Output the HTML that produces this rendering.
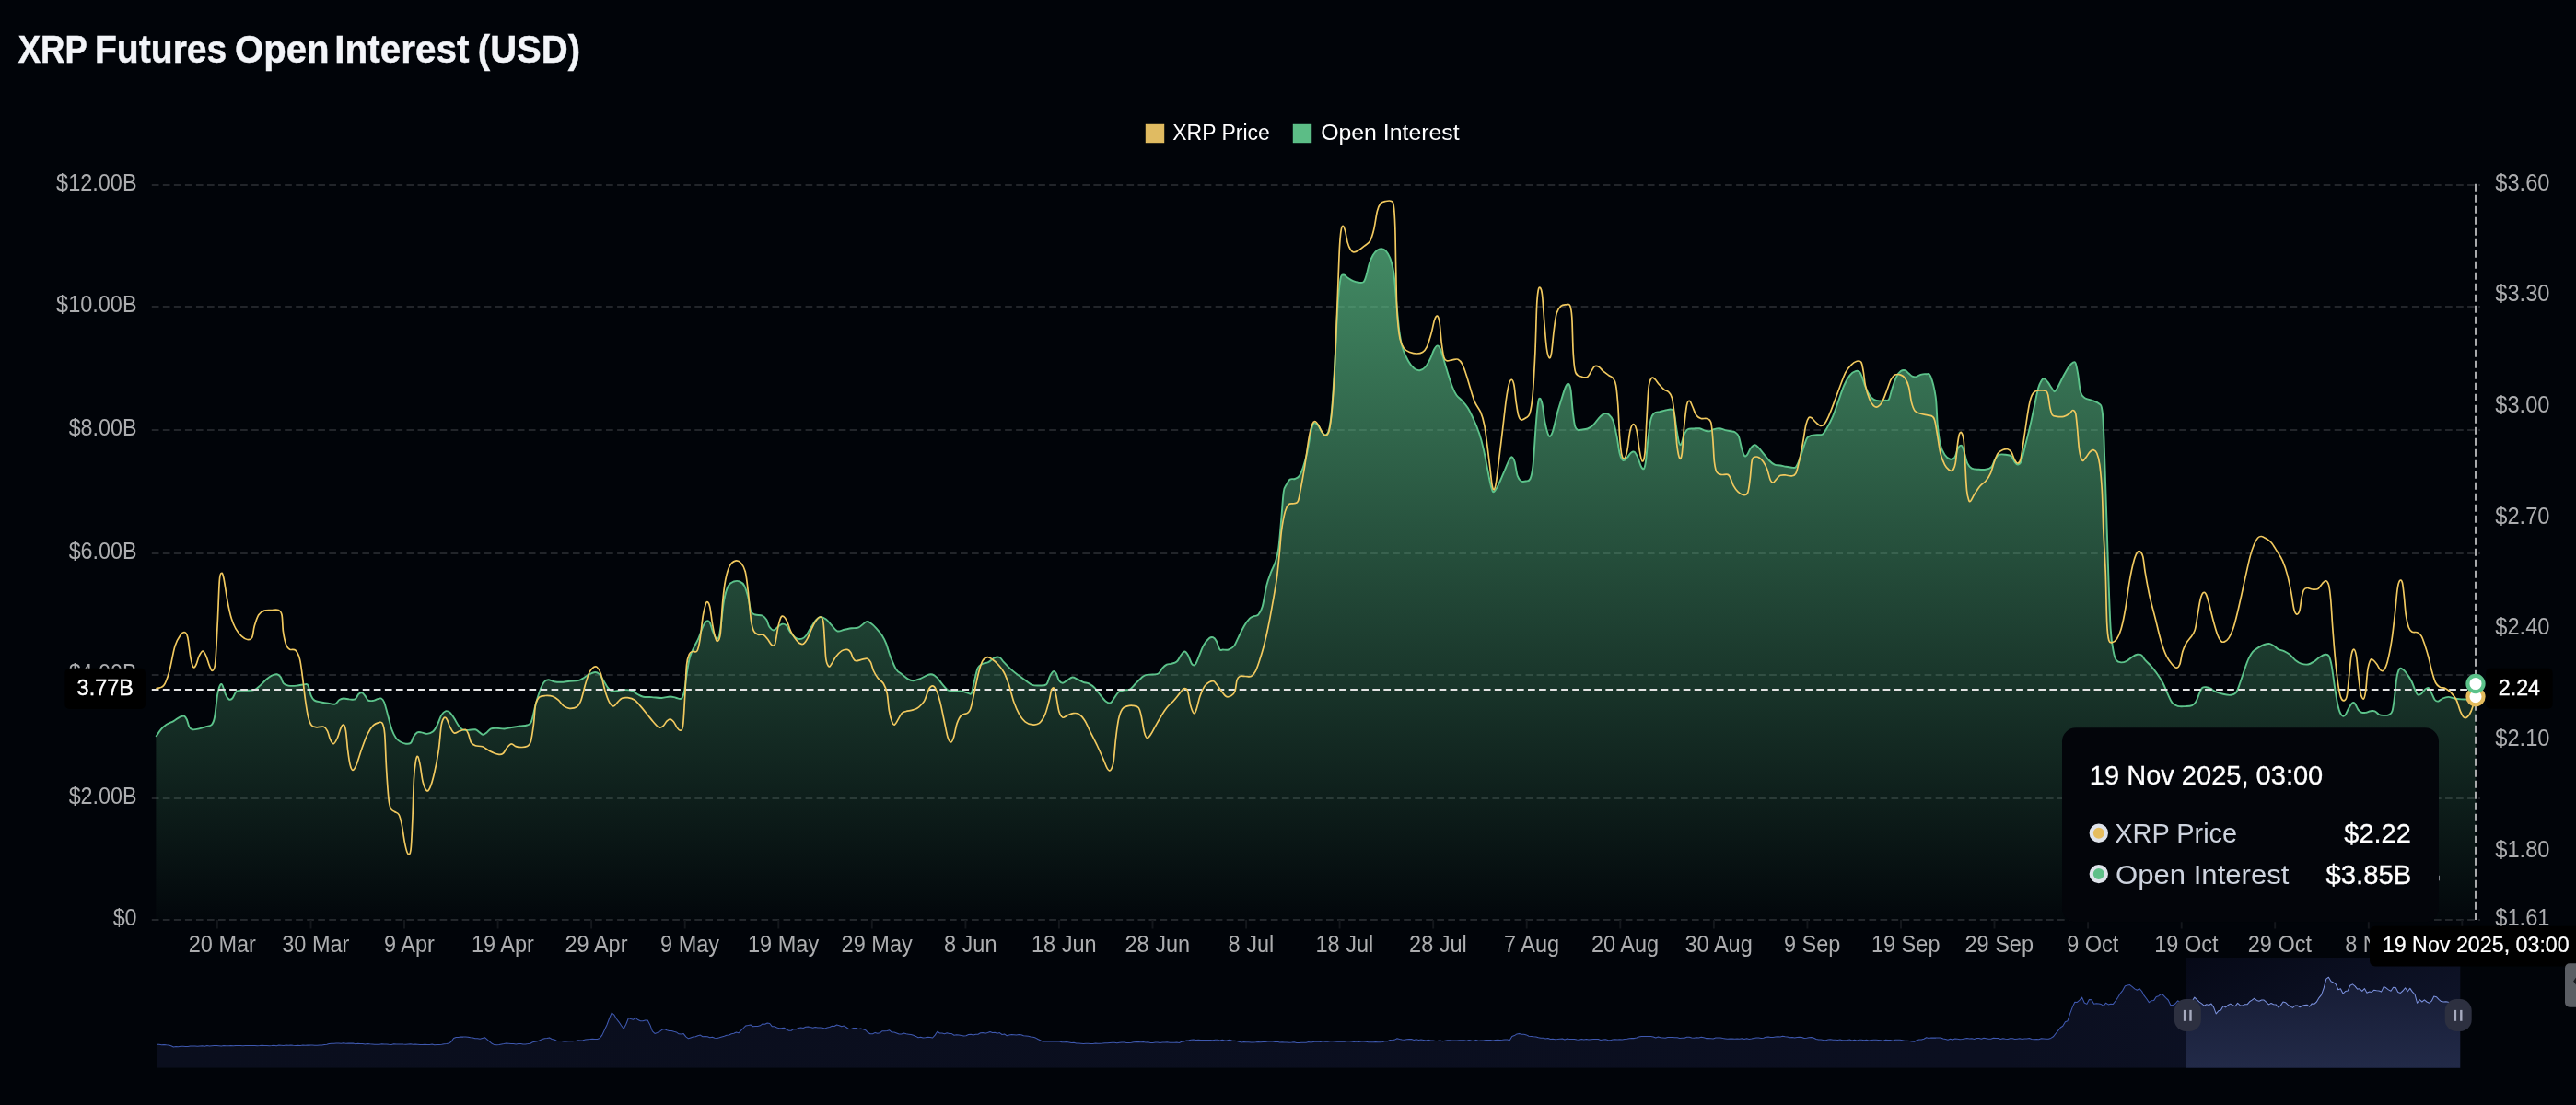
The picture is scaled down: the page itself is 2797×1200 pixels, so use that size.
<!DOCTYPE html>
<html><head><meta charset="utf-8"><title>XRP Futures Open Interest (USD)</title>
<style>html,body{margin:0;padding:0;background:#010409;}svg{will-change:transform}body{width:2797px;height:1200px;overflow:hidden;font-family:"Liberation Sans",sans-serif;}</style>
</head><body>
<svg width="2797" height="1200" viewBox="0 0 2797 1200" style="display:block">
<defs>
<linearGradient id="ga" x1="0" y1="270" x2="0" y2="999" gradientUnits="userSpaceOnUse">
<stop offset="0" stop-color="#5ec38a" stop-opacity="0.70"/>
<stop offset="1" stop-color="#5ec38a" stop-opacity="0.015"/>
</linearGradient>
<linearGradient id="gm" x1="0" y1="0" x2="1" y2="0">
<stop offset="0" stop-color="#0a0e1d"/><stop offset="0.8" stop-color="#0b0f20"/><stop offset="1" stop-color="#0d1226"/>
</linearGradient>
<linearGradient id="gs" x1="0" y1="0" x2="1" y2="1">
<stop offset="0" stop-color="#060917"/><stop offset="1" stop-color="#12182f"/>
</linearGradient>
<linearGradient id="gw" x1="0" y1="1070" x2="0" y2="1160" gradientUnits="userSpaceOnUse">
<stop offset="0" stop-color="#171d36"/><stop offset="1" stop-color="#222a48"/>
</linearGradient>
</defs>
<rect width="2797" height="1200" fill="#010409"/>
<text transform="translate(19.70 68.00) scale(0.8505 1)" font-family="Liberation Sans, sans-serif" font-size="43" font-weight="bold" fill="#f2f4f8" text-anchor="start" stroke="#f2f4f8" stroke-width="0.45">XRP</text>
<text transform="translate(103.00 68.00) scale(0.9094 1)" font-family="Liberation Sans, sans-serif" font-size="43" font-weight="bold" fill="#f2f4f8" text-anchor="start" stroke="#f2f4f8" stroke-width="0.45">Futures</text>
<text transform="translate(254.90 68.00) scale(0.9346 1)" font-family="Liberation Sans, sans-serif" font-size="43" font-weight="bold" fill="#f2f4f8" text-anchor="start" stroke="#f2f4f8" stroke-width="0.45">Open</text>
<text transform="translate(363.30 68.00) scale(0.9419 1)" font-family="Liberation Sans, sans-serif" font-size="43" font-weight="bold" fill="#f2f4f8" text-anchor="start" stroke="#f2f4f8" stroke-width="0.45">Interest</text>
<text transform="translate(518.80 68.00) scale(0.9311 1)" font-family="Liberation Sans, sans-serif" font-size="43" font-weight="bold" fill="#f2f4f8" text-anchor="start" stroke="#f2f4f8" stroke-width="0.45">(USD)</text>
<rect x="1244.3" y="135.3" width="19.4" height="19.4" fill="#e0bb62" stroke="#f0c864" stroke-width="1"/>
<text transform="translate(1273.30 151.80) scale(0.9984 1)" font-family="Liberation Sans, sans-serif" font-size="23" fill="#ffffff" text-anchor="start">XRP Price</text>
<rect x="1404.3" y="135.3" width="19.4" height="19.4" fill="#5cbd86" stroke="#62cd92" stroke-width="1"/>
<text transform="translate(1434.20 151.80) scale(1.0799 1)" font-family="Liberation Sans, sans-serif" font-size="23" fill="#ffffff" text-anchor="start">Open Interest</text>
<line x1="164.8" x2="2693" y1="201" y2="201" stroke="#22252a" stroke-width="2" stroke-dasharray="7.7 4.33"/>
<line x1="164.8" x2="2693" y1="333" y2="333" stroke="#22252a" stroke-width="2" stroke-dasharray="7.7 4.33"/>
<line x1="164.8" x2="2693" y1="467" y2="467" stroke="#22252a" stroke-width="2" stroke-dasharray="7.7 4.33"/>
<line x1="164.8" x2="2693" y1="601" y2="601" stroke="#22252a" stroke-width="2" stroke-dasharray="7.7 4.33"/>
<line x1="164.8" x2="2693" y1="733" y2="733" stroke="#22252a" stroke-width="2" stroke-dasharray="7.7 4.33"/>
<line x1="164.8" x2="2693" y1="867" y2="867" stroke="#22252a" stroke-width="2" stroke-dasharray="7.7 4.33"/>
<line x1="164.8" x2="2693" y1="999" y2="999" stroke="#22252a" stroke-width="2" stroke-dasharray="7.7 4.33"/>
<line x1="235.9" x2="235.9" y1="999" y2="1008.5" stroke="#14171c" stroke-width="2"/>
<line x1="337.5" x2="337.5" y1="999" y2="1008.5" stroke="#14171c" stroke-width="2"/>
<line x1="439.0" x2="439.0" y1="999" y2="1008.5" stroke="#14171c" stroke-width="2"/>
<line x1="540.6" x2="540.6" y1="999" y2="1008.5" stroke="#14171c" stroke-width="2"/>
<line x1="642.1" x2="642.1" y1="999" y2="1008.5" stroke="#14171c" stroke-width="2"/>
<line x1="743.7" x2="743.7" y1="999" y2="1008.5" stroke="#14171c" stroke-width="2"/>
<line x1="845.3" x2="845.3" y1="999" y2="1008.5" stroke="#14171c" stroke-width="2"/>
<line x1="946.8" x2="946.8" y1="999" y2="1008.5" stroke="#14171c" stroke-width="2"/>
<line x1="1048.4" x2="1048.4" y1="999" y2="1008.5" stroke="#14171c" stroke-width="2"/>
<line x1="1149.9" x2="1149.9" y1="999" y2="1008.5" stroke="#14171c" stroke-width="2"/>
<line x1="1251.5" x2="1251.5" y1="999" y2="1008.5" stroke="#14171c" stroke-width="2"/>
<line x1="1353.1" x2="1353.1" y1="999" y2="1008.5" stroke="#14171c" stroke-width="2"/>
<line x1="1454.6" x2="1454.6" y1="999" y2="1008.5" stroke="#14171c" stroke-width="2"/>
<line x1="1556.2" x2="1556.2" y1="999" y2="1008.5" stroke="#14171c" stroke-width="2"/>
<line x1="1657.7" x2="1657.7" y1="999" y2="1008.5" stroke="#14171c" stroke-width="2"/>
<line x1="1759.3" x2="1759.3" y1="999" y2="1008.5" stroke="#14171c" stroke-width="2"/>
<line x1="1860.9" x2="1860.9" y1="999" y2="1008.5" stroke="#14171c" stroke-width="2"/>
<line x1="1962.4" x2="1962.4" y1="999" y2="1008.5" stroke="#14171c" stroke-width="2"/>
<line x1="2064.0" x2="2064.0" y1="999" y2="1008.5" stroke="#14171c" stroke-width="2"/>
<line x1="2165.5" x2="2165.5" y1="999" y2="1008.5" stroke="#14171c" stroke-width="2"/>
<line x1="2267.1" x2="2267.1" y1="999" y2="1008.5" stroke="#14171c" stroke-width="2"/>
<line x1="2368.7" x2="2368.7" y1="999" y2="1008.5" stroke="#14171c" stroke-width="2"/>
<line x1="2470.2" x2="2470.2" y1="999" y2="1008.5" stroke="#14171c" stroke-width="2"/>
<line x1="2571.8" x2="2571.8" y1="999" y2="1008.5" stroke="#14171c" stroke-width="2"/>
<line x1="2673.3" x2="2673.3" y1="999" y2="1008.5" stroke="#14171c" stroke-width="2"/>
<text transform="translate(148.60 207.20) scale(0.9393 1)" font-family="Liberation Sans, sans-serif" font-size="25" fill="#acadaf" text-anchor="end">$12.00B</text>
<text transform="translate(148.60 339.20) scale(0.9393 1)" font-family="Liberation Sans, sans-serif" font-size="25" fill="#acadaf" text-anchor="end">$10.00B</text>
<text transform="translate(148.60 473.20) scale(0.9339 1)" font-family="Liberation Sans, sans-serif" font-size="25" fill="#acadaf" text-anchor="end">$8.00B</text>
<text transform="translate(148.60 607.20) scale(0.9339 1)" font-family="Liberation Sans, sans-serif" font-size="25" fill="#acadaf" text-anchor="end">$6.00B</text>
<text transform="translate(148.60 739.20) scale(0.9339 1)" font-family="Liberation Sans, sans-serif" font-size="25" fill="#acadaf" text-anchor="end">$4.00B</text>
<text transform="translate(148.60 873.20) scale(0.9339 1)" font-family="Liberation Sans, sans-serif" font-size="25" fill="#acadaf" text-anchor="end">$2.00B</text>
<text transform="translate(148.60 1005.20) scale(0.9336 1)" font-family="Liberation Sans, sans-serif" font-size="25" fill="#acadaf" text-anchor="end">$0</text>
<text transform="translate(2709.30 207.10) scale(0.9463 1)" font-family="Liberation Sans, sans-serif" font-size="25" fill="#acadaf" text-anchor="start">$3.60</text>
<text transform="translate(2709.30 327.20) scale(0.9463 1)" font-family="Liberation Sans, sans-serif" font-size="25" fill="#acadaf" text-anchor="start">$3.30</text>
<text transform="translate(2709.30 448.00) scale(0.9463 1)" font-family="Liberation Sans, sans-serif" font-size="25" fill="#acadaf" text-anchor="start">$3.00</text>
<text transform="translate(2709.30 568.60) scale(0.9463 1)" font-family="Liberation Sans, sans-serif" font-size="25" fill="#acadaf" text-anchor="start">$2.70</text>
<text transform="translate(2709.30 689.00) scale(0.9463 1)" font-family="Liberation Sans, sans-serif" font-size="25" fill="#acadaf" text-anchor="start">$2.40</text>
<text transform="translate(2709.30 810.20) scale(0.9463 1)" font-family="Liberation Sans, sans-serif" font-size="25" fill="#acadaf" text-anchor="start">$2.10</text>
<text transform="translate(2709.30 931.40) scale(0.9463 1)" font-family="Liberation Sans, sans-serif" font-size="25" fill="#acadaf" text-anchor="start">$1.80</text>
<text transform="translate(2709.30 1005.40) scale(0.9463 1)" font-family="Liberation Sans, sans-serif" font-size="25" fill="#acadaf" text-anchor="start">$1.61</text>
<text transform="translate(241.30 1034.00) scale(0.9410 1)" font-family="Liberation Sans, sans-serif" font-size="25" fill="#acadaf" text-anchor="middle">20 Mar</text>
<text transform="translate(342.85 1034.00) scale(0.9410 1)" font-family="Liberation Sans, sans-serif" font-size="25" fill="#acadaf" text-anchor="middle">30 Mar</text>
<text transform="translate(444.40 1034.00) scale(0.9410 1)" font-family="Liberation Sans, sans-serif" font-size="25" fill="#acadaf" text-anchor="middle">9 Apr</text>
<text transform="translate(545.95 1034.00) scale(0.9410 1)" font-family="Liberation Sans, sans-serif" font-size="25" fill="#acadaf" text-anchor="middle">19 Apr</text>
<text transform="translate(647.50 1034.00) scale(0.9410 1)" font-family="Liberation Sans, sans-serif" font-size="25" fill="#acadaf" text-anchor="middle">29 Apr</text>
<text transform="translate(749.05 1034.00) scale(0.9410 1)" font-family="Liberation Sans, sans-serif" font-size="25" fill="#acadaf" text-anchor="middle">9 May</text>
<text transform="translate(850.60 1034.00) scale(0.9410 1)" font-family="Liberation Sans, sans-serif" font-size="25" fill="#acadaf" text-anchor="middle">19 May</text>
<text transform="translate(952.15 1034.00) scale(0.9410 1)" font-family="Liberation Sans, sans-serif" font-size="25" fill="#acadaf" text-anchor="middle">29 May</text>
<text transform="translate(1053.70 1034.00) scale(0.9410 1)" font-family="Liberation Sans, sans-serif" font-size="25" fill="#acadaf" text-anchor="middle">8 Jun</text>
<text transform="translate(1155.25 1034.00) scale(0.9410 1)" font-family="Liberation Sans, sans-serif" font-size="25" fill="#acadaf" text-anchor="middle">18 Jun</text>
<text transform="translate(1256.80 1034.00) scale(0.9410 1)" font-family="Liberation Sans, sans-serif" font-size="25" fill="#acadaf" text-anchor="middle">28 Jun</text>
<text transform="translate(1358.35 1034.00) scale(0.9410 1)" font-family="Liberation Sans, sans-serif" font-size="25" fill="#acadaf" text-anchor="middle">8 Jul</text>
<text transform="translate(1459.90 1034.00) scale(0.9410 1)" font-family="Liberation Sans, sans-serif" font-size="25" fill="#acadaf" text-anchor="middle">18 Jul</text>
<text transform="translate(1561.45 1034.00) scale(0.9410 1)" font-family="Liberation Sans, sans-serif" font-size="25" fill="#acadaf" text-anchor="middle">28 Jul</text>
<text transform="translate(1663.00 1034.00) scale(0.9410 1)" font-family="Liberation Sans, sans-serif" font-size="25" fill="#acadaf" text-anchor="middle">7 Aug</text>
<text transform="translate(1764.55 1034.00) scale(0.9410 1)" font-family="Liberation Sans, sans-serif" font-size="25" fill="#acadaf" text-anchor="middle">20 Aug</text>
<text transform="translate(1866.10 1034.00) scale(0.9410 1)" font-family="Liberation Sans, sans-serif" font-size="25" fill="#acadaf" text-anchor="middle">30 Aug</text>
<text transform="translate(1967.65 1034.00) scale(0.9410 1)" font-family="Liberation Sans, sans-serif" font-size="25" fill="#acadaf" text-anchor="middle">9 Sep</text>
<text transform="translate(2069.20 1034.00) scale(0.9410 1)" font-family="Liberation Sans, sans-serif" font-size="25" fill="#acadaf" text-anchor="middle">19 Sep</text>
<text transform="translate(2170.75 1034.00) scale(0.9410 1)" font-family="Liberation Sans, sans-serif" font-size="25" fill="#acadaf" text-anchor="middle">29 Sep</text>
<text transform="translate(2272.30 1034.00) scale(0.9410 1)" font-family="Liberation Sans, sans-serif" font-size="25" fill="#acadaf" text-anchor="middle">9 Oct</text>
<text transform="translate(2373.85 1034.00) scale(0.9410 1)" font-family="Liberation Sans, sans-serif" font-size="25" fill="#acadaf" text-anchor="middle">19 Oct</text>
<text transform="translate(2475.40 1034.00) scale(0.9410 1)" font-family="Liberation Sans, sans-serif" font-size="25" fill="#acadaf" text-anchor="middle">29 Oct</text>
<text transform="translate(2576.95 1034.00) scale(0.9410 1)" font-family="Liberation Sans, sans-serif" font-size="25" fill="#acadaf" text-anchor="middle">8 Nov</text>
<path d="M169.4,800.0C170.3,798.7 172.7,794.5 174.6,792.3C176.5,790.1 178.5,788.3 180.8,786.8C183.1,785.3 186.2,784.4 188.5,783.1C190.8,781.8 192.7,780.0 194.6,779.1C196.5,778.2 198.4,777.1 199.8,777.5C201.2,777.9 202.0,779.5 202.9,781.5C203.8,783.5 204.4,787.4 205.4,789.2C206.4,791.0 207.3,791.9 209.1,792.3C210.9,792.7 213.8,791.9 216.2,791.4C218.6,790.9 221.5,790.0 223.8,789.2C226.1,788.4 228.4,788.6 230.0,786.8C231.6,785.0 232.1,784.0 233.1,778.5C234.1,773.0 235.2,759.6 236.2,753.8C237.2,748.0 238.3,745.2 239.2,743.7C240.1,742.2 240.8,742.9 241.7,744.6C242.6,746.3 243.7,751.3 244.8,753.8C245.9,756.3 247.3,758.6 248.5,759.4C249.7,760.2 250.9,759.8 252.2,758.5C253.5,757.2 254.8,752.9 256.2,751.4C257.6,749.9 259.0,750.1 260.8,749.8C262.6,749.5 264.3,749.9 266.9,749.8C269.5,749.7 273.6,750.1 276.2,749.2C278.8,748.3 280.2,746.4 282.3,744.6C284.4,742.8 286.4,740.3 288.5,738.5C290.6,736.7 292.6,734.8 294.6,733.8C296.7,732.8 299.1,732.0 300.8,732.3C302.5,732.6 303.6,733.8 304.8,735.4C306.0,737.0 306.4,740.7 307.8,742.2C309.2,743.7 310.7,744.2 313.1,744.6C315.5,745.0 319.2,744.9 322.3,744.6C325.4,744.4 329.4,743.1 331.5,743.1C333.6,743.1 333.6,742.6 334.6,744.6C335.6,746.6 336.6,752.7 337.7,755.4C338.8,758.1 339.6,759.4 341.4,760.6C343.2,761.8 346.0,762.0 348.5,762.5C351.0,763.0 353.6,763.4 356.2,763.7C358.8,764.1 361.8,765.2 363.8,764.6C365.9,764.0 366.9,761.0 368.5,760.0C370.1,759.0 371.3,758.6 373.1,758.5C374.9,758.4 377.1,759.2 379.2,759.4C381.2,759.5 383.7,760.3 385.4,759.4C387.1,758.5 388.1,755.0 389.4,753.8C390.7,752.6 392.0,752.0 393.1,752.3C394.2,752.6 395.1,754.0 396.2,755.4C397.3,756.8 398.3,759.7 399.8,760.6C401.3,761.5 403.7,761.1 405.4,760.9C407.1,760.6 408.6,759.5 410.0,759.1C411.4,758.7 412.8,757.9 414.0,758.5C415.2,759.1 416.0,759.7 417.1,762.5C418.2,765.3 419.4,770.4 420.8,775.4C422.2,780.4 423.9,787.9 425.4,792.3C426.9,796.6 428.5,799.3 430.0,801.5C431.5,803.7 432.8,804.5 434.6,805.5C436.4,806.5 438.9,807.5 440.8,807.7C442.7,807.9 444.6,808.1 446.0,806.8C447.4,805.5 447.9,801.9 449.1,800.0C450.3,798.1 451.7,796.2 453.1,795.4C454.5,794.6 455.9,795.1 457.7,795.4C459.5,795.6 461.8,797.0 463.8,796.9C465.9,796.8 468.2,796.0 470.0,794.5C471.8,793.0 473.1,790.6 474.6,787.7C476.1,784.8 477.7,779.5 479.2,776.9C480.7,774.3 482.2,772.8 483.8,772.3C485.4,771.8 486.9,772.5 488.5,773.8C490.1,775.1 491.6,777.7 493.1,780.0C494.6,782.3 496.2,785.7 497.7,787.7C499.2,789.8 500.5,791.4 502.3,792.3C504.1,793.2 506.2,792.9 508.5,792.9C510.8,792.9 514.2,791.9 516.2,792.3C518.2,792.7 519.4,794.5 520.8,795.4C522.2,796.3 523.2,797.8 524.5,797.8C525.8,797.8 527.1,796.5 528.5,795.4C529.9,794.3 531.3,792.2 533.1,791.4C534.9,790.6 536.8,790.8 539.2,790.8C541.6,790.8 545.0,791.6 547.7,791.5C550.4,791.4 552.6,790.5 555.4,790.0C558.2,789.5 561.8,788.9 564.6,788.5C567.4,788.1 570.2,788.3 572.3,787.5C574.3,786.7 575.4,787.5 576.9,783.8C578.4,780.1 580.0,771.0 581.5,765.4C583.0,759.8 584.7,754.1 586.2,750.0C587.8,745.9 589.3,742.8 590.8,740.8C592.3,738.8 593.6,738.4 595.4,738.3C597.2,738.2 599.2,739.8 601.5,740.2C603.8,740.6 606.4,740.9 609.2,740.8C612.0,740.7 615.4,740.1 618.5,739.8C621.6,739.5 625.2,739.8 627.7,739.2C630.2,738.6 631.8,737.4 633.8,736.2C635.8,735.0 637.9,733.2 640.0,732.2C642.1,731.2 644.4,730.0 646.2,730.0C648.0,730.0 649.3,730.7 650.8,732.2C652.3,733.7 653.9,736.8 655.4,739.2C656.9,741.7 658.5,745.0 660.0,746.9C661.5,748.8 662.8,750.1 664.6,750.6C666.4,751.1 668.5,750.2 670.8,750.0C673.1,749.8 675.9,749.1 678.5,749.1C681.1,749.1 683.9,749.2 686.2,750.0C688.5,750.8 690.2,752.9 692.3,754.0C694.3,755.1 695.9,756.3 698.5,756.8C701.1,757.3 704.4,756.9 707.7,757.1C711.0,757.3 715.2,758.1 718.5,758.0C721.8,757.9 725.2,756.5 727.7,756.5C730.2,756.5 731.8,757.4 733.8,757.7C735.8,758.1 738.5,759.9 740.0,758.6C741.5,757.3 742.1,755.0 743.1,750.0C744.1,745.0 745.2,734.6 746.2,728.5C747.2,722.4 747.9,717.5 749.2,713.1C750.5,708.7 752.2,705.6 753.8,702.3C755.3,699.0 757.0,696.7 758.5,693.1C760.0,689.5 761.7,683.9 763.1,680.8C764.5,677.7 765.8,675.4 767.1,674.6C768.4,673.8 769.7,674.4 770.8,676.2C771.9,678.0 772.7,682.6 773.8,685.4C774.9,688.2 776.4,692.1 777.5,693.1C778.6,694.1 779.7,694.3 780.6,691.5C781.5,688.7 782.2,682.9 783.1,676.2C784.0,669.5 784.9,658.2 786.2,651.5C787.5,644.8 789.0,639.5 790.8,636.2C792.6,632.9 794.8,632.3 796.9,631.5C799.0,630.7 801.2,630.7 803.1,631.5C805.0,632.3 806.8,633.4 808.3,636.2C809.8,639.0 811.1,643.9 812.3,648.5C813.5,653.1 814.1,660.6 815.4,663.8C816.7,667.0 818.0,666.7 820.0,667.5C822.0,668.3 825.7,667.6 827.7,668.5C829.8,669.4 831.0,671.1 832.3,673.1C833.6,675.1 834.1,678.9 835.4,680.8C836.7,682.7 838.5,684.5 840.0,684.5C841.5,684.5 843.1,681.9 844.6,680.8C846.1,679.7 847.7,678.0 849.2,677.7C850.7,677.4 852.2,677.7 853.8,679.2C855.3,680.7 856.7,684.6 858.5,686.9C860.3,689.2 862.6,692.0 864.6,693.1C866.6,694.2 869.0,694.2 870.8,693.7C872.6,693.2 873.9,691.9 875.4,690.0C876.9,688.1 878.2,685.1 880.0,682.3C881.8,679.5 884.4,675.1 886.2,673.1C888.0,671.1 889.0,670.1 890.8,670.0C892.6,669.9 894.8,671.0 896.9,672.5C899.0,674.0 901.0,677.1 903.1,679.2C905.2,681.4 906.9,684.6 909.2,685.4C911.5,686.2 914.3,684.3 916.9,683.8C919.5,683.3 922.0,682.7 924.6,682.3C927.2,681.9 929.6,682.6 932.3,681.4C935.0,680.2 938.6,676.0 940.8,675.2C943.0,674.4 943.6,675.6 945.4,676.8C947.2,678.0 949.5,680.1 951.5,682.3C953.5,684.5 955.9,687.2 957.7,690.0C959.5,692.8 960.8,695.4 962.3,699.2C963.8,703.1 965.1,708.5 966.9,713.1C968.7,717.7 971.0,723.7 973.1,726.9C975.2,730.1 977.2,730.5 979.2,732.2C981.2,733.9 983.4,735.9 985.4,737.1C987.4,738.3 989.2,739.2 991.5,739.2C993.8,739.2 996.6,738.1 999.2,737.1C1001.8,736.1 1004.7,733.9 1006.9,733.1C1009.1,732.3 1010.7,732.0 1012.5,732.5C1014.3,733.0 1015.8,734.3 1017.7,736.2C1019.6,738.1 1021.9,741.6 1023.8,743.8C1025.7,746.0 1027.0,748.3 1029.1,749.4C1031.2,750.5 1033.8,750.4 1036.2,750.6C1038.7,750.8 1041.5,750.3 1043.8,750.6C1046.1,750.9 1048.2,751.8 1050.0,752.2C1051.8,752.6 1053.3,755.0 1054.6,753.1C1055.9,751.2 1056.5,745.4 1057.7,740.8C1058.9,736.2 1060.2,728.7 1061.7,725.4C1063.2,722.1 1065.0,721.8 1066.9,720.8C1068.8,719.8 1071.0,720.2 1073.1,719.2C1075.1,718.2 1077.2,715.5 1079.2,714.6C1081.2,713.7 1083.6,713.2 1085.4,714.0C1087.2,714.8 1088.0,717.1 1090.0,719.2C1092.0,721.4 1095.1,724.6 1097.7,726.9C1100.3,729.2 1102.8,731.1 1105.4,733.1C1108.0,735.1 1110.5,736.8 1113.1,738.6C1115.7,740.4 1118.2,742.8 1120.8,743.8C1123.4,744.8 1125.9,744.6 1128.5,744.5C1131.1,744.4 1134.3,744.9 1136.2,743.2C1138.1,741.6 1138.5,737.0 1139.8,734.6C1141.1,732.2 1142.6,729.6 1143.8,729.1C1145.0,728.6 1145.9,729.8 1146.9,731.5C1147.9,733.2 1148.8,737.5 1150.0,739.2C1151.2,740.9 1152.5,741.8 1154.0,741.7C1155.5,741.6 1157.5,739.6 1159.2,738.6C1161.0,737.6 1162.7,735.6 1164.5,735.5C1166.3,735.4 1168.0,736.8 1170.0,737.7C1172.0,738.6 1174.2,740.0 1176.2,740.8C1178.2,741.6 1180.2,741.3 1182.3,742.3C1184.3,743.3 1186.5,744.8 1188.5,746.9C1190.5,749.0 1192.5,752.1 1194.6,754.6C1196.6,757.1 1198.9,760.3 1200.8,761.7C1202.7,763.1 1204.5,763.9 1206.0,763.2C1207.5,762.5 1208.6,759.7 1210.0,757.7C1211.4,755.8 1212.8,752.9 1214.6,751.5C1216.4,750.1 1218.8,749.9 1220.8,749.4C1222.8,748.9 1224.9,749.7 1226.9,748.5C1229.0,747.3 1231.0,744.3 1233.1,742.3C1235.1,740.2 1237.4,737.7 1239.2,736.2C1241.0,734.7 1241.8,733.7 1243.8,733.1C1245.8,732.5 1249.2,732.8 1251.5,732.5C1253.8,732.2 1255.9,732.7 1257.7,731.5C1259.5,730.3 1260.8,727.0 1262.3,725.4C1263.8,723.8 1265.4,722.5 1266.9,721.7C1268.4,720.9 1269.7,721.3 1271.5,720.8C1273.3,720.3 1275.9,720.1 1277.7,718.6C1279.5,717.1 1280.9,713.4 1282.3,711.5C1283.7,709.6 1285.0,707.5 1286.3,707.5C1287.6,707.5 1288.7,709.3 1290.0,711.5C1291.3,713.7 1292.7,719.1 1294.0,720.8C1295.3,722.5 1296.4,723.0 1297.7,721.7C1299.0,720.4 1300.2,716.6 1301.7,713.1C1303.2,709.6 1305.0,704.1 1306.9,700.8C1308.8,697.5 1311.4,694.5 1313.1,693.1C1314.8,691.7 1315.8,691.7 1317.1,692.2C1318.4,692.7 1319.6,694.0 1320.8,696.2C1322.0,698.4 1323.3,703.9 1324.5,705.4C1325.7,706.9 1326.2,705.5 1327.7,705.5C1329.2,705.5 1331.8,706.2 1333.8,705.5C1335.8,704.8 1338.2,703.7 1340.0,701.5C1341.8,699.3 1342.8,695.9 1344.6,692.3C1346.4,688.7 1348.8,683.4 1350.8,680.0C1352.8,676.6 1355.1,673.5 1356.9,671.7C1358.7,669.9 1360.0,669.9 1361.5,669.2C1363.0,668.5 1364.7,669.5 1366.2,667.7C1367.8,665.9 1369.3,663.9 1370.8,658.5C1372.3,653.1 1373.9,641.6 1375.4,635.4C1376.9,629.2 1378.5,625.6 1380.0,621.5C1381.5,617.4 1383.2,615.1 1384.6,610.8C1386.0,606.4 1387.2,603.6 1388.3,595.4C1389.4,587.2 1390.5,571.8 1391.4,561.5C1392.3,551.2 1392.9,539.7 1393.8,533.8C1394.7,527.9 1395.8,528.4 1396.9,526.2C1398.0,524.0 1399.0,521.6 1400.6,520.6C1402.1,519.6 1404.5,520.6 1406.2,520.0C1407.9,519.4 1409.4,518.9 1410.8,516.9C1412.2,514.9 1413.4,511.8 1414.8,507.7C1416.2,503.6 1417.7,498.4 1419.1,492.3C1420.5,486.2 1421.9,476.2 1423.1,470.8C1424.3,465.4 1424.9,461.6 1426.2,460.0C1427.5,458.4 1429.3,460.0 1430.8,461.5C1432.3,463.0 1434.0,467.4 1435.4,469.2C1436.8,471.0 1438.1,472.8 1439.4,472.3C1440.7,471.8 1442.0,471.1 1443.1,466.2C1444.2,461.3 1445.2,454.7 1446.2,443.1C1447.2,431.6 1448.2,414.8 1449.2,396.9C1450.2,378.9 1451.3,351.0 1452.3,335.4C1453.3,319.8 1454.3,309.2 1455.4,303.1C1456.5,297.0 1457.8,298.8 1459.1,298.5C1460.4,298.2 1461.4,300.4 1463.1,301.5C1464.8,302.6 1467.2,304.3 1469.2,305.2C1471.2,306.1 1473.5,306.6 1475.4,306.8C1477.3,307.0 1479.2,307.6 1480.6,306.2C1482.0,304.8 1482.7,301.8 1483.7,298.5C1484.7,295.2 1485.6,289.8 1486.8,286.2C1488.0,282.6 1489.4,279.3 1490.8,276.9C1492.2,274.5 1493.9,272.8 1495.4,271.7C1496.9,270.6 1498.5,270.1 1500.0,270.2C1501.5,270.3 1503.1,270.7 1504.6,272.3C1506.1,273.9 1507.8,276.1 1509.2,280.0C1510.6,283.9 1512.0,287.2 1513.2,295.4C1514.4,303.6 1515.3,318.4 1516.3,329.2C1517.3,340.0 1518.3,351.8 1519.4,360.0C1520.5,368.2 1521.5,373.1 1523.1,378.5C1524.7,383.9 1527.2,388.7 1529.2,392.3C1531.2,395.9 1533.4,398.4 1535.4,400.0C1537.5,401.6 1539.5,402.4 1541.5,402.2C1543.5,401.9 1545.8,400.7 1547.7,398.5C1549.7,396.3 1551.7,392.3 1553.2,389.2C1554.7,386.1 1555.7,382.3 1556.9,380.0C1558.1,377.7 1559.5,375.6 1560.6,375.4C1561.7,375.1 1562.5,375.9 1563.7,378.5C1564.9,381.1 1566.3,386.2 1567.7,390.8C1569.1,395.4 1570.8,401.3 1572.3,406.2C1573.8,411.1 1575.4,416.2 1576.9,420.0C1578.4,423.8 1579.7,426.6 1581.5,429.2C1583.3,431.8 1585.7,433.1 1587.7,435.4C1589.8,437.7 1591.8,439.8 1593.8,443.1C1595.8,446.4 1597.9,450.8 1600.0,455.4C1602.1,460.0 1604.4,465.4 1606.2,470.8C1608.0,476.2 1609.4,481.6 1610.8,487.7C1612.2,493.8 1613.6,501.8 1614.8,507.7C1616.0,513.6 1616.8,518.8 1617.8,523.1C1618.8,527.5 1619.8,532.5 1620.9,533.8C1622.0,535.1 1623.2,532.8 1624.6,530.8C1626.0,528.8 1627.7,524.8 1629.2,521.5C1630.7,518.2 1632.2,514.4 1633.8,510.8C1635.3,507.2 1637.2,502.4 1638.5,500.0C1639.8,497.6 1640.5,496.1 1641.5,496.3C1642.5,496.6 1643.6,498.1 1644.6,501.5C1645.6,504.9 1646.5,513.4 1647.7,516.9C1648.9,520.4 1650.2,521.6 1651.7,522.5C1653.2,523.4 1655.3,522.9 1656.9,522.5C1658.5,522.1 1660.2,523.0 1661.5,520.0C1662.8,517.0 1663.6,514.4 1664.6,504.6C1665.6,494.9 1666.8,472.8 1667.7,461.5C1668.6,450.2 1669.4,441.7 1670.2,436.9C1671.0,432.1 1671.5,432.4 1672.3,432.9C1673.1,433.4 1673.9,435.7 1674.8,440.0C1675.7,444.3 1676.5,453.4 1677.5,458.5C1678.5,463.6 1679.7,468.2 1680.6,470.8C1681.5,473.4 1682.2,474.3 1683.1,473.8C1684.0,473.3 1684.9,471.8 1686.2,467.7C1687.5,463.6 1689.3,454.8 1690.8,449.2C1692.3,443.6 1693.9,438.7 1695.4,433.8C1696.9,428.9 1698.7,422.8 1700.0,420.0C1701.3,417.2 1702.2,416.4 1703.1,416.9C1704.0,417.4 1704.7,418.2 1705.5,423.1C1706.3,428.0 1706.9,439.5 1707.7,446.2C1708.5,452.9 1709.2,459.6 1710.2,463.1C1711.2,466.6 1712.8,466.5 1713.8,467.1C1714.8,467.7 1714.5,467.1 1716.2,466.8C1717.9,466.5 1721.5,466.4 1723.8,465.5C1726.1,464.6 1727.9,463.4 1730.0,461.5C1732.1,459.6 1734.2,455.9 1736.2,453.8C1738.2,451.8 1740.5,449.8 1742.3,449.2C1744.1,448.6 1745.4,448.9 1746.9,450.2C1748.4,451.5 1750.1,453.0 1751.5,456.9C1752.9,460.8 1754.3,467.9 1755.5,473.8C1756.7,479.7 1757.5,487.9 1758.6,492.3C1759.7,496.7 1760.9,499.2 1762.3,500.0C1763.7,500.8 1765.5,498.3 1766.9,496.9C1768.3,495.5 1769.6,492.7 1770.9,491.7C1772.2,490.7 1773.4,489.9 1774.6,490.8C1775.8,491.7 1777.1,494.3 1778.3,496.9C1779.5,499.5 1780.6,504.1 1781.7,506.2C1782.8,508.2 1783.9,510.0 1784.8,509.2C1785.7,508.4 1786.1,506.9 1786.9,501.5C1787.7,496.1 1788.5,484.6 1789.4,476.9C1790.3,469.2 1791.4,460.1 1792.5,455.4C1793.6,450.7 1794.6,450.0 1796.2,448.6C1797.8,447.2 1800.2,447.6 1802.3,447.1C1804.3,446.6 1806.5,445.9 1808.5,445.5C1810.5,445.1 1813.1,444.2 1814.6,444.6C1816.1,445.0 1816.8,444.4 1817.7,447.7C1818.6,451.0 1819.3,459.2 1820.2,464.6C1821.1,470.0 1822.0,477.0 1822.9,480.0C1823.8,483.0 1824.5,483.8 1825.4,482.5C1826.3,481.2 1827.3,475.0 1828.5,472.3C1829.7,469.6 1830.7,467.3 1832.5,466.2C1834.3,465.1 1837.0,465.7 1839.2,465.5C1841.4,465.3 1843.4,464.8 1845.4,465.2C1847.5,465.6 1849.7,467.2 1851.5,467.7C1853.3,468.2 1854.7,468.6 1856.2,468.3C1857.8,468.1 1859.0,466.7 1860.8,466.2C1862.6,465.7 1864.9,465.0 1866.9,465.2C1869.0,465.4 1871.0,466.6 1873.1,467.1C1875.1,467.6 1877.4,468.0 1879.2,468.3C1881.0,468.6 1882.4,468.3 1883.8,469.2C1885.2,470.1 1886.6,471.0 1887.8,473.8C1889.0,476.6 1889.9,482.7 1890.9,486.2C1891.9,489.7 1893.0,493.5 1894.0,494.8C1895.0,496.1 1896.0,495.1 1897.1,493.8C1898.2,492.5 1899.4,488.6 1900.8,486.8C1902.2,485.0 1904.0,483.2 1905.4,483.1C1906.8,483.0 1907.9,484.7 1909.4,486.2C1910.9,487.7 1912.7,490.0 1914.6,492.3C1916.5,494.6 1918.8,497.9 1920.8,500.0C1922.8,502.1 1924.9,503.7 1926.9,504.6C1929.0,505.5 1931.0,505.1 1933.1,505.5C1935.1,505.9 1937.2,506.4 1939.2,506.8C1941.2,507.2 1943.6,507.6 1945.4,507.7C1947.2,507.8 1948.5,508.9 1950.0,507.1C1951.5,505.3 1953.1,500.9 1954.6,496.9C1956.1,492.9 1957.9,486.7 1959.2,483.1C1960.5,479.5 1961.0,477.1 1962.3,475.4C1963.6,473.7 1965.1,473.4 1966.9,472.9C1968.7,472.4 1971.0,472.6 1973.1,472.3C1975.1,472.1 1977.4,472.7 1979.2,471.4C1981.0,470.1 1982.0,467.8 1983.8,464.6C1985.6,461.4 1987.9,457.2 1990.0,452.3C1992.1,447.4 1994.2,441.0 1996.2,435.4C1998.2,429.8 2000.2,423.1 2002.3,418.5C2004.3,413.9 2006.5,410.3 2008.5,407.7C2010.5,405.1 2012.8,403.7 2014.6,403.1C2016.4,402.5 2017.9,402.7 2019.2,404.0C2020.5,405.3 2021.3,408.1 2022.3,410.8C2023.3,413.5 2024.1,416.9 2025.4,420.0C2026.7,423.1 2028.5,426.9 2030.0,429.2C2031.5,431.5 2032.8,432.8 2034.6,433.8C2036.4,434.8 2038.8,435.2 2040.8,435.4C2042.8,435.6 2045.2,435.1 2046.9,434.8C2048.6,434.5 2049.6,436.0 2050.9,433.8C2052.2,431.6 2053.2,425.6 2054.6,421.5C2056.0,417.4 2057.7,412.3 2059.2,409.2C2060.7,406.1 2062.2,404.3 2063.8,403.1C2065.4,401.9 2067.1,401.8 2068.5,402.2C2069.9,402.6 2071.2,404.4 2072.5,405.5C2073.8,406.6 2074.8,408.0 2076.2,408.6C2077.6,409.2 2079.3,409.5 2080.8,409.2C2082.3,408.9 2083.6,407.3 2085.4,406.8C2087.2,406.3 2089.7,405.9 2091.5,406.2C2093.3,406.5 2094.5,404.5 2096.2,408.6C2097.9,412.7 2100.4,422.0 2101.7,430.8C2103.0,439.6 2102.9,452.8 2103.8,461.5C2104.7,470.2 2105.6,477.7 2106.9,483.1C2108.2,488.5 2109.8,491.2 2111.5,493.8C2113.2,496.4 2115.3,498.0 2117.1,498.5C2118.9,499.0 2120.8,498.9 2122.3,496.9C2123.8,494.8 2125.0,488.3 2126.3,486.2C2127.6,484.1 2128.9,483.0 2130.0,484.0C2131.1,485.0 2132.1,489.1 2133.1,492.3C2134.1,495.5 2134.9,500.4 2136.2,503.1C2137.5,505.8 2138.8,507.5 2140.8,508.6C2142.9,509.7 2145.9,509.6 2148.5,509.8C2151.1,510.0 2153.9,510.2 2156.2,509.8C2158.5,509.4 2160.6,509.0 2162.3,507.1C2164.0,505.2 2164.9,500.7 2166.3,498.5C2167.7,496.3 2168.7,494.6 2170.6,493.8C2172.5,493.0 2175.5,493.5 2177.7,493.8C2179.9,494.1 2182.1,494.0 2183.8,495.4C2185.5,496.8 2186.6,500.7 2187.8,502.2C2189.0,503.7 2189.8,504.8 2190.9,504.6C2192.0,504.4 2193.2,504.5 2194.6,500.9C2196.0,497.3 2197.7,489.2 2199.2,483.1C2200.7,477.1 2202.2,471.3 2203.8,464.6C2205.4,457.9 2206.9,450.3 2208.5,443.1C2210.1,435.9 2211.7,426.5 2213.1,421.5C2214.5,416.5 2215.7,414.6 2216.8,412.9C2217.9,411.2 2218.6,411.0 2219.8,411.4C2221.0,411.8 2222.5,413.7 2223.8,415.4C2225.1,417.1 2226.6,419.9 2227.8,421.5C2229.0,423.1 2229.8,425.4 2230.9,425.2C2232.0,424.9 2232.9,422.9 2234.6,420.0C2236.2,417.1 2238.8,411.4 2240.8,407.7C2242.9,403.9 2245.3,399.8 2246.9,397.5C2248.5,395.2 2249.5,394.3 2250.6,393.8C2251.7,393.3 2252.8,392.4 2253.7,394.5C2254.6,396.6 2255.3,400.9 2256.2,406.2C2257.1,411.5 2257.9,421.8 2259.2,426.2C2260.5,430.6 2261.8,430.9 2263.8,432.3C2265.9,433.7 2268.9,433.8 2271.5,434.8C2274.1,435.8 2277.4,436.9 2279.2,438.5C2281.0,440.1 2281.4,438.2 2282.3,444.6C2283.2,451.0 2283.3,447.4 2284.5,476.9C2285.7,506.4 2288.0,587.1 2289.2,621.5C2290.4,655.9 2290.8,668.7 2291.7,683.1C2292.6,697.5 2293.8,702.1 2294.8,707.7C2295.8,713.3 2296.4,715.0 2297.8,716.9C2299.2,718.8 2301.2,719.2 2303.1,719.4C2305.0,719.5 2307.1,718.8 2309.2,717.8C2311.2,716.8 2313.5,714.4 2315.4,713.2C2317.3,712.0 2319.0,711.1 2320.6,710.8C2322.2,710.5 2323.8,710.4 2325.2,711.4C2326.6,712.4 2327.5,714.9 2329.2,716.9C2330.9,718.9 2333.3,720.8 2335.4,723.1C2337.5,725.4 2339.3,727.7 2341.5,730.8C2343.7,733.9 2346.2,737.7 2348.3,741.5C2350.4,745.3 2352.1,750.2 2353.8,753.8C2355.5,757.4 2356.7,760.9 2358.5,763.1C2360.3,765.3 2362.3,766.1 2364.6,766.8C2366.9,767.5 2369.7,767.2 2372.3,767.1C2374.9,767.0 2377.9,767.1 2380.0,766.2C2382.1,765.3 2383.2,763.8 2384.6,761.5C2386.0,759.2 2387.2,754.8 2388.3,752.3C2389.4,749.8 2390.2,747.8 2391.4,746.8C2392.6,745.8 2394.0,746.1 2395.4,746.2C2396.8,746.4 2398.2,746.8 2400.0,747.7C2401.8,748.6 2403.9,750.4 2406.2,751.4C2408.5,752.4 2411.2,753.2 2413.8,753.8C2416.4,754.4 2419.2,755.0 2421.5,754.8C2423.8,754.5 2425.9,754.5 2427.7,752.3C2429.5,750.1 2430.8,745.6 2432.3,741.5C2433.8,737.4 2435.4,732.1 2436.9,727.7C2438.4,723.4 2439.9,718.7 2441.5,715.4C2443.1,712.1 2444.4,709.8 2446.2,707.7C2448.0,705.7 2450.2,704.4 2452.3,703.1C2454.4,701.8 2456.4,700.7 2458.5,700.0C2460.6,699.3 2462.8,698.9 2464.6,699.1C2466.4,699.4 2467.7,700.5 2469.2,701.5C2470.7,702.5 2472.0,704.3 2473.8,705.2C2475.6,706.1 2477.9,706.2 2480.0,707.1C2482.1,708.0 2484.1,709.2 2486.2,710.8C2488.2,712.4 2490.2,715.3 2492.3,716.9C2494.4,718.5 2496.2,719.8 2498.5,720.6C2500.8,721.4 2503.9,721.9 2506.2,721.5C2508.5,721.1 2510.2,719.8 2512.3,718.5C2514.4,717.2 2516.4,715.1 2518.5,713.8C2520.6,712.5 2522.9,711.0 2524.6,710.8C2526.3,710.5 2527.4,710.2 2528.6,712.3C2529.8,714.3 2530.7,717.7 2531.7,723.1C2532.7,728.5 2533.7,737.4 2534.8,744.6C2535.9,751.8 2537.3,760.9 2538.5,766.2C2539.7,771.5 2540.9,774.5 2542.2,776.3C2543.5,778.1 2544.9,778.1 2546.2,776.9C2547.5,775.7 2548.9,771.4 2550.2,769.2C2551.5,767.0 2552.7,764.6 2553.8,763.7C2554.9,762.8 2555.8,762.8 2556.9,764.0C2558.0,765.2 2559.3,769.2 2560.6,770.8C2561.9,772.4 2563.2,773.3 2564.6,773.8C2566.0,774.3 2567.7,774.0 2569.2,773.8C2570.7,773.5 2572.2,772.5 2573.8,772.3C2575.4,772.0 2576.9,771.7 2578.5,772.3C2580.1,772.9 2581.6,775.2 2583.1,776.0C2584.6,776.8 2585.9,776.9 2587.7,776.9C2589.5,776.9 2592.2,777.1 2593.8,776.3C2595.4,775.5 2596.5,775.5 2597.5,772.3C2598.5,769.1 2599.2,763.0 2600.0,756.9C2600.8,750.8 2601.6,740.5 2602.5,735.4C2603.4,730.3 2604.4,727.6 2605.5,726.2C2606.6,724.8 2607.8,726.1 2609.2,727.1C2610.6,728.1 2612.2,730.1 2613.8,732.3C2615.4,734.4 2617.1,737.2 2618.5,740.0C2619.9,742.8 2621.1,746.8 2622.2,749.2C2623.3,751.6 2624.0,753.8 2625.2,754.5C2626.4,755.2 2627.9,754.2 2629.2,753.2C2630.5,752.2 2631.9,749.6 2633.2,748.6C2634.5,747.6 2635.8,746.5 2636.9,747.1C2638.0,747.7 2638.9,750.1 2640.0,752.3C2641.1,754.4 2642.4,758.5 2643.7,760.0C2645.0,761.5 2646.3,761.8 2647.7,761.5C2649.1,761.2 2650.5,759.3 2652.3,758.5C2654.1,757.7 2656.4,756.9 2658.5,756.9C2660.6,756.9 2662.3,758.1 2664.6,758.5C2666.9,758.9 2669.7,759.2 2672.3,759.4C2674.9,759.5 2677.8,759.5 2680.0,759.4C2682.2,759.3 2684.4,761.4 2685.8,758.8C2687.2,756.2 2687.9,746.5 2688.3,744.0L2688.3,999L169.4,999Z" fill="url(#ga)"/>
<path d="M169.4,800.0C170.3,798.7 172.7,794.5 174.6,792.3C176.5,790.1 178.5,788.3 180.8,786.8C183.1,785.3 186.2,784.4 188.5,783.1C190.8,781.8 192.7,780.0 194.6,779.1C196.5,778.2 198.4,777.1 199.8,777.5C201.2,777.9 202.0,779.5 202.9,781.5C203.8,783.5 204.4,787.4 205.4,789.2C206.4,791.0 207.3,791.9 209.1,792.3C210.9,792.7 213.8,791.9 216.2,791.4C218.6,790.9 221.5,790.0 223.8,789.2C226.1,788.4 228.4,788.6 230.0,786.8C231.6,785.0 232.1,784.0 233.1,778.5C234.1,773.0 235.2,759.6 236.2,753.8C237.2,748.0 238.3,745.2 239.2,743.7C240.1,742.2 240.8,742.9 241.7,744.6C242.6,746.3 243.7,751.3 244.8,753.8C245.9,756.3 247.3,758.6 248.5,759.4C249.7,760.2 250.9,759.8 252.2,758.5C253.5,757.2 254.8,752.9 256.2,751.4C257.6,749.9 259.0,750.1 260.8,749.8C262.6,749.5 264.3,749.9 266.9,749.8C269.5,749.7 273.6,750.1 276.2,749.2C278.8,748.3 280.2,746.4 282.3,744.6C284.4,742.8 286.4,740.3 288.5,738.5C290.6,736.7 292.6,734.8 294.6,733.8C296.7,732.8 299.1,732.0 300.8,732.3C302.5,732.6 303.6,733.8 304.8,735.4C306.0,737.0 306.4,740.7 307.8,742.2C309.2,743.7 310.7,744.2 313.1,744.6C315.5,745.0 319.2,744.9 322.3,744.6C325.4,744.4 329.4,743.1 331.5,743.1C333.6,743.1 333.6,742.6 334.6,744.6C335.6,746.6 336.6,752.7 337.7,755.4C338.8,758.1 339.6,759.4 341.4,760.6C343.2,761.8 346.0,762.0 348.5,762.5C351.0,763.0 353.6,763.4 356.2,763.7C358.8,764.1 361.8,765.2 363.8,764.6C365.9,764.0 366.9,761.0 368.5,760.0C370.1,759.0 371.3,758.6 373.1,758.5C374.9,758.4 377.1,759.2 379.2,759.4C381.2,759.5 383.7,760.3 385.4,759.4C387.1,758.5 388.1,755.0 389.4,753.8C390.7,752.6 392.0,752.0 393.1,752.3C394.2,752.6 395.1,754.0 396.2,755.4C397.3,756.8 398.3,759.7 399.8,760.6C401.3,761.5 403.7,761.1 405.4,760.9C407.1,760.6 408.6,759.5 410.0,759.1C411.4,758.7 412.8,757.9 414.0,758.5C415.2,759.1 416.0,759.7 417.1,762.5C418.2,765.3 419.4,770.4 420.8,775.4C422.2,780.4 423.9,787.9 425.4,792.3C426.9,796.6 428.5,799.3 430.0,801.5C431.5,803.7 432.8,804.5 434.6,805.5C436.4,806.5 438.9,807.5 440.8,807.7C442.7,807.9 444.6,808.1 446.0,806.8C447.4,805.5 447.9,801.9 449.1,800.0C450.3,798.1 451.7,796.2 453.1,795.4C454.5,794.6 455.9,795.1 457.7,795.4C459.5,795.6 461.8,797.0 463.8,796.9C465.9,796.8 468.2,796.0 470.0,794.5C471.8,793.0 473.1,790.6 474.6,787.7C476.1,784.8 477.7,779.5 479.2,776.9C480.7,774.3 482.2,772.8 483.8,772.3C485.4,771.8 486.9,772.5 488.5,773.8C490.1,775.1 491.6,777.7 493.1,780.0C494.6,782.3 496.2,785.7 497.7,787.7C499.2,789.8 500.5,791.4 502.3,792.3C504.1,793.2 506.2,792.9 508.5,792.9C510.8,792.9 514.2,791.9 516.2,792.3C518.2,792.7 519.4,794.5 520.8,795.4C522.2,796.3 523.2,797.8 524.5,797.8C525.8,797.8 527.1,796.5 528.5,795.4C529.9,794.3 531.3,792.2 533.1,791.4C534.9,790.6 536.8,790.8 539.2,790.8C541.6,790.8 545.0,791.6 547.7,791.5C550.4,791.4 552.6,790.5 555.4,790.0C558.2,789.5 561.8,788.9 564.6,788.5C567.4,788.1 570.2,788.3 572.3,787.5C574.3,786.7 575.4,787.5 576.9,783.8C578.4,780.1 580.0,771.0 581.5,765.4C583.0,759.8 584.7,754.1 586.2,750.0C587.8,745.9 589.3,742.8 590.8,740.8C592.3,738.8 593.6,738.4 595.4,738.3C597.2,738.2 599.2,739.8 601.5,740.2C603.8,740.6 606.4,740.9 609.2,740.8C612.0,740.7 615.4,740.1 618.5,739.8C621.6,739.5 625.2,739.8 627.7,739.2C630.2,738.6 631.8,737.4 633.8,736.2C635.8,735.0 637.9,733.2 640.0,732.2C642.1,731.2 644.4,730.0 646.2,730.0C648.0,730.0 649.3,730.7 650.8,732.2C652.3,733.7 653.9,736.8 655.4,739.2C656.9,741.7 658.5,745.0 660.0,746.9C661.5,748.8 662.8,750.1 664.6,750.6C666.4,751.1 668.5,750.2 670.8,750.0C673.1,749.8 675.9,749.1 678.5,749.1C681.1,749.1 683.9,749.2 686.2,750.0C688.5,750.8 690.2,752.9 692.3,754.0C694.3,755.1 695.9,756.3 698.5,756.8C701.1,757.3 704.4,756.9 707.7,757.1C711.0,757.3 715.2,758.1 718.5,758.0C721.8,757.9 725.2,756.5 727.7,756.5C730.2,756.5 731.8,757.4 733.8,757.7C735.8,758.1 738.5,759.9 740.0,758.6C741.5,757.3 742.1,755.0 743.1,750.0C744.1,745.0 745.2,734.6 746.2,728.5C747.2,722.4 747.9,717.5 749.2,713.1C750.5,708.7 752.2,705.6 753.8,702.3C755.3,699.0 757.0,696.7 758.5,693.1C760.0,689.5 761.7,683.9 763.1,680.8C764.5,677.7 765.8,675.4 767.1,674.6C768.4,673.8 769.7,674.4 770.8,676.2C771.9,678.0 772.7,682.6 773.8,685.4C774.9,688.2 776.4,692.1 777.5,693.1C778.6,694.1 779.7,694.3 780.6,691.5C781.5,688.7 782.2,682.9 783.1,676.2C784.0,669.5 784.9,658.2 786.2,651.5C787.5,644.8 789.0,639.5 790.8,636.2C792.6,632.9 794.8,632.3 796.9,631.5C799.0,630.7 801.2,630.7 803.1,631.5C805.0,632.3 806.8,633.4 808.3,636.2C809.8,639.0 811.1,643.9 812.3,648.5C813.5,653.1 814.1,660.6 815.4,663.8C816.7,667.0 818.0,666.7 820.0,667.5C822.0,668.3 825.7,667.6 827.7,668.5C829.8,669.4 831.0,671.1 832.3,673.1C833.6,675.1 834.1,678.9 835.4,680.8C836.7,682.7 838.5,684.5 840.0,684.5C841.5,684.5 843.1,681.9 844.6,680.8C846.1,679.7 847.7,678.0 849.2,677.7C850.7,677.4 852.2,677.7 853.8,679.2C855.3,680.7 856.7,684.6 858.5,686.9C860.3,689.2 862.6,692.0 864.6,693.1C866.6,694.2 869.0,694.2 870.8,693.7C872.6,693.2 873.9,691.9 875.4,690.0C876.9,688.1 878.2,685.1 880.0,682.3C881.8,679.5 884.4,675.1 886.2,673.1C888.0,671.1 889.0,670.1 890.8,670.0C892.6,669.9 894.8,671.0 896.9,672.5C899.0,674.0 901.0,677.1 903.1,679.2C905.2,681.4 906.9,684.6 909.2,685.4C911.5,686.2 914.3,684.3 916.9,683.8C919.5,683.3 922.0,682.7 924.6,682.3C927.2,681.9 929.6,682.6 932.3,681.4C935.0,680.2 938.6,676.0 940.8,675.2C943.0,674.4 943.6,675.6 945.4,676.8C947.2,678.0 949.5,680.1 951.5,682.3C953.5,684.5 955.9,687.2 957.7,690.0C959.5,692.8 960.8,695.4 962.3,699.2C963.8,703.1 965.1,708.5 966.9,713.1C968.7,717.7 971.0,723.7 973.1,726.9C975.2,730.1 977.2,730.5 979.2,732.2C981.2,733.9 983.4,735.9 985.4,737.1C987.4,738.3 989.2,739.2 991.5,739.2C993.8,739.2 996.6,738.1 999.2,737.1C1001.8,736.1 1004.7,733.9 1006.9,733.1C1009.1,732.3 1010.7,732.0 1012.5,732.5C1014.3,733.0 1015.8,734.3 1017.7,736.2C1019.6,738.1 1021.9,741.6 1023.8,743.8C1025.7,746.0 1027.0,748.3 1029.1,749.4C1031.2,750.5 1033.8,750.4 1036.2,750.6C1038.7,750.8 1041.5,750.3 1043.8,750.6C1046.1,750.9 1048.2,751.8 1050.0,752.2C1051.8,752.6 1053.3,755.0 1054.6,753.1C1055.9,751.2 1056.5,745.4 1057.7,740.8C1058.9,736.2 1060.2,728.7 1061.7,725.4C1063.2,722.1 1065.0,721.8 1066.9,720.8C1068.8,719.8 1071.0,720.2 1073.1,719.2C1075.1,718.2 1077.2,715.5 1079.2,714.6C1081.2,713.7 1083.6,713.2 1085.4,714.0C1087.2,714.8 1088.0,717.1 1090.0,719.2C1092.0,721.4 1095.1,724.6 1097.7,726.9C1100.3,729.2 1102.8,731.1 1105.4,733.1C1108.0,735.1 1110.5,736.8 1113.1,738.6C1115.7,740.4 1118.2,742.8 1120.8,743.8C1123.4,744.8 1125.9,744.6 1128.5,744.5C1131.1,744.4 1134.3,744.9 1136.2,743.2C1138.1,741.6 1138.5,737.0 1139.8,734.6C1141.1,732.2 1142.6,729.6 1143.8,729.1C1145.0,728.6 1145.9,729.8 1146.9,731.5C1147.9,733.2 1148.8,737.5 1150.0,739.2C1151.2,740.9 1152.5,741.8 1154.0,741.7C1155.5,741.6 1157.5,739.6 1159.2,738.6C1161.0,737.6 1162.7,735.6 1164.5,735.5C1166.3,735.4 1168.0,736.8 1170.0,737.7C1172.0,738.6 1174.2,740.0 1176.2,740.8C1178.2,741.6 1180.2,741.3 1182.3,742.3C1184.3,743.3 1186.5,744.8 1188.5,746.9C1190.5,749.0 1192.5,752.1 1194.6,754.6C1196.6,757.1 1198.9,760.3 1200.8,761.7C1202.7,763.1 1204.5,763.9 1206.0,763.2C1207.5,762.5 1208.6,759.7 1210.0,757.7C1211.4,755.8 1212.8,752.9 1214.6,751.5C1216.4,750.1 1218.8,749.9 1220.8,749.4C1222.8,748.9 1224.9,749.7 1226.9,748.5C1229.0,747.3 1231.0,744.3 1233.1,742.3C1235.1,740.2 1237.4,737.7 1239.2,736.2C1241.0,734.7 1241.8,733.7 1243.8,733.1C1245.8,732.5 1249.2,732.8 1251.5,732.5C1253.8,732.2 1255.9,732.7 1257.7,731.5C1259.5,730.3 1260.8,727.0 1262.3,725.4C1263.8,723.8 1265.4,722.5 1266.9,721.7C1268.4,720.9 1269.7,721.3 1271.5,720.8C1273.3,720.3 1275.9,720.1 1277.7,718.6C1279.5,717.1 1280.9,713.4 1282.3,711.5C1283.7,709.6 1285.0,707.5 1286.3,707.5C1287.6,707.5 1288.7,709.3 1290.0,711.5C1291.3,713.7 1292.7,719.1 1294.0,720.8C1295.3,722.5 1296.4,723.0 1297.7,721.7C1299.0,720.4 1300.2,716.6 1301.7,713.1C1303.2,709.6 1305.0,704.1 1306.9,700.8C1308.8,697.5 1311.4,694.5 1313.1,693.1C1314.8,691.7 1315.8,691.7 1317.1,692.2C1318.4,692.7 1319.6,694.0 1320.8,696.2C1322.0,698.4 1323.3,703.9 1324.5,705.4C1325.7,706.9 1326.2,705.5 1327.7,705.5C1329.2,705.5 1331.8,706.2 1333.8,705.5C1335.8,704.8 1338.2,703.7 1340.0,701.5C1341.8,699.3 1342.8,695.9 1344.6,692.3C1346.4,688.7 1348.8,683.4 1350.8,680.0C1352.8,676.6 1355.1,673.5 1356.9,671.7C1358.7,669.9 1360.0,669.9 1361.5,669.2C1363.0,668.5 1364.7,669.5 1366.2,667.7C1367.8,665.9 1369.3,663.9 1370.8,658.5C1372.3,653.1 1373.9,641.6 1375.4,635.4C1376.9,629.2 1378.5,625.6 1380.0,621.5C1381.5,617.4 1383.2,615.1 1384.6,610.8C1386.0,606.4 1387.2,603.6 1388.3,595.4C1389.4,587.2 1390.5,571.8 1391.4,561.5C1392.3,551.2 1392.9,539.7 1393.8,533.8C1394.7,527.9 1395.8,528.4 1396.9,526.2C1398.0,524.0 1399.0,521.6 1400.6,520.6C1402.1,519.6 1404.5,520.6 1406.2,520.0C1407.9,519.4 1409.4,518.9 1410.8,516.9C1412.2,514.9 1413.4,511.8 1414.8,507.7C1416.2,503.6 1417.7,498.4 1419.1,492.3C1420.5,486.2 1421.9,476.2 1423.1,470.8C1424.3,465.4 1424.9,461.6 1426.2,460.0C1427.5,458.4 1429.3,460.0 1430.8,461.5C1432.3,463.0 1434.0,467.4 1435.4,469.2C1436.8,471.0 1438.1,472.8 1439.4,472.3C1440.7,471.8 1442.0,471.1 1443.1,466.2C1444.2,461.3 1445.2,454.7 1446.2,443.1C1447.2,431.6 1448.2,414.8 1449.2,396.9C1450.2,378.9 1451.3,351.0 1452.3,335.4C1453.3,319.8 1454.3,309.2 1455.4,303.1C1456.5,297.0 1457.8,298.8 1459.1,298.5C1460.4,298.2 1461.4,300.4 1463.1,301.5C1464.8,302.6 1467.2,304.3 1469.2,305.2C1471.2,306.1 1473.5,306.6 1475.4,306.8C1477.3,307.0 1479.2,307.6 1480.6,306.2C1482.0,304.8 1482.7,301.8 1483.7,298.5C1484.7,295.2 1485.6,289.8 1486.8,286.2C1488.0,282.6 1489.4,279.3 1490.8,276.9C1492.2,274.5 1493.9,272.8 1495.4,271.7C1496.9,270.6 1498.5,270.1 1500.0,270.2C1501.5,270.3 1503.1,270.7 1504.6,272.3C1506.1,273.9 1507.8,276.1 1509.2,280.0C1510.6,283.9 1512.0,287.2 1513.2,295.4C1514.4,303.6 1515.3,318.4 1516.3,329.2C1517.3,340.0 1518.3,351.8 1519.4,360.0C1520.5,368.2 1521.5,373.1 1523.1,378.5C1524.7,383.9 1527.2,388.7 1529.2,392.3C1531.2,395.9 1533.4,398.4 1535.4,400.0C1537.5,401.6 1539.5,402.4 1541.5,402.2C1543.5,401.9 1545.8,400.7 1547.7,398.5C1549.7,396.3 1551.7,392.3 1553.2,389.2C1554.7,386.1 1555.7,382.3 1556.9,380.0C1558.1,377.7 1559.5,375.6 1560.6,375.4C1561.7,375.1 1562.5,375.9 1563.7,378.5C1564.9,381.1 1566.3,386.2 1567.7,390.8C1569.1,395.4 1570.8,401.3 1572.3,406.2C1573.8,411.1 1575.4,416.2 1576.9,420.0C1578.4,423.8 1579.7,426.6 1581.5,429.2C1583.3,431.8 1585.7,433.1 1587.7,435.4C1589.8,437.7 1591.8,439.8 1593.8,443.1C1595.8,446.4 1597.9,450.8 1600.0,455.4C1602.1,460.0 1604.4,465.4 1606.2,470.8C1608.0,476.2 1609.4,481.6 1610.8,487.7C1612.2,493.8 1613.6,501.8 1614.8,507.7C1616.0,513.6 1616.8,518.8 1617.8,523.1C1618.8,527.5 1619.8,532.5 1620.9,533.8C1622.0,535.1 1623.2,532.8 1624.6,530.8C1626.0,528.8 1627.7,524.8 1629.2,521.5C1630.7,518.2 1632.2,514.4 1633.8,510.8C1635.3,507.2 1637.2,502.4 1638.5,500.0C1639.8,497.6 1640.5,496.1 1641.5,496.3C1642.5,496.6 1643.6,498.1 1644.6,501.5C1645.6,504.9 1646.5,513.4 1647.7,516.9C1648.9,520.4 1650.2,521.6 1651.7,522.5C1653.2,523.4 1655.3,522.9 1656.9,522.5C1658.5,522.1 1660.2,523.0 1661.5,520.0C1662.8,517.0 1663.6,514.4 1664.6,504.6C1665.6,494.9 1666.8,472.8 1667.7,461.5C1668.6,450.2 1669.4,441.7 1670.2,436.9C1671.0,432.1 1671.5,432.4 1672.3,432.9C1673.1,433.4 1673.9,435.7 1674.8,440.0C1675.7,444.3 1676.5,453.4 1677.5,458.5C1678.5,463.6 1679.7,468.2 1680.6,470.8C1681.5,473.4 1682.2,474.3 1683.1,473.8C1684.0,473.3 1684.9,471.8 1686.2,467.7C1687.5,463.6 1689.3,454.8 1690.8,449.2C1692.3,443.6 1693.9,438.7 1695.4,433.8C1696.9,428.9 1698.7,422.8 1700.0,420.0C1701.3,417.2 1702.2,416.4 1703.1,416.9C1704.0,417.4 1704.7,418.2 1705.5,423.1C1706.3,428.0 1706.9,439.5 1707.7,446.2C1708.5,452.9 1709.2,459.6 1710.2,463.1C1711.2,466.6 1712.8,466.5 1713.8,467.1C1714.8,467.7 1714.5,467.1 1716.2,466.8C1717.9,466.5 1721.5,466.4 1723.8,465.5C1726.1,464.6 1727.9,463.4 1730.0,461.5C1732.1,459.6 1734.2,455.9 1736.2,453.8C1738.2,451.8 1740.5,449.8 1742.3,449.2C1744.1,448.6 1745.4,448.9 1746.9,450.2C1748.4,451.5 1750.1,453.0 1751.5,456.9C1752.9,460.8 1754.3,467.9 1755.5,473.8C1756.7,479.7 1757.5,487.9 1758.6,492.3C1759.7,496.7 1760.9,499.2 1762.3,500.0C1763.7,500.8 1765.5,498.3 1766.9,496.9C1768.3,495.5 1769.6,492.7 1770.9,491.7C1772.2,490.7 1773.4,489.9 1774.6,490.8C1775.8,491.7 1777.1,494.3 1778.3,496.9C1779.5,499.5 1780.6,504.1 1781.7,506.2C1782.8,508.2 1783.9,510.0 1784.8,509.2C1785.7,508.4 1786.1,506.9 1786.9,501.5C1787.7,496.1 1788.5,484.6 1789.4,476.9C1790.3,469.2 1791.4,460.1 1792.5,455.4C1793.6,450.7 1794.6,450.0 1796.2,448.6C1797.8,447.2 1800.2,447.6 1802.3,447.1C1804.3,446.6 1806.5,445.9 1808.5,445.5C1810.5,445.1 1813.1,444.2 1814.6,444.6C1816.1,445.0 1816.8,444.4 1817.7,447.7C1818.6,451.0 1819.3,459.2 1820.2,464.6C1821.1,470.0 1822.0,477.0 1822.9,480.0C1823.8,483.0 1824.5,483.8 1825.4,482.5C1826.3,481.2 1827.3,475.0 1828.5,472.3C1829.7,469.6 1830.7,467.3 1832.5,466.2C1834.3,465.1 1837.0,465.7 1839.2,465.5C1841.4,465.3 1843.4,464.8 1845.4,465.2C1847.5,465.6 1849.7,467.2 1851.5,467.7C1853.3,468.2 1854.7,468.6 1856.2,468.3C1857.8,468.1 1859.0,466.7 1860.8,466.2C1862.6,465.7 1864.9,465.0 1866.9,465.2C1869.0,465.4 1871.0,466.6 1873.1,467.1C1875.1,467.6 1877.4,468.0 1879.2,468.3C1881.0,468.6 1882.4,468.3 1883.8,469.2C1885.2,470.1 1886.6,471.0 1887.8,473.8C1889.0,476.6 1889.9,482.7 1890.9,486.2C1891.9,489.7 1893.0,493.5 1894.0,494.8C1895.0,496.1 1896.0,495.1 1897.1,493.8C1898.2,492.5 1899.4,488.6 1900.8,486.8C1902.2,485.0 1904.0,483.2 1905.4,483.1C1906.8,483.0 1907.9,484.7 1909.4,486.2C1910.9,487.7 1912.7,490.0 1914.6,492.3C1916.5,494.6 1918.8,497.9 1920.8,500.0C1922.8,502.1 1924.9,503.7 1926.9,504.6C1929.0,505.5 1931.0,505.1 1933.1,505.5C1935.1,505.9 1937.2,506.4 1939.2,506.8C1941.2,507.2 1943.6,507.6 1945.4,507.7C1947.2,507.8 1948.5,508.9 1950.0,507.1C1951.5,505.3 1953.1,500.9 1954.6,496.9C1956.1,492.9 1957.9,486.7 1959.2,483.1C1960.5,479.5 1961.0,477.1 1962.3,475.4C1963.6,473.7 1965.1,473.4 1966.9,472.9C1968.7,472.4 1971.0,472.6 1973.1,472.3C1975.1,472.1 1977.4,472.7 1979.2,471.4C1981.0,470.1 1982.0,467.8 1983.8,464.6C1985.6,461.4 1987.9,457.2 1990.0,452.3C1992.1,447.4 1994.2,441.0 1996.2,435.4C1998.2,429.8 2000.2,423.1 2002.3,418.5C2004.3,413.9 2006.5,410.3 2008.5,407.7C2010.5,405.1 2012.8,403.7 2014.6,403.1C2016.4,402.5 2017.9,402.7 2019.2,404.0C2020.5,405.3 2021.3,408.1 2022.3,410.8C2023.3,413.5 2024.1,416.9 2025.4,420.0C2026.7,423.1 2028.5,426.9 2030.0,429.2C2031.5,431.5 2032.8,432.8 2034.6,433.8C2036.4,434.8 2038.8,435.2 2040.8,435.4C2042.8,435.6 2045.2,435.1 2046.9,434.8C2048.6,434.5 2049.6,436.0 2050.9,433.8C2052.2,431.6 2053.2,425.6 2054.6,421.5C2056.0,417.4 2057.7,412.3 2059.2,409.2C2060.7,406.1 2062.2,404.3 2063.8,403.1C2065.4,401.9 2067.1,401.8 2068.5,402.2C2069.9,402.6 2071.2,404.4 2072.5,405.5C2073.8,406.6 2074.8,408.0 2076.2,408.6C2077.6,409.2 2079.3,409.5 2080.8,409.2C2082.3,408.9 2083.6,407.3 2085.4,406.8C2087.2,406.3 2089.7,405.9 2091.5,406.2C2093.3,406.5 2094.5,404.5 2096.2,408.6C2097.9,412.7 2100.4,422.0 2101.7,430.8C2103.0,439.6 2102.9,452.8 2103.8,461.5C2104.7,470.2 2105.6,477.7 2106.9,483.1C2108.2,488.5 2109.8,491.2 2111.5,493.8C2113.2,496.4 2115.3,498.0 2117.1,498.5C2118.9,499.0 2120.8,498.9 2122.3,496.9C2123.8,494.8 2125.0,488.3 2126.3,486.2C2127.6,484.1 2128.9,483.0 2130.0,484.0C2131.1,485.0 2132.1,489.1 2133.1,492.3C2134.1,495.5 2134.9,500.4 2136.2,503.1C2137.5,505.8 2138.8,507.5 2140.8,508.6C2142.9,509.7 2145.9,509.6 2148.5,509.8C2151.1,510.0 2153.9,510.2 2156.2,509.8C2158.5,509.4 2160.6,509.0 2162.3,507.1C2164.0,505.2 2164.9,500.7 2166.3,498.5C2167.7,496.3 2168.7,494.6 2170.6,493.8C2172.5,493.0 2175.5,493.5 2177.7,493.8C2179.9,494.1 2182.1,494.0 2183.8,495.4C2185.5,496.8 2186.6,500.7 2187.8,502.2C2189.0,503.7 2189.8,504.8 2190.9,504.6C2192.0,504.4 2193.2,504.5 2194.6,500.9C2196.0,497.3 2197.7,489.2 2199.2,483.1C2200.7,477.1 2202.2,471.3 2203.8,464.6C2205.4,457.9 2206.9,450.3 2208.5,443.1C2210.1,435.9 2211.7,426.5 2213.1,421.5C2214.5,416.5 2215.7,414.6 2216.8,412.9C2217.9,411.2 2218.6,411.0 2219.8,411.4C2221.0,411.8 2222.5,413.7 2223.8,415.4C2225.1,417.1 2226.6,419.9 2227.8,421.5C2229.0,423.1 2229.8,425.4 2230.9,425.2C2232.0,424.9 2232.9,422.9 2234.6,420.0C2236.2,417.1 2238.8,411.4 2240.8,407.7C2242.9,403.9 2245.3,399.8 2246.9,397.5C2248.5,395.2 2249.5,394.3 2250.6,393.8C2251.7,393.3 2252.8,392.4 2253.7,394.5C2254.6,396.6 2255.3,400.9 2256.2,406.2C2257.1,411.5 2257.9,421.8 2259.2,426.2C2260.5,430.6 2261.8,430.9 2263.8,432.3C2265.9,433.7 2268.9,433.8 2271.5,434.8C2274.1,435.8 2277.4,436.9 2279.2,438.5C2281.0,440.1 2281.4,438.2 2282.3,444.6C2283.2,451.0 2283.3,447.4 2284.5,476.9C2285.7,506.4 2288.0,587.1 2289.2,621.5C2290.4,655.9 2290.8,668.7 2291.7,683.1C2292.6,697.5 2293.8,702.1 2294.8,707.7C2295.8,713.3 2296.4,715.0 2297.8,716.9C2299.2,718.8 2301.2,719.2 2303.1,719.4C2305.0,719.5 2307.1,718.8 2309.2,717.8C2311.2,716.8 2313.5,714.4 2315.4,713.2C2317.3,712.0 2319.0,711.1 2320.6,710.8C2322.2,710.5 2323.8,710.4 2325.2,711.4C2326.6,712.4 2327.5,714.9 2329.2,716.9C2330.9,718.9 2333.3,720.8 2335.4,723.1C2337.5,725.4 2339.3,727.7 2341.5,730.8C2343.7,733.9 2346.2,737.7 2348.3,741.5C2350.4,745.3 2352.1,750.2 2353.8,753.8C2355.5,757.4 2356.7,760.9 2358.5,763.1C2360.3,765.3 2362.3,766.1 2364.6,766.8C2366.9,767.5 2369.7,767.2 2372.3,767.1C2374.9,767.0 2377.9,767.1 2380.0,766.2C2382.1,765.3 2383.2,763.8 2384.6,761.5C2386.0,759.2 2387.2,754.8 2388.3,752.3C2389.4,749.8 2390.2,747.8 2391.4,746.8C2392.6,745.8 2394.0,746.1 2395.4,746.2C2396.8,746.4 2398.2,746.8 2400.0,747.7C2401.8,748.6 2403.9,750.4 2406.2,751.4C2408.5,752.4 2411.2,753.2 2413.8,753.8C2416.4,754.4 2419.2,755.0 2421.5,754.8C2423.8,754.5 2425.9,754.5 2427.7,752.3C2429.5,750.1 2430.8,745.6 2432.3,741.5C2433.8,737.4 2435.4,732.1 2436.9,727.7C2438.4,723.4 2439.9,718.7 2441.5,715.4C2443.1,712.1 2444.4,709.8 2446.2,707.7C2448.0,705.7 2450.2,704.4 2452.3,703.1C2454.4,701.8 2456.4,700.7 2458.5,700.0C2460.6,699.3 2462.8,698.9 2464.6,699.1C2466.4,699.4 2467.7,700.5 2469.2,701.5C2470.7,702.5 2472.0,704.3 2473.8,705.2C2475.6,706.1 2477.9,706.2 2480.0,707.1C2482.1,708.0 2484.1,709.2 2486.2,710.8C2488.2,712.4 2490.2,715.3 2492.3,716.9C2494.4,718.5 2496.2,719.8 2498.5,720.6C2500.8,721.4 2503.9,721.9 2506.2,721.5C2508.5,721.1 2510.2,719.8 2512.3,718.5C2514.4,717.2 2516.4,715.1 2518.5,713.8C2520.6,712.5 2522.9,711.0 2524.6,710.8C2526.3,710.5 2527.4,710.2 2528.6,712.3C2529.8,714.3 2530.7,717.7 2531.7,723.1C2532.7,728.5 2533.7,737.4 2534.8,744.6C2535.9,751.8 2537.3,760.9 2538.5,766.2C2539.7,771.5 2540.9,774.5 2542.2,776.3C2543.5,778.1 2544.9,778.1 2546.2,776.9C2547.5,775.7 2548.9,771.4 2550.2,769.2C2551.5,767.0 2552.7,764.6 2553.8,763.7C2554.9,762.8 2555.8,762.8 2556.9,764.0C2558.0,765.2 2559.3,769.2 2560.6,770.8C2561.9,772.4 2563.2,773.3 2564.6,773.8C2566.0,774.3 2567.7,774.0 2569.2,773.8C2570.7,773.5 2572.2,772.5 2573.8,772.3C2575.4,772.0 2576.9,771.7 2578.5,772.3C2580.1,772.9 2581.6,775.2 2583.1,776.0C2584.6,776.8 2585.9,776.9 2587.7,776.9C2589.5,776.9 2592.2,777.1 2593.8,776.3C2595.4,775.5 2596.5,775.5 2597.5,772.3C2598.5,769.1 2599.2,763.0 2600.0,756.9C2600.8,750.8 2601.6,740.5 2602.5,735.4C2603.4,730.3 2604.4,727.6 2605.5,726.2C2606.6,724.8 2607.8,726.1 2609.2,727.1C2610.6,728.1 2612.2,730.1 2613.8,732.3C2615.4,734.4 2617.1,737.2 2618.5,740.0C2619.9,742.8 2621.1,746.8 2622.2,749.2C2623.3,751.6 2624.0,753.8 2625.2,754.5C2626.4,755.2 2627.9,754.2 2629.2,753.2C2630.5,752.2 2631.9,749.6 2633.2,748.6C2634.5,747.6 2635.8,746.5 2636.9,747.1C2638.0,747.7 2638.9,750.1 2640.0,752.3C2641.1,754.4 2642.4,758.5 2643.7,760.0C2645.0,761.5 2646.3,761.8 2647.7,761.5C2649.1,761.2 2650.5,759.3 2652.3,758.5C2654.1,757.7 2656.4,756.9 2658.5,756.9C2660.6,756.9 2662.3,758.1 2664.6,758.5C2666.9,758.9 2669.7,759.2 2672.3,759.4C2674.9,759.5 2677.8,759.5 2680.0,759.4C2682.2,759.3 2684.4,761.4 2685.8,758.8C2687.2,756.2 2687.9,746.5 2688.3,744.0" fill="none" stroke="#5cc28a" stroke-width="1.9" stroke-linejoin="round"/>
<line x1="164.8" x2="2681" y1="749" y2="749" stroke="#e4e4e4" stroke-width="2" stroke-dasharray="7.7 4.35"/>
<path d="M169.4,747.7C170.8,747.2 175.3,747.7 177.7,744.6C180.1,741.5 181.8,736.4 183.8,729.2C185.9,722.0 187.9,708.2 190.0,701.5C192.1,694.8 194.4,691.7 196.2,689.2C198.0,686.8 199.5,686.3 200.8,686.8C202.1,687.3 202.8,687.8 203.8,692.3C204.8,696.8 205.9,708.4 206.9,713.8C207.9,719.2 209.0,723.3 210.0,724.6C211.0,725.9 212.1,723.5 213.1,721.5C214.1,719.5 215.0,714.7 216.2,712.3C217.4,709.9 218.9,707.1 220.2,707.1C221.5,707.1 222.6,709.6 223.8,712.3C225.0,715.0 226.4,720.4 227.5,723.1C228.6,725.8 229.6,728.8 230.6,728.3C231.6,727.8 232.8,728.6 233.7,720.0C234.6,711.4 235.4,691.8 236.2,676.9C237.0,662.0 237.6,639.9 238.3,630.8C239.0,621.7 239.7,623.0 240.5,622.5C241.3,622.0 241.8,622.7 242.9,627.7C244.0,632.7 245.5,644.9 246.9,652.3C248.3,659.7 249.9,667.2 251.5,672.3C253.1,677.4 254.4,680.0 256.2,683.1C258.0,686.2 260.2,688.9 262.3,690.8C264.4,692.7 266.6,694.2 268.5,694.5C270.4,694.8 272.4,694.7 273.7,692.3C275.0,689.9 275.0,684.1 276.2,680.0C277.4,675.9 279.0,670.5 280.8,667.7C282.6,664.9 284.6,664.0 286.9,663.1C289.2,662.2 292.0,662.6 294.6,662.5C297.2,662.4 300.4,661.6 302.3,662.5C304.2,663.4 305.1,663.8 306.0,667.7C306.9,671.7 306.7,680.8 307.5,686.2C308.3,691.6 309.4,696.8 310.6,700.0C311.8,703.2 312.9,704.2 314.6,705.2C316.3,706.2 319.0,704.5 320.8,706.2C322.6,707.9 324.1,710.5 325.4,715.4C326.7,720.3 327.5,728.0 328.5,735.4C329.5,742.8 330.5,752.8 331.5,760.0C332.5,767.2 333.5,773.9 334.6,778.5C335.7,783.1 336.8,785.8 338.3,787.7C339.8,789.6 341.6,789.5 343.8,789.8C346.0,790.0 349.6,788.5 351.5,789.2C353.4,789.9 354.3,791.5 355.5,793.8C356.7,796.1 357.5,800.8 358.6,803.1C359.7,805.4 361.0,808.0 362.3,807.7C363.6,807.4 365.0,804.3 366.3,801.5C367.6,798.7 368.9,793.2 370.0,790.8C371.1,788.4 372.2,786.6 373.1,787.1C374.0,787.6 374.7,789.1 375.5,793.8C376.3,798.5 376.9,809.2 377.7,815.4C378.5,821.6 379.3,827.3 380.2,830.8C381.1,834.3 381.8,836.3 382.9,836.3C384.0,836.3 385.2,834.8 386.9,830.8C388.6,826.8 391.1,817.9 393.1,812.3C395.2,806.6 397.1,801.0 399.2,796.9C401.2,792.8 403.3,789.8 405.4,787.7C407.4,785.7 409.9,785.0 411.5,784.6C413.1,784.2 414.2,783.5 415.2,785.5C416.2,787.5 417.0,788.9 417.7,796.9C418.4,804.9 418.8,822.0 419.5,833.8C420.2,845.6 421.2,860.2 422.0,867.7C422.8,875.2 423.4,876.2 424.5,878.5C425.6,880.8 427.1,880.5 428.5,881.5C429.9,882.5 431.8,882.3 433.1,884.6C434.4,886.9 435.1,890.0 436.2,895.4C437.3,900.8 438.7,911.6 439.8,916.9C440.9,922.2 441.9,926.1 442.9,927.1C443.9,928.1 445.2,928.9 446.0,923.1C446.8,917.3 447.2,905.1 447.8,892.3C448.4,879.5 448.8,857.2 449.4,846.2C450.0,835.2 450.8,830.3 451.5,826.2C452.2,822.1 452.9,820.7 453.7,821.5C454.5,822.3 455.3,826.2 456.2,830.8C457.1,835.4 458.0,844.6 459.2,849.2C460.4,853.8 461.9,857.5 463.2,858.5C464.5,859.5 465.5,858.5 466.9,855.4C468.3,852.3 469.9,846.7 471.5,840.0C473.1,833.3 474.9,824.1 476.2,815.4C477.5,806.7 478.2,793.7 479.2,787.7C480.2,781.7 481.3,780.4 482.3,779.4C483.3,778.4 484.4,779.9 485.4,781.5C486.4,783.1 487.2,786.8 488.5,789.2C489.8,791.6 491.3,795.2 493.1,796.0C494.9,796.8 497.1,794.4 499.2,793.8C501.2,793.2 503.8,791.8 505.4,792.3C506.9,792.8 507.5,794.6 508.5,796.9C509.5,799.2 510.2,804.1 511.5,806.2C512.8,808.4 514.2,809.0 516.2,809.8C518.2,810.6 521.2,809.9 523.8,810.8C526.3,811.7 528.7,814.0 531.5,815.4C534.3,816.8 538.3,818.6 540.8,819.1C543.2,819.6 544.5,819.6 546.2,818.3C547.9,817.0 549.3,813.2 550.8,811.5C552.3,809.8 553.9,807.9 555.4,807.8C556.9,807.6 558.2,810.0 560.0,810.6C561.8,811.2 564.2,811.5 566.2,811.5C568.2,811.5 570.6,811.6 572.3,810.6C574.0,809.6 575.1,809.4 576.3,805.4C577.5,801.4 578.5,793.6 579.4,786.9C580.3,780.2 580.5,770.4 581.5,765.4C582.5,760.4 583.7,758.8 585.5,757.1C587.3,755.5 589.9,755.6 592.3,755.5C594.7,755.4 597.7,755.4 600.0,756.2C602.3,757.0 604.2,758.4 606.2,760.2C608.2,762.0 610.2,765.4 612.3,766.9C614.3,768.4 616.2,769.2 618.5,769.4C620.8,769.5 624.2,769.2 626.2,767.8C628.2,766.4 629.3,764.8 630.8,760.8C632.3,756.8 633.9,748.9 635.4,743.8C636.9,738.7 638.5,733.2 640.0,730.0C641.5,726.8 643.2,725.4 644.6,724.5C646.0,723.6 647.0,723.3 648.3,724.5C649.6,725.7 650.9,727.2 652.3,731.5C653.7,735.8 655.4,744.9 656.9,750.0C658.4,755.1 660.0,759.5 661.5,762.3C663.0,765.1 664.7,766.9 666.2,766.9C667.8,766.9 669.3,763.7 670.8,762.3C672.3,760.9 673.6,759.1 675.4,758.3C677.2,757.5 679.2,757.4 681.5,757.7C683.8,758.0 686.9,758.7 689.2,760.2C691.5,761.7 693.1,764.2 695.4,766.9C697.7,769.6 700.8,773.4 703.1,776.2C705.4,779.0 707.2,781.5 709.2,783.8C711.2,786.1 713.6,789.2 715.4,790.0C717.2,790.8 718.6,789.6 720.0,788.5C721.4,787.4 722.7,784.5 724.0,783.2C725.3,781.9 726.5,780.7 727.7,780.8C728.9,780.9 730.1,782.2 731.4,783.8C732.7,785.4 734.2,789.0 735.4,790.6C736.6,792.2 737.5,793.5 738.5,793.1C739.5,792.8 740.6,794.6 741.5,788.5C742.4,782.4 743.0,767.2 743.7,756.2C744.4,745.2 744.7,730.0 745.5,722.3C746.3,714.6 747.5,712.5 748.6,710.0C749.7,707.5 750.9,708.0 752.3,707.5C753.7,707.0 755.6,709.0 756.9,706.9C758.2,704.8 759.0,700.8 760.0,694.6C761.0,688.5 762.1,676.4 763.1,670.0C764.1,663.6 765.3,658.9 766.2,656.2C767.1,653.5 767.5,653.2 768.3,653.7C769.1,654.2 769.9,655.0 770.8,659.2C771.7,663.5 772.8,673.6 773.8,679.2C774.8,684.9 776.0,690.3 776.9,693.1C777.8,695.9 778.5,697.0 779.4,696.2C780.3,695.4 781.3,695.4 782.2,688.5C783.1,681.6 783.7,664.4 784.6,654.6C785.5,644.9 786.4,636.7 787.7,630.0C789.0,623.3 790.5,618.1 792.3,614.6C794.1,611.1 796.5,609.6 798.5,609.1C800.5,608.6 802.8,609.5 804.6,611.5C806.4,613.5 807.9,615.7 809.2,620.8C810.5,625.9 811.3,633.6 812.3,642.3C813.3,651.0 814.4,665.9 815.4,673.1C816.4,680.3 817.2,682.7 818.5,685.4C819.8,688.1 821.3,688.4 823.1,689.1C824.9,689.8 827.4,688.5 829.2,689.4C831.0,690.3 832.4,692.8 833.8,694.6C835.2,696.4 836.5,699.4 837.8,700.2C839.1,701.0 840.4,702.2 841.5,699.2C842.6,696.2 843.6,687.0 844.6,682.3C845.6,677.6 846.7,673.0 847.7,670.9C848.7,668.8 849.7,668.8 850.8,669.4C851.9,670.0 853.2,671.9 854.5,674.6C855.8,677.3 857.1,682.3 858.5,685.4C859.9,688.5 861.6,691.0 863.1,693.1C864.6,695.2 866.2,697.3 867.7,698.3C869.2,699.3 870.8,700.1 872.3,699.2C873.8,698.3 875.4,695.9 876.9,693.1C878.4,690.3 880.0,685.5 881.5,682.3C883.0,679.1 884.7,675.8 886.2,673.7C887.8,671.7 889.5,669.9 890.8,670.0C892.1,670.1 893.0,670.5 893.8,674.6C894.6,678.7 894.9,687.7 895.4,694.6C895.9,701.5 896.1,711.3 896.9,716.2C897.7,721.1 899.0,723.0 900.0,723.8C901.0,724.6 901.8,722.6 903.1,720.8C904.4,719.0 905.9,715.4 907.7,713.1C909.5,710.8 911.8,708.2 913.8,706.9C915.8,705.6 918.4,705.1 920.0,705.4C921.6,705.7 922.7,707.0 923.7,708.5C924.7,710.0 925.3,713.1 926.2,714.6C927.1,716.1 927.5,717.4 929.2,717.7C930.9,718.0 934.1,716.6 936.2,716.2C938.3,715.8 940.2,714.7 941.7,715.2C943.2,715.7 944.3,717.0 945.4,719.2C946.5,721.4 947.2,725.7 948.5,728.5C949.8,731.3 951.3,733.9 953.1,736.2C954.9,738.5 957.5,739.5 959.2,742.3C960.9,745.1 962.2,748.2 963.2,753.1C964.2,758.0 964.5,766.4 965.4,771.5C966.3,776.6 967.5,781.2 968.5,783.8C969.5,786.4 970.3,787.4 971.5,786.9C972.7,786.4 974.2,782.8 975.5,780.8C976.8,778.8 977.8,776.0 979.2,774.6C980.6,773.2 981.8,773.1 983.8,772.5C985.8,771.9 989.2,771.7 991.5,770.9C993.8,770.1 995.7,769.5 997.7,767.8C999.8,766.1 1002.0,764.0 1003.8,760.8C1005.6,757.6 1007.0,751.2 1008.5,748.5C1010.0,745.8 1011.2,744.8 1012.5,744.8C1013.8,744.8 1014.8,745.6 1016.2,748.5C1017.6,751.4 1019.3,756.4 1020.8,762.3C1022.3,768.2 1024.0,777.4 1025.4,783.8C1026.8,790.2 1027.9,797.1 1029.1,800.8C1030.3,804.5 1031.4,806.0 1032.5,806.0C1033.6,806.0 1034.4,804.2 1035.5,800.8C1036.6,797.4 1037.8,789.4 1039.2,785.4C1040.6,781.4 1042.0,778.6 1043.8,776.8C1045.6,775.0 1048.3,775.7 1050.0,774.6C1051.7,773.5 1052.4,773.6 1053.7,770.0C1055.0,766.4 1056.3,759.5 1057.7,753.1C1059.1,746.7 1060.8,737.4 1062.3,731.5C1063.8,725.6 1065.2,720.7 1066.9,717.7C1068.6,714.7 1070.4,714.0 1072.2,713.7C1074.0,713.5 1075.8,714.9 1077.7,716.2C1079.6,717.5 1081.8,719.4 1083.8,721.7C1085.8,724.0 1088.0,726.3 1090.0,730.0C1092.0,733.7 1093.7,738.4 1095.5,743.8C1097.3,749.2 1098.9,756.9 1100.8,762.3C1102.7,767.7 1104.9,772.6 1106.9,776.2C1109.0,779.8 1110.8,782.0 1113.1,783.8C1115.4,785.6 1118.2,786.6 1120.8,786.9C1123.4,787.2 1126.2,787.2 1128.5,785.4C1130.8,783.6 1132.8,780.3 1134.6,776.2C1136.4,772.1 1138.0,765.3 1139.2,760.8C1140.4,756.3 1140.8,751.6 1141.7,749.4C1142.6,747.2 1143.6,746.4 1144.5,747.5C1145.4,748.6 1146.0,751.9 1146.9,756.2C1147.8,760.5 1148.8,769.3 1150.0,773.1C1151.2,776.9 1152.5,778.6 1154.0,779.2C1155.5,779.8 1157.3,777.6 1159.2,776.8C1161.1,776.0 1163.4,774.8 1165.4,774.6C1167.5,774.4 1169.5,774.2 1171.5,775.5C1173.5,776.8 1175.7,779.1 1177.7,782.3C1179.8,785.5 1181.5,790.0 1183.8,794.6C1186.1,799.2 1189.2,805.1 1191.5,810.0C1193.8,814.9 1195.9,819.7 1197.7,823.8C1199.5,827.9 1200.9,832.5 1202.3,834.6C1203.7,836.7 1204.9,837.5 1206.0,836.2C1207.1,834.9 1208.2,832.5 1209.1,826.9C1210.0,821.2 1210.6,810.0 1211.5,802.3C1212.4,794.6 1213.4,786.2 1214.6,780.8C1215.8,775.4 1217.1,772.3 1218.6,770.0C1220.1,767.7 1221.9,767.5 1223.8,766.9C1225.7,766.3 1227.9,766.0 1230.0,766.3C1232.1,766.6 1234.7,766.6 1236.2,768.5C1237.7,770.4 1238.2,773.4 1239.2,777.7C1240.2,782.1 1241.3,790.7 1242.3,794.6C1243.3,798.5 1244.2,800.9 1245.4,801.4C1246.6,801.9 1247.9,799.9 1249.4,797.7C1250.9,795.6 1252.7,791.8 1254.6,788.5C1256.5,785.2 1258.8,781.0 1260.8,777.7C1262.8,774.4 1264.6,771.3 1266.9,768.5C1269.2,765.7 1272.3,763.4 1274.6,760.8C1276.9,758.2 1279.0,755.3 1280.8,753.1C1282.6,750.9 1284.0,748.3 1285.4,747.8C1286.8,747.3 1288.2,747.1 1289.4,750.0C1290.6,752.9 1291.4,761.3 1292.5,765.4C1293.6,769.5 1295.1,773.8 1296.2,774.6C1297.3,775.4 1298.1,773.1 1299.2,770.0C1300.3,766.9 1301.5,760.3 1302.9,756.2C1304.3,752.1 1306.1,748.0 1307.8,745.4C1309.5,742.8 1311.4,741.7 1313.1,740.8C1314.8,739.9 1316.3,739.3 1317.7,739.8C1319.1,740.3 1319.2,741.1 1321.4,743.8C1323.6,746.5 1328.2,754.1 1330.8,756.0C1333.4,757.9 1335.2,756.3 1336.9,755.4C1338.6,754.5 1339.9,753.6 1340.9,750.8C1341.9,748.0 1342.2,741.2 1343.1,738.5C1344.0,735.8 1344.7,735.2 1346.2,734.5C1347.7,733.8 1350.2,734.5 1352.3,734.5C1354.3,734.5 1356.7,735.4 1358.5,734.5C1360.3,733.6 1361.6,732.1 1363.1,729.2C1364.6,726.3 1366.2,721.5 1367.7,716.9C1369.2,712.3 1370.8,707.4 1372.3,701.5C1373.8,695.6 1375.4,688.9 1376.9,681.5C1378.4,674.1 1380.0,665.6 1381.5,656.9C1383.0,648.2 1384.9,638.4 1386.2,629.2C1387.5,620.0 1388.3,610.2 1389.2,601.5C1390.1,592.8 1390.4,584.6 1391.4,576.9C1392.4,569.2 1394.1,560.3 1395.4,555.4C1396.7,550.5 1397.9,549.1 1399.4,547.7C1400.9,546.3 1403.0,547.3 1404.6,546.8C1406.2,546.3 1407.9,547.3 1409.2,544.6C1410.5,541.9 1411.0,537.5 1412.3,530.8C1413.6,524.1 1415.4,514.1 1416.9,504.6C1418.4,495.1 1420.1,481.2 1421.5,473.8C1422.9,466.4 1424.1,462.7 1425.2,460.0C1426.3,457.3 1427.3,457.6 1428.3,457.8C1429.3,458.1 1430.2,459.6 1431.4,461.5C1432.6,463.4 1434.1,467.3 1435.4,469.2C1436.7,471.1 1438.1,473.1 1439.4,472.9C1440.7,472.6 1442.0,472.1 1443.1,467.7C1444.2,463.2 1445.2,457.5 1446.2,446.2C1447.2,434.9 1448.2,420.5 1449.2,400.0C1450.2,379.5 1451.4,345.2 1452.3,323.1C1453.2,301.1 1453.8,280.0 1454.5,267.7C1455.2,255.4 1455.6,252.9 1456.3,249.2C1457.0,245.5 1457.8,245.2 1458.5,245.5C1459.2,245.8 1459.8,247.9 1460.6,250.8C1461.4,253.7 1462.2,259.8 1463.1,263.1C1464.0,266.4 1465.1,269.0 1466.2,270.8C1467.3,272.6 1468.3,273.7 1469.8,273.8C1471.3,273.9 1473.5,272.8 1475.4,271.7C1477.4,270.6 1479.5,268.8 1481.5,267.1C1483.5,265.4 1486.0,264.5 1487.7,261.5C1489.4,258.5 1490.4,254.6 1491.7,249.2C1493.0,243.8 1494.2,233.9 1495.4,229.2C1496.6,224.5 1497.6,222.7 1499.1,220.9C1500.6,219.1 1502.6,218.9 1504.6,218.5C1506.5,218.1 1509.4,217.7 1510.8,218.5C1512.2,219.3 1512.5,218.5 1513.2,223.1C1513.9,227.7 1514.4,234.7 1514.8,246.2C1515.2,257.7 1515.3,276.9 1515.7,292.3C1516.1,307.7 1516.2,325.9 1516.9,338.5C1517.6,351.1 1518.7,361.0 1520.0,367.7C1521.3,374.4 1522.8,376.0 1524.6,378.5C1526.4,381.0 1528.5,381.6 1530.8,382.5C1533.1,383.4 1536.2,384.0 1538.5,384.0C1540.8,384.0 1542.8,383.7 1544.6,382.5C1546.4,381.3 1547.7,380.1 1549.2,376.9C1550.7,373.7 1552.4,368.0 1553.8,363.1C1555.2,358.2 1556.4,351.0 1557.5,347.7C1558.6,344.4 1559.7,342.6 1560.6,343.1C1561.5,343.6 1562.3,345.9 1563.1,350.8C1563.9,355.7 1564.4,366.2 1565.2,372.3C1566.0,378.4 1566.8,384.5 1567.7,387.7C1568.6,390.9 1569.3,391.2 1570.8,391.7C1572.3,392.2 1574.9,391.1 1576.9,390.8C1579.0,390.6 1581.3,389.4 1583.1,390.2C1584.9,391.0 1586.2,392.5 1587.7,395.4C1589.2,398.3 1590.8,403.1 1592.3,407.7C1593.8,412.3 1595.4,418.2 1596.9,423.1C1598.4,428.0 1599.7,432.8 1601.5,436.9C1603.3,441.0 1606.0,443.6 1607.7,447.7C1609.4,451.8 1610.5,455.6 1611.7,461.5C1612.9,467.4 1613.8,475.4 1614.8,483.1C1615.8,490.8 1616.9,500.5 1617.8,507.7C1618.7,514.9 1619.3,522.2 1620.0,526.2C1620.7,530.2 1621.4,532.2 1622.2,531.7C1623.0,531.2 1623.7,528.6 1624.6,523.1C1625.5,517.6 1626.6,507.7 1627.7,498.5C1628.8,489.3 1630.1,478.5 1631.4,467.7C1632.7,456.9 1634.2,442.3 1635.4,433.8C1636.6,425.3 1637.5,420.5 1638.5,416.9C1639.5,413.3 1640.6,412.0 1641.5,412.3C1642.4,412.6 1643.2,414.4 1644.0,418.5C1644.8,422.6 1645.4,431.5 1646.2,436.9C1647.0,442.3 1647.7,447.6 1648.6,450.8C1649.5,454.0 1650.3,455.5 1651.7,456.0C1653.1,456.5 1655.4,454.9 1656.9,453.8C1658.4,452.7 1659.7,453.0 1660.9,449.2C1662.1,445.4 1663.0,441.6 1664.0,430.8C1665.0,420.0 1666.0,401.0 1666.8,384.6C1667.6,368.2 1668.0,343.8 1668.6,332.3C1669.2,320.8 1669.6,318.7 1670.2,315.4C1670.8,312.1 1671.6,311.5 1672.3,312.3C1673.0,313.1 1673.7,313.6 1674.5,320.0C1675.3,326.4 1676.1,341.1 1676.9,350.8C1677.7,360.6 1678.5,372.2 1679.4,378.5C1680.3,384.8 1681.3,387.8 1682.2,388.6C1683.1,389.4 1683.8,387.9 1684.6,383.1C1685.4,378.3 1686.2,367.2 1687.1,360.0C1688.0,352.8 1688.9,344.6 1690.2,340.0C1691.5,335.4 1693.2,333.8 1694.8,332.3C1696.4,330.8 1698.4,330.9 1700.0,330.8C1701.6,330.7 1703.5,329.4 1704.6,331.7C1705.7,334.0 1706.2,335.8 1706.8,344.6C1707.4,353.4 1707.6,374.6 1708.3,384.6C1709.0,394.6 1709.2,400.5 1710.8,404.6C1712.4,408.7 1715.5,408.4 1717.7,409.2C1719.9,410.0 1722.1,410.2 1723.8,409.2C1725.5,408.2 1726.5,405.0 1727.8,403.1C1729.1,401.2 1730.1,398.6 1731.5,397.8C1732.9,397.0 1734.7,397.6 1736.2,398.5C1737.8,399.4 1739.0,401.6 1740.8,403.1C1742.6,404.6 1745.1,406.4 1746.9,407.7C1748.7,409.0 1750.2,409.0 1751.5,410.8C1752.8,412.6 1753.7,413.6 1754.6,418.5C1755.5,423.4 1756.1,430.8 1756.8,440.0C1757.5,449.2 1757.9,464.8 1758.6,473.8C1759.3,482.8 1759.9,489.8 1760.8,493.8C1761.7,497.8 1762.8,498.6 1763.8,497.8C1764.8,497.0 1765.9,494.2 1766.9,489.2C1767.9,484.2 1768.9,472.5 1770.0,467.7C1771.1,462.9 1772.5,460.6 1773.7,460.6C1774.9,460.6 1776.0,462.9 1777.1,467.7C1778.2,472.5 1779.2,483.7 1780.2,489.2C1781.2,494.7 1782.2,500.4 1783.2,500.9C1784.2,501.4 1785.2,499.4 1786.0,492.3C1786.8,485.2 1787.1,470.3 1787.8,458.5C1788.5,446.7 1789.1,429.4 1790.0,421.5C1790.9,413.6 1792.0,412.4 1793.1,410.8C1794.2,409.2 1795.4,410.5 1796.8,411.7C1798.2,412.9 1800.0,415.9 1801.7,417.8C1803.4,419.7 1805.3,421.8 1806.9,423.1C1808.5,424.4 1810.1,424.0 1811.5,425.5C1812.9,427.0 1814.4,427.8 1815.5,432.3C1816.6,436.8 1817.4,443.8 1818.3,452.3C1819.2,460.8 1819.9,475.5 1820.8,483.1C1821.7,490.7 1822.9,496.3 1823.8,497.8C1824.7,499.3 1825.5,497.8 1826.3,492.3C1827.1,486.8 1827.6,473.3 1828.5,464.6C1829.4,455.9 1830.5,444.9 1831.5,440.0C1832.5,435.1 1833.6,435.1 1834.6,435.4C1835.6,435.6 1836.5,438.9 1837.7,441.5C1838.9,444.1 1840.2,448.6 1841.7,450.8C1843.2,453.0 1845.0,453.9 1846.9,454.5C1848.8,455.1 1851.3,453.8 1853.1,454.5C1854.9,455.2 1856.6,454.8 1857.7,458.5C1858.8,462.2 1859.2,469.7 1859.8,476.9C1860.4,484.1 1860.7,495.6 1861.4,501.5C1862.1,507.4 1862.6,510.0 1863.8,512.3C1865.0,514.6 1866.4,514.9 1868.5,515.4C1870.6,515.9 1874.4,514.6 1876.2,515.4C1878.0,516.2 1878.2,518.0 1879.2,520.0C1880.2,522.0 1881.0,525.4 1882.3,527.7C1883.6,530.0 1885.1,532.2 1886.9,533.8C1888.7,535.4 1891.3,537.3 1893.1,537.5C1894.9,537.7 1896.5,537.7 1897.7,534.8C1898.9,531.9 1899.4,525.8 1900.2,520.0C1901.0,514.2 1901.4,503.9 1902.3,500.0C1903.2,496.1 1904.1,496.8 1905.4,496.3C1906.7,495.8 1908.5,496.0 1910.0,496.9C1911.5,497.8 1913.2,499.4 1914.6,501.5C1916.0,503.6 1917.3,505.9 1918.6,509.2C1919.9,512.5 1921.2,519.0 1922.3,521.5C1923.4,524.0 1924.3,524.2 1925.4,524.0C1926.5,523.8 1927.8,521.3 1929.1,520.0C1930.4,518.7 1931.4,517.0 1933.1,516.3C1934.8,515.6 1937.2,515.9 1939.2,516.0C1941.2,516.1 1943.6,517.3 1945.4,516.9C1947.2,516.5 1948.6,516.6 1950.0,513.8C1951.4,511.0 1952.4,505.6 1953.7,500.0C1955.0,494.4 1956.5,486.4 1957.7,480.0C1958.9,473.6 1959.8,465.9 1960.8,461.5C1961.8,457.1 1962.8,455.1 1963.8,453.8C1964.8,452.5 1965.6,453.0 1966.9,453.8C1968.2,454.6 1970.0,457.1 1971.5,458.5C1973.0,459.9 1974.7,461.8 1976.2,462.2C1977.8,462.6 1979.3,462.2 1980.8,460.6C1982.3,459.0 1983.6,456.2 1985.4,452.3C1987.2,448.4 1989.5,442.3 1991.5,436.9C1993.5,431.5 1995.7,425.4 1997.7,420.0C1999.8,414.6 2001.8,408.6 2003.8,404.6C2005.8,400.7 2007.9,398.4 2010.0,396.3C2012.1,394.2 2014.4,392.8 2016.2,392.3C2018.0,391.8 2019.6,391.4 2020.8,393.2C2022.0,395.0 2022.4,398.9 2023.2,403.1C2024.0,407.3 2024.3,413.4 2025.4,418.5C2026.5,423.6 2028.5,430.1 2030.0,433.8C2031.5,437.5 2033.1,439.6 2034.6,440.9C2036.1,442.2 2037.7,442.3 2039.2,441.5C2040.7,440.7 2042.2,439.1 2043.8,436.3C2045.3,433.5 2047.0,428.6 2048.5,424.6C2050.1,420.6 2051.6,415.2 2053.1,412.3C2054.6,409.4 2055.9,408.0 2057.7,407.1C2059.5,406.2 2062.0,406.5 2063.8,407.1C2065.6,407.7 2067.1,408.7 2068.5,410.8C2069.9,412.9 2071.3,415.6 2072.5,420.0C2073.7,424.4 2074.4,432.5 2075.5,436.9C2076.6,441.3 2077.5,444.1 2079.2,446.2C2080.8,448.2 2083.1,448.4 2085.4,449.2C2087.7,450.0 2090.9,450.3 2093.1,450.8C2095.2,451.3 2097.0,451.3 2098.3,452.3C2099.6,453.3 2099.9,453.3 2100.8,456.9C2101.7,460.5 2102.8,467.9 2103.8,473.8C2104.8,479.7 2105.6,487.2 2106.9,492.3C2108.2,497.4 2109.9,501.6 2111.5,504.6C2113.1,507.6 2114.8,509.2 2116.2,510.2C2117.6,511.2 2119.0,512.0 2120.2,510.8C2121.4,509.6 2122.3,507.7 2123.2,503.1C2124.1,498.5 2124.7,488.4 2125.4,483.1C2126.1,477.8 2126.7,473.5 2127.5,471.4C2128.3,469.2 2129.2,469.0 2130.0,470.2C2130.8,471.4 2131.6,473.3 2132.2,478.5C2132.8,483.7 2133.1,492.5 2133.7,501.5C2134.2,510.5 2134.8,525.4 2135.5,532.3C2136.2,539.2 2137.0,541.1 2137.7,543.1C2138.4,545.1 2138.8,545.0 2139.8,544.0C2140.8,543.0 2142.1,539.6 2143.8,536.9C2145.5,534.2 2147.9,530.2 2150.0,527.7C2152.1,525.2 2154.3,524.5 2156.2,522.2C2158.1,519.9 2159.9,517.2 2161.4,513.8C2162.9,510.3 2164.1,505.1 2165.4,501.5C2166.7,497.9 2167.9,494.4 2169.4,492.3C2170.9,490.2 2172.9,489.4 2174.6,488.6C2176.3,487.8 2178.3,487.3 2179.8,487.7C2181.3,488.1 2182.5,488.8 2183.8,490.8C2185.1,492.9 2186.6,497.9 2187.8,500.0C2189.0,502.1 2189.9,503.4 2190.9,503.1C2191.9,502.9 2193.0,502.4 2194.0,498.5C2195.0,494.6 2196.1,486.7 2197.1,480.0C2198.1,473.3 2199.2,465.2 2200.2,458.5C2201.2,451.8 2202.2,444.9 2203.2,440.0C2204.2,435.1 2205.1,431.8 2206.3,429.2C2207.5,426.6 2208.9,425.5 2210.6,424.6C2212.2,423.7 2214.3,424.0 2216.2,424.0C2218.0,424.0 2220.4,423.7 2221.7,424.6C2223.0,425.5 2223.1,426.1 2223.8,429.2C2224.5,432.3 2225.2,439.5 2226.0,443.1C2226.8,446.7 2227.3,449.3 2228.5,450.8C2229.7,452.3 2231.0,452.1 2233.1,452.3C2235.2,452.6 2238.5,452.8 2240.8,452.3C2243.1,451.8 2245.3,450.3 2246.9,449.2C2248.5,448.1 2249.5,445.5 2250.6,445.5C2251.7,445.5 2252.9,446.0 2253.7,449.2C2254.5,452.4 2254.8,457.9 2255.5,464.6C2256.2,471.3 2256.8,483.3 2257.7,489.2C2258.6,495.1 2259.6,498.7 2260.8,500.0C2262.0,501.3 2263.4,498.4 2264.8,496.9C2266.2,495.4 2267.7,492.2 2269.1,490.8C2270.5,489.4 2271.8,488.4 2273.1,488.6C2274.4,488.9 2275.7,489.6 2276.8,492.3C2277.9,495.0 2278.9,497.9 2279.8,504.6C2280.7,511.3 2281.6,520.5 2282.3,532.3C2283.0,544.1 2283.2,560.5 2283.8,575.4C2284.5,590.3 2285.5,604.6 2286.2,621.5C2286.8,638.4 2287.1,664.6 2287.7,676.9C2288.3,689.2 2288.8,692.0 2289.8,695.4C2290.8,698.8 2292.4,697.8 2293.8,697.5C2295.2,697.2 2296.9,696.2 2298.5,693.8C2300.1,691.4 2301.6,688.5 2303.1,683.1C2304.6,677.7 2306.2,670.2 2307.7,661.5C2309.2,652.8 2310.8,639.5 2312.3,630.8C2313.8,622.1 2315.5,614.3 2316.9,609.2C2318.3,604.1 2319.4,601.7 2320.6,600.0C2321.8,598.3 2323.0,598.3 2324.0,599.1C2325.0,599.9 2325.9,600.9 2326.8,604.6C2327.7,608.3 2328.0,614.6 2329.2,621.5C2330.4,628.4 2332.0,638.0 2333.8,646.2C2335.6,654.4 2337.9,662.6 2340.0,670.8C2342.1,679.0 2344.1,688.5 2346.2,695.4C2348.2,702.3 2350.2,707.9 2352.3,712.3C2354.4,716.6 2356.7,719.4 2358.5,721.5C2360.3,723.6 2361.7,725.2 2363.1,725.2C2364.5,725.2 2365.7,724.4 2366.8,721.5C2367.9,718.6 2368.6,711.5 2369.8,707.7C2371.0,703.9 2372.4,701.1 2373.8,698.5C2375.2,695.9 2376.9,694.6 2378.5,692.3C2380.1,690.0 2381.8,688.7 2383.1,684.6C2384.4,680.5 2385.2,673.3 2386.2,667.7C2387.2,662.1 2388.2,654.8 2389.2,650.8C2390.2,646.8 2391.3,644.6 2392.3,643.7C2393.3,642.8 2394.4,643.5 2395.4,645.5C2396.4,647.5 2397.2,650.7 2398.5,655.4C2399.8,660.1 2401.6,668.2 2403.1,673.8C2404.6,679.4 2406.3,685.5 2407.7,689.2C2409.1,693.0 2410.4,695.0 2411.7,696.3C2413.0,697.6 2414.0,697.5 2415.4,696.9C2416.8,696.3 2418.5,695.2 2420.0,692.9C2421.5,690.6 2423.1,687.5 2424.6,683.1C2426.1,678.7 2427.7,672.4 2429.2,666.2C2430.7,660.1 2432.2,653.1 2433.8,646.2C2435.4,639.3 2436.9,631.5 2438.5,624.6C2440.1,617.7 2441.6,610.2 2443.1,604.6C2444.6,599.0 2446.3,594.2 2447.7,590.8C2449.1,587.4 2450.4,585.4 2451.7,584.0C2453.0,582.6 2454.0,582.4 2455.4,582.5C2456.8,582.6 2458.2,583.5 2460.0,584.6C2461.8,585.7 2464.1,586.9 2466.2,589.2C2468.2,591.5 2470.2,595.2 2472.3,598.5C2474.4,601.8 2476.6,604.9 2478.5,609.2C2480.4,613.6 2482.2,619.0 2483.7,624.6C2485.2,630.2 2486.5,637.0 2487.7,643.1C2488.9,649.2 2489.8,657.5 2490.8,661.5C2491.8,665.5 2492.8,666.8 2493.8,667.1C2494.8,667.4 2496.0,666.1 2496.9,663.1C2497.8,660.1 2498.3,653.0 2499.1,649.2C2499.9,645.5 2500.5,642.4 2501.5,640.6C2502.5,638.8 2503.6,638.6 2505.2,638.5C2506.8,638.4 2508.9,639.9 2510.8,640.0C2512.8,640.1 2515.1,640.4 2516.9,639.4C2518.7,638.4 2520.1,635.2 2521.5,633.8C2522.9,632.4 2524.3,630.5 2525.5,630.8C2526.7,631.1 2527.7,631.8 2528.6,635.4C2529.5,639.0 2530.1,644.3 2530.8,652.3C2531.5,660.2 2532.1,672.9 2532.9,683.1C2533.7,693.4 2534.5,704.1 2535.4,713.8C2536.3,723.5 2537.5,734.3 2538.5,741.5C2539.5,748.7 2540.4,753.7 2541.5,756.9C2542.6,760.1 2544.1,761.1 2545.2,760.9C2546.3,760.6 2547.4,760.2 2548.3,755.4C2549.2,750.6 2550.0,739.7 2550.8,732.3C2551.6,724.9 2552.3,715.3 2553.2,710.8C2554.1,706.3 2555.1,705.0 2556.0,705.2C2556.9,705.5 2557.7,707.8 2558.5,712.3C2559.3,716.8 2559.8,725.6 2560.6,732.3C2561.4,739.0 2562.2,747.8 2563.1,752.3C2564.0,756.8 2565.3,759.4 2566.2,759.1C2567.1,758.9 2567.8,756.0 2568.6,750.8C2569.4,745.6 2569.9,733.4 2570.8,727.7C2571.7,722.1 2572.8,718.7 2573.8,716.9C2574.8,715.1 2575.7,716.1 2576.9,716.9C2578.1,717.7 2579.6,719.7 2580.9,721.5C2582.2,723.3 2583.4,726.7 2584.6,727.7C2585.8,728.7 2587.0,729.2 2588.3,727.7C2589.6,726.2 2590.9,723.9 2592.3,718.5C2593.7,713.1 2595.5,704.4 2596.9,695.4C2598.3,686.4 2599.6,673.8 2600.6,664.6C2601.6,655.4 2602.3,645.6 2603.1,640.0C2603.9,634.4 2604.6,632.1 2605.5,630.8C2606.4,629.5 2607.5,629.7 2608.3,632.3C2609.1,634.9 2609.5,640.3 2610.2,646.2C2610.9,652.1 2611.4,661.8 2612.3,667.7C2613.2,673.6 2614.3,678.4 2615.4,681.5C2616.5,684.6 2617.6,685.3 2619.1,686.2C2620.6,687.1 2622.9,686.0 2624.6,686.8C2626.3,687.6 2627.8,688.3 2629.2,690.8C2630.6,693.2 2631.9,697.7 2633.2,701.5C2634.5,705.3 2635.7,709.2 2636.9,713.8C2638.1,718.4 2639.3,724.6 2640.6,729.2C2641.9,733.8 2643.2,738.7 2644.6,741.5C2646.0,744.3 2647.4,745.2 2649.2,746.2C2651.0,747.2 2653.3,746.7 2655.4,747.7C2657.5,748.7 2659.6,750.2 2661.5,752.3C2663.4,754.3 2665.4,756.7 2667.1,760.0C2668.8,763.3 2670.0,769.1 2671.4,772.3C2672.8,775.5 2674.1,778.1 2675.4,779.1C2676.7,780.1 2677.8,779.6 2679.1,778.5C2680.4,777.4 2681.6,775.9 2683.1,772.3C2684.6,768.7 2687.4,759.5 2688.3,756.9" fill="none" stroke="#f1c95f" stroke-width="1.7" stroke-linejoin="round"/>
<line x1="2688" x2="2688" y1="199.8" y2="999" stroke="#a9aaac" stroke-width="2" stroke-dasharray="8 4"/>
<circle cx="2688" cy="756.6" r="8.6" fill="#ffffff" stroke="#e4bb5c" stroke-width="4.1"/>
<circle cx="2688" cy="742.5" r="8.6" fill="#ffffff" stroke="#5cc28a" stroke-width="4.1"/>
<rect x="70.4" y="725.7" width="87.5" height="44.2" rx="5" fill="#000"/>
<text transform="translate(83.60 755.00) scale(0.9773 1)" font-family="Liberation Sans, sans-serif" font-size="24" fill="#fff" text-anchor="start" stroke="#fff" stroke-width="0.4">3.77B</text>
<rect x="2699.2" y="725.8" width="72.4" height="43.9" rx="5" fill="#000"/>
<text transform="translate(2712.80 755.00) scale(0.9676 1)" font-family="Liberation Sans, sans-serif" font-size="24" fill="#fff" text-anchor="start" stroke="#fff" stroke-width="0.4">2.24</text>
<rect x="2239" y="790.3" width="409" height="211" rx="15" fill="#03050a"/><rect x="2648" y="950.8" width="1" height="5.5" fill="#80848c"/>
<text transform="translate(2268.80 852.00) scale(0.9845 1)" font-family="Liberation Sans, sans-serif" font-size="29.5" fill="#fff" text-anchor="start" stroke="#fff" stroke-width="0.3">19 Nov 2025, 03:00</text>
<circle cx="2278.8" cy="904.8" r="8.1" fill="#e6bd5e" stroke="#dfe3ea" stroke-width="4.2"/>
<text transform="translate(2296.20 915.40) scale(0.9813 1)" font-family="Liberation Sans, sans-serif" font-size="29.5" fill="#cdd3de" text-anchor="start">XRP Price</text>
<text transform="translate(2617.80 915.40) scale(0.9821 1)" font-family="Liberation Sans, sans-serif" font-size="29.5" fill="#fff" text-anchor="end" stroke="#fff" stroke-width="0.3">$2.22</text>
<circle cx="2278.8" cy="949.1" r="8.1" fill="#5fc088" stroke="#dfe3ea" stroke-width="4.2"/>
<text transform="translate(2297.00 959.50) scale(1.0546 1)" font-family="Liberation Sans, sans-serif" font-size="29.5" fill="#cdd3de" text-anchor="start">Open Interest</text>
<text transform="translate(2618.40 959.50) scale(0.9947 1)" font-family="Liberation Sans, sans-serif" font-size="29.5" fill="#fff" text-anchor="end" stroke="#fff" stroke-width="0.3">$3.85B</text>
<clipPath id="cw"><rect x="2373.4" y="1040" width="297.9" height="119.8"/></clipPath>
<clipPath id="cu"><rect x="0" y="1040" width="2373.4" height="119.8"/></clipPath>
<path d="M170.2,1134.3L172.8,1134.3L175.4,1134.7L178.0,1134.4L180.6,1134.8L183.2,1135.0L185.8,1135.8L188.4,1136.9L191.0,1136.5L193.6,1136.7L196.2,1136.3L198.8,1136.3L201.4,1136.4L204.0,1136.5L206.6,1136.0L209.2,1136.0L211.8,1136.1L214.4,1136.2L217.0,1135.9L219.6,1135.8L222.2,1136.2L224.8,1135.6L227.4,1136.1L230.0,1135.7L232.6,1135.6L235.2,1135.5L237.8,1135.7L240.4,1136.0L243.0,1135.5L245.6,1135.8L248.2,1135.8L250.8,1135.6L253.4,1135.7L256.0,1135.4L258.6,1135.4L261.2,1135.4L263.8,1135.7L266.4,1135.6L269.0,1135.5L271.6,1135.6L274.2,1135.5L276.8,1135.4L279.4,1135.7L282.0,1135.6L284.6,1135.3L287.2,1135.5L289.8,1135.5L292.4,1135.7L295.0,1135.6L297.6,1135.3L300.2,1135.7L302.8,1135.1L305.4,1135.3L308.0,1135.5L310.6,1135.1L313.2,1135.3L315.8,1135.0L318.4,1135.3L321.0,1135.4L323.6,1135.2L326.2,1135.4L328.8,1135.0L331.4,1135.2L334.0,1135.1L336.6,1135.1L339.2,1135.0L341.8,1135.2L344.4,1135.3L347.0,1134.9L349.6,1135.0L352.2,1134.5L354.8,1134.3L357.4,1133.6L360.0,1133.3L362.6,1133.2L365.2,1132.9L367.8,1133.0L370.4,1133.3L373.0,1132.8L375.6,1133.2L378.2,1133.1L380.8,1133.1L383.4,1133.1L386.0,1133.7L388.6,1133.3L391.2,1133.4L393.8,1133.6L396.4,1134.1L399.0,1133.5L401.6,1133.8L404.2,1134.0L406.8,1134.2L409.4,1134.2L412.0,1134.2L414.6,1133.8L417.2,1133.9L419.8,1133.9L422.4,1134.3L425.0,1134.4L427.6,1133.8L430.2,1133.9L432.8,1133.9L435.4,1133.9L438.0,1134.1L440.6,1134.2L443.2,1134.0L445.8,1133.8L448.4,1134.2L451.0,1134.1L453.6,1134.3L456.2,1134.6L458.8,1134.4L461.4,1134.3L464.0,1134.4L466.6,1134.5L469.2,1134.0L471.8,1134.7L474.4,1134.5L477.0,1134.4L479.6,1134.2L482.2,1133.7L484.8,1133.5L487.4,1133.1L490.0,1131.3L492.6,1127.5L495.2,1126.5L497.8,1126.5L500.4,1126.1L503.0,1126.1L505.6,1126.0L508.2,1126.3L510.8,1126.8L513.4,1127.1L516.0,1127.8L518.6,1127.7L521.2,1128.2L523.8,1127.4L526.4,1126.7L529.0,1128.9L531.6,1131.1L534.2,1133.3L536.8,1134.6L539.4,1134.8L542.0,1134.6L544.6,1133.9L547.2,1133.6L549.8,1133.1L552.4,1133.2L555.0,1133.4L557.6,1133.4L560.2,1133.9L562.8,1133.4L565.4,1133.4L568.0,1134.1L570.6,1133.9L573.2,1133.6L575.8,1133.2L578.4,1131.8L581.0,1131.3L583.6,1130.8L586.2,1129.8L588.8,1128.6L591.4,1127.7L594.0,1127.5L596.6,1126.9L599.2,1128.5L601.8,1129.1L604.4,1130.3L607.0,1130.6L609.6,1130.4L612.2,1130.9L614.8,1131.0L617.4,1130.8L620.0,1130.6L622.6,1130.6L625.2,1130.4L627.8,1129.7L630.4,1130.0L633.0,1129.7L635.6,1129.1L638.2,1128.7L640.8,1128.6L643.4,1128.2L646.0,1128.4L648.6,1128.4L651.2,1127.4L653.8,1124.1L656.4,1118.5L659.0,1113.0L661.6,1106.0L664.2,1099.9L666.8,1102.1L669.4,1106.5L672.0,1109.8L674.6,1113.8L677.2,1117.3L679.8,1112.2L682.4,1105.5L685.0,1106.4L687.6,1107.2L690.2,1105.4L692.8,1107.6L695.4,1108.8L698.0,1108.8L700.6,1107.9L703.2,1107.9L705.8,1112.9L708.4,1119.9L711.0,1122.4L713.6,1121.4L716.2,1120.3L718.8,1118.3L721.4,1117.5L724.0,1118.7L726.6,1119.4L729.2,1119.5L731.8,1120.3L734.4,1120.9L737.0,1122.8L739.6,1123.1L742.2,1122.6L744.8,1125.8L747.4,1127.8L750.0,1126.9L752.6,1126.0L755.2,1125.8L757.8,1124.8L760.4,1124.1L763.0,1125.8L765.6,1125.6L768.2,1125.8L770.8,1126.7L773.4,1126.3L776.0,1127.2L778.6,1127.5L781.2,1126.8L783.8,1126.0L786.4,1125.2L789.0,1124.3L791.6,1124.0L794.2,1122.7L796.8,1122.3L799.4,1121.1L802.0,1121.8L804.6,1119.2L807.2,1116.5L809.8,1113.9L812.4,1113.5L815.0,1113.0L817.6,1114.8L820.2,1114.5L822.8,1114.4L825.4,1113.8L828.0,1111.9L830.6,1112.3L833.2,1111.0L835.8,1111.5L838.4,1114.8L841.0,1114.8L843.6,1115.9L846.2,1116.7L848.8,1116.6L851.4,1116.3L854.0,1118.0L856.6,1119.3L859.2,1119.2L861.8,1117.4L864.4,1117.8L867.0,1116.6L869.6,1116.0L872.2,1116.4L874.8,1115.2L877.4,1114.9L880.0,1115.6L882.6,1116.2L885.2,1115.4L887.8,1116.0L890.4,1116.1L893.0,1116.3L895.6,1117.0L898.2,1116.1L900.8,1115.4L903.4,1114.3L906.0,1114.5L908.6,1113.0L911.2,1113.7L913.8,1114.8L916.4,1114.1L919.0,1115.7L921.6,1117.5L924.2,1117.6L926.8,1116.4L929.4,1116.6L932.0,1117.6L934.6,1117.1L937.2,1117.7L939.8,1118.7L942.4,1121.3L945.0,1122.8L947.6,1122.8L950.2,1121.4L952.8,1122.3L955.4,1121.8L958.0,1119.7L960.6,1119.8L963.2,1119.4L965.8,1118.8L968.4,1121.1L971.0,1121.0L973.6,1121.9L976.2,1123.0L978.8,1123.0L981.4,1122.1L984.0,1122.8L986.6,1123.2L989.2,1123.6L991.8,1124.3L994.4,1125.4L997.0,1126.8L999.6,1126.2L1002.2,1126.9L1004.8,1126.7L1007.4,1126.2L1010.0,1126.6L1012.6,1127.0L1015.2,1124.1L1017.8,1120.2L1020.4,1122.0L1023.0,1122.1L1025.6,1122.8L1028.2,1121.8L1030.8,1122.5L1033.4,1122.6L1036.0,1124.2L1038.6,1123.7L1041.2,1123.9L1043.8,1124.6L1046.4,1125.1L1049.0,1124.7L1051.6,1123.6L1054.2,1123.2L1056.8,1124.1L1059.4,1123.3L1062.0,1123.2L1064.6,1121.8L1067.2,1121.4L1069.8,1122.2L1072.4,1121.4L1075.0,1120.4L1077.6,1121.6L1080.2,1121.3L1082.8,1122.2L1085.4,1121.6L1088.0,1123.5L1090.6,1122.9L1093.2,1124.7L1095.8,1124.0L1098.4,1123.6L1101.0,1123.7L1103.6,1124.0L1106.2,1123.4L1108.8,1123.7L1111.4,1124.8L1114.0,1124.9L1116.6,1125.3L1119.2,1125.9L1121.8,1126.3L1124.4,1127.1L1127.0,1128.5L1129.6,1129.7L1132.2,1131.1L1134.8,1130.7L1137.4,1131.0L1140.0,1130.8L1142.6,1131.0L1145.2,1130.8L1147.8,1131.1L1150.4,1131.0L1153.0,1131.8L1155.6,1131.7L1158.2,1131.5L1160.8,1131.9L1163.4,1132.6L1166.0,1132.2L1168.6,1133.1L1171.2,1133.0L1173.8,1133.3L1176.4,1133.6L1179.0,1133.2L1181.6,1133.3L1184.2,1133.4L1186.8,1133.6L1189.4,1133.0L1192.0,1133.3L1194.6,1133.2L1197.2,1133.1L1199.8,1132.8L1202.4,1132.7L1205.0,1132.4L1207.6,1132.3L1210.2,1132.2L1212.8,1132.7L1215.4,1132.2L1218.0,1132.0L1220.6,1131.9L1223.2,1132.5L1225.8,1132.4L1228.4,1132.2L1231.0,1131.7L1233.6,1131.6L1236.2,1131.6L1238.8,1131.8L1241.4,1131.6L1244.0,1131.9L1246.6,1131.7L1249.2,1132.4L1251.8,1132.5L1254.4,1132.1L1257.0,1131.9L1259.6,1132.5L1262.2,1132.0L1264.8,1132.1L1267.4,1131.8L1270.0,1132.2L1272.6,1132.3L1275.2,1132.3L1277.8,1132.1L1280.4,1132.4L1283.0,1131.3L1285.6,1130.9L1288.2,1130.0L1290.8,1129.7L1293.4,1129.2L1296.0,1129.1L1298.6,1129.4L1301.2,1129.2L1303.8,1129.6L1306.4,1129.4L1309.0,1129.6L1311.6,1129.5L1314.2,1129.6L1316.8,1129.8L1319.4,1129.3L1322.0,1129.3L1324.6,1130.1L1327.2,1129.2L1329.8,1129.9L1332.4,1129.8L1335.0,1129.2L1337.6,1130.1L1340.2,1130.2L1342.8,1130.4L1345.4,1131.2L1348.0,1131.9L1350.6,1131.4L1353.2,1131.7L1355.8,1131.7L1358.4,1131.9L1361.0,1131.9L1363.6,1131.8L1366.2,1131.6L1368.8,1131.8L1371.4,1131.6L1374.0,1131.5L1376.6,1131.0L1379.2,1130.9L1381.8,1131.1L1384.4,1131.4L1387.0,1131.3L1389.6,1132.0L1392.2,1131.8L1394.8,1132.0L1397.4,1132.1L1400.0,1132.2L1402.6,1132.1L1405.2,1131.7L1407.8,1132.5L1410.4,1132.6L1413.0,1132.3L1415.6,1132.2L1418.2,1132.2L1420.8,1131.5L1423.4,1132.0L1426.0,1131.4L1428.6,1131.1L1431.2,1131.1L1433.8,1131.5L1436.4,1130.8L1439.0,1131.2L1441.6,1131.3L1444.2,1130.8L1446.8,1130.8L1449.4,1130.9L1452.0,1131.2L1454.6,1131.3L1457.2,1131.2L1459.8,1131.2L1462.4,1130.7L1465.0,1130.8L1467.6,1131.0L1470.2,1131.5L1472.8,1131.1L1475.4,1131.4L1478.0,1130.9L1480.6,1131.0L1483.2,1131.3L1485.8,1131.7L1488.4,1131.8L1491.0,1131.8L1493.6,1131.5L1496.2,1131.7L1498.8,1131.7L1501.4,1131.6L1504.0,1130.6L1506.6,1130.8L1509.2,1129.5L1511.8,1129.8L1514.4,1129.1L1517.0,1127.8L1519.6,1128.4L1522.2,1128.9L1524.8,1129.2L1527.4,1128.7L1530.0,1128.6L1532.6,1128.6L1535.2,1129.6L1537.8,1128.8L1540.4,1129.4L1543.0,1129.0L1545.6,1129.5L1548.2,1130.1L1550.8,1129.3L1553.4,1130.1L1556.0,1129.9L1558.6,1130.4L1561.2,1130.3L1563.8,1129.9L1566.4,1130.7L1569.0,1130.2L1571.6,1129.7L1574.2,1129.7L1576.8,1130.1L1579.4,1130.1L1582.0,1129.9L1584.6,1129.7L1587.2,1129.8L1589.8,1129.8L1592.4,1130.3L1595.0,1129.4L1597.6,1130.1L1600.2,1130.2L1602.8,1129.4L1605.4,1130.2L1608.0,1130.0L1610.6,1130.1L1613.2,1129.4L1615.8,1129.5L1618.4,1129.5L1621.0,1130.1L1623.6,1129.6L1626.2,1129.3L1628.8,1129.4L1631.4,1129.2L1634.0,1128.9L1636.6,1128.9L1639.2,1129.7L1641.8,1125.5L1644.4,1124.6L1647.0,1122.9L1649.6,1122.4L1652.2,1123.3L1654.8,1123.2L1657.4,1123.9L1660.0,1125.2L1662.6,1125.5L1665.2,1125.8L1667.8,1126.0L1670.4,1126.8L1673.0,1127.3L1675.6,1127.2L1678.2,1127.9L1680.8,1127.5L1683.4,1128.6L1686.0,1128.3L1688.6,1128.7L1691.2,1128.6L1693.8,1128.2L1696.4,1127.9L1699.0,1129.0L1701.6,1128.1L1704.2,1128.5L1706.8,1128.4L1709.4,1128.4L1712.0,1129.0L1714.6,1129.3L1717.2,1128.4L1719.8,1128.9L1722.4,1128.6L1725.0,1128.9L1727.6,1128.7L1730.2,1128.5L1732.8,1128.5L1735.4,1128.6L1738.0,1129.5L1740.6,1129.0L1743.2,1128.7L1745.8,1129.6L1748.4,1129.7L1751.0,1129.1L1753.6,1128.8L1756.2,1128.9L1758.8,1128.8L1761.4,1129.1L1764.0,1128.6L1766.6,1128.3L1769.2,1127.8L1771.8,1127.6L1774.4,1127.6L1777.0,1126.9L1779.6,1125.9L1782.2,1125.4L1784.8,1125.5L1787.4,1125.4L1790.0,1125.6L1792.6,1125.4L1795.2,1125.9L1797.8,1127.0L1800.4,1126.1L1803.0,1126.8L1805.6,1127.0L1808.2,1127.3L1810.8,1126.4L1813.4,1126.5L1816.0,1126.5L1818.6,1126.7L1821.2,1126.7L1823.8,1127.4L1826.4,1127.3L1829.0,1127.3L1831.6,1126.2L1834.2,1126.2L1836.8,1127.1L1839.4,1127.3L1842.0,1126.8L1844.6,1126.9L1847.2,1126.2L1849.8,1126.8L1852.4,1127.6L1855.0,1127.6L1857.6,1127.7L1860.2,1127.9L1862.8,1127.0L1865.4,1126.9L1868.0,1127.1L1870.6,1127.6L1873.2,1127.9L1875.8,1128.3L1878.4,1128.1L1881.0,1128.1L1883.6,1128.3L1886.2,1128.0L1888.8,1128.2L1891.4,1127.7L1894.0,1128.6L1896.6,1127.8L1899.2,1128.5L1901.8,1128.0L1904.4,1127.4L1907.0,1127.0L1909.6,1127.0L1912.2,1127.4L1914.8,1127.3L1917.4,1126.3L1920.0,1126.1L1922.6,1126.6L1925.2,1126.5L1927.8,1126.1L1930.4,1125.7L1933.0,1126.0L1935.6,1125.2L1938.2,1125.7L1940.8,1126.0L1943.4,1126.8L1946.0,1126.5L1948.6,1126.9L1951.2,1126.5L1953.8,1126.3L1956.4,1126.4L1959.0,1127.5L1961.6,1127.2L1964.2,1126.8L1966.8,1126.5L1969.4,1127.3L1972.0,1128.4L1974.6,1129.1L1977.2,1129.0L1979.8,1129.5L1982.4,1129.8L1985.0,1129.0L1987.6,1128.8L1990.2,1129.2L1992.8,1129.3L1995.4,1129.6L1998.0,1129.1L2000.6,1129.8L2003.2,1129.7L2005.8,1129.5L2008.4,1129.1L2011.0,1130.0L2013.6,1129.3L2016.2,1129.9L2018.8,1129.2L2021.4,1129.2L2024.0,1129.8L2026.6,1129.3L2029.2,1130.1L2031.8,1129.6L2034.4,1129.3L2037.0,1129.3L2039.6,1129.5L2042.2,1129.8L2044.8,1130.2L2047.4,1129.3L2050.0,1129.6L2052.6,1129.4L2055.2,1130.2L2057.8,1129.3L2060.4,1129.3L2063.0,1129.3L2065.6,1129.7L2068.2,1130.2L2070.8,1130.2L2073.4,1130.4L2076.0,1131.0L2078.6,1131.2L2081.2,1129.8L2083.8,1128.9L2086.4,1129.1L2089.0,1128.2L2091.6,1126.7L2094.2,1127.5L2096.8,1127.1L2099.4,1127.1L2102.0,1127.1L2104.6,1126.9L2107.2,1127.0L2109.8,1128.1L2112.4,1128.6L2115.0,1129.2L2117.6,1128.2L2120.2,1129.1L2122.8,1128.1L2125.4,1128.2L2128.0,1128.7L2130.6,1128.6L2133.2,1128.1L2135.8,1127.5L2138.4,1128.0L2141.0,1127.8L2143.6,1128.4L2146.2,1127.4L2148.8,1127.6L2151.4,1128.3L2154.0,1127.3L2156.6,1127.8L2159.2,1128.3L2161.8,1128.2L2164.4,1127.3L2167.0,1127.4L2169.6,1127.4L2172.2,1128.5L2174.8,1127.7L2177.4,1128.3L2180.0,1128.5L2182.6,1127.8L2185.2,1127.8L2187.8,1128.6L2190.4,1128.2L2193.0,1127.8L2195.6,1128.4L2198.2,1127.9L2200.8,1127.9L2203.4,1127.6L2206.0,1128.5L2208.6,1128.7L2211.2,1128.4L2213.8,1128.8L2216.4,1127.7L2219.0,1128.0L2221.6,1128.3L2224.2,1128.2L2226.8,1127.4L2229.4,1125.8L2232.0,1122.5L2234.6,1119.3L2237.2,1116.0L2239.8,1114.3L2242.4,1109.8L2245.0,1108.7L2247.6,1100.9L2250.2,1093.9L2252.8,1088.2L2255.4,1088.4L2258.0,1086.1L2260.6,1083.1L2263.2,1089.0L2265.8,1090.4L2268.4,1085.6L2271.0,1085.7L2273.6,1090.3L2276.2,1089.8L2278.8,1089.9L2281.4,1090.6L2284.0,1092.3L2286.6,1089.2L2289.2,1090.9L2291.8,1090.2L2294.4,1090.4L2297.0,1087.0L2299.6,1083.2L2302.2,1078.8L2304.8,1075.6L2307.4,1070.7L2310.0,1070.0L2312.6,1069.6L2315.2,1071.7L2317.8,1073.9L2320.4,1075.2L2323.0,1073.7L2325.6,1076.5L2328.2,1081.4L2330.8,1084.7L2333.4,1088.6L2336.0,1086.7L2338.6,1086.6L2341.2,1082.5L2343.8,1081.7L2346.4,1079.5L2349.0,1080.8L2351.6,1083.6L2354.2,1086.0L2356.8,1091.5L2359.4,1091.5L2362.0,1090.0L2364.6,1086.9L2367.2,1088.0L2369.8,1086.7L2372.4,1086.3L2375.0,1088.6L2377.6,1086.8L2380.2,1087.2L2382.8,1083.1L2385.4,1085.7L2388.0,1088.1L2390.6,1089.9L2393.2,1092.2L2395.8,1090.7L2398.4,1091.5L2401.0,1090.0L2403.6,1093.9L2406.2,1100.9L2408.8,1097.8L2411.4,1096.9L2414.0,1092.5L2416.6,1093.9L2419.2,1091.5L2421.8,1090.1L2424.4,1091.7L2427.0,1092.7L2429.6,1089.4L2432.2,1091.7L2434.8,1092.1L2437.4,1090.7L2440.0,1090.8L2442.6,1087.8L2445.2,1086.1L2447.8,1084.3L2450.4,1086.4L2453.0,1087.3L2455.6,1086.0L2458.2,1086.1L2460.8,1088.4L2463.4,1090.9L2466.0,1089.5L2468.6,1090.7L2471.2,1090.9L2473.8,1094.0L2476.4,1091.9L2479.0,1088.0L2481.6,1088.7L2484.2,1091.1L2486.8,1092.9L2489.4,1094.4L2492.0,1092.1L2494.6,1092.0L2497.2,1093.8L2499.8,1092.3L2502.4,1091.4L2505.0,1091.2L2507.6,1093.2L2510.2,1089.9L2512.8,1090.3L2515.4,1088.0L2518.0,1083.6L2520.6,1080.4L2523.2,1073.0L2525.8,1063.1L2528.4,1061.3L2531.0,1065.7L2533.6,1066.9L2536.2,1068.8L2538.8,1074.7L2541.4,1073.8L2544.0,1079.1L2546.6,1076.6L2549.2,1076.0L2551.8,1070.3L2554.4,1068.9L2557.0,1070.8L2559.6,1074.1L2562.2,1073.8L2564.8,1076.4L2567.4,1073.6L2570.0,1078.2L2572.6,1077.0L2575.2,1077.4L2577.8,1075.2L2580.4,1075.7L2583.0,1076.0L2585.6,1077.1L2588.2,1071.6L2590.8,1072.8L2593.4,1074.9L2596.0,1076.2L2598.6,1072.3L2601.2,1072.4L2603.8,1077.5L2606.4,1078.4L2609.0,1076.0L2611.6,1072.8L2614.2,1076.7L2616.8,1073.4L2619.4,1077.1L2622.0,1079.8L2624.6,1089.3L2627.2,1085.7L2629.8,1088.0L2632.4,1085.9L2635.0,1088.0L2637.6,1089.3L2640.2,1087.2L2642.8,1082.0L2645.4,1082.7L2648.0,1085.3L2650.6,1087.6L2653.2,1088.0L2655.8,1087.7L2658.4,1088.3L2661.0,1090.2L2663.6,1090.7L2666.2,1086.6L2668.8,1088.6L2671.4,1089.0L2671.4,1087.9L2671.4,1159.8L170.2,1159.8Z" fill="url(#gm)" clip-path="url(#cu)"/>
<rect x="2373.4" y="1040" width="297.9" height="119.8" fill="url(#gs)"/>
<path d="M170.2,1134.3L172.8,1134.3L175.4,1134.7L178.0,1134.4L180.6,1134.8L183.2,1135.0L185.8,1135.8L188.4,1136.9L191.0,1136.5L193.6,1136.7L196.2,1136.3L198.8,1136.3L201.4,1136.4L204.0,1136.5L206.6,1136.0L209.2,1136.0L211.8,1136.1L214.4,1136.2L217.0,1135.9L219.6,1135.8L222.2,1136.2L224.8,1135.6L227.4,1136.1L230.0,1135.7L232.6,1135.6L235.2,1135.5L237.8,1135.7L240.4,1136.0L243.0,1135.5L245.6,1135.8L248.2,1135.8L250.8,1135.6L253.4,1135.7L256.0,1135.4L258.6,1135.4L261.2,1135.4L263.8,1135.7L266.4,1135.6L269.0,1135.5L271.6,1135.6L274.2,1135.5L276.8,1135.4L279.4,1135.7L282.0,1135.6L284.6,1135.3L287.2,1135.5L289.8,1135.5L292.4,1135.7L295.0,1135.6L297.6,1135.3L300.2,1135.7L302.8,1135.1L305.4,1135.3L308.0,1135.5L310.6,1135.1L313.2,1135.3L315.8,1135.0L318.4,1135.3L321.0,1135.4L323.6,1135.2L326.2,1135.4L328.8,1135.0L331.4,1135.2L334.0,1135.1L336.6,1135.1L339.2,1135.0L341.8,1135.2L344.4,1135.3L347.0,1134.9L349.6,1135.0L352.2,1134.5L354.8,1134.3L357.4,1133.6L360.0,1133.3L362.6,1133.2L365.2,1132.9L367.8,1133.0L370.4,1133.3L373.0,1132.8L375.6,1133.2L378.2,1133.1L380.8,1133.1L383.4,1133.1L386.0,1133.7L388.6,1133.3L391.2,1133.4L393.8,1133.6L396.4,1134.1L399.0,1133.5L401.6,1133.8L404.2,1134.0L406.8,1134.2L409.4,1134.2L412.0,1134.2L414.6,1133.8L417.2,1133.9L419.8,1133.9L422.4,1134.3L425.0,1134.4L427.6,1133.8L430.2,1133.9L432.8,1133.9L435.4,1133.9L438.0,1134.1L440.6,1134.2L443.2,1134.0L445.8,1133.8L448.4,1134.2L451.0,1134.1L453.6,1134.3L456.2,1134.6L458.8,1134.4L461.4,1134.3L464.0,1134.4L466.6,1134.5L469.2,1134.0L471.8,1134.7L474.4,1134.5L477.0,1134.4L479.6,1134.2L482.2,1133.7L484.8,1133.5L487.4,1133.1L490.0,1131.3L492.6,1127.5L495.2,1126.5L497.8,1126.5L500.4,1126.1L503.0,1126.1L505.6,1126.0L508.2,1126.3L510.8,1126.8L513.4,1127.1L516.0,1127.8L518.6,1127.7L521.2,1128.2L523.8,1127.4L526.4,1126.7L529.0,1128.9L531.6,1131.1L534.2,1133.3L536.8,1134.6L539.4,1134.8L542.0,1134.6L544.6,1133.9L547.2,1133.6L549.8,1133.1L552.4,1133.2L555.0,1133.4L557.6,1133.4L560.2,1133.9L562.8,1133.4L565.4,1133.4L568.0,1134.1L570.6,1133.9L573.2,1133.6L575.8,1133.2L578.4,1131.8L581.0,1131.3L583.6,1130.8L586.2,1129.8L588.8,1128.6L591.4,1127.7L594.0,1127.5L596.6,1126.9L599.2,1128.5L601.8,1129.1L604.4,1130.3L607.0,1130.6L609.6,1130.4L612.2,1130.9L614.8,1131.0L617.4,1130.8L620.0,1130.6L622.6,1130.6L625.2,1130.4L627.8,1129.7L630.4,1130.0L633.0,1129.7L635.6,1129.1L638.2,1128.7L640.8,1128.6L643.4,1128.2L646.0,1128.4L648.6,1128.4L651.2,1127.4L653.8,1124.1L656.4,1118.5L659.0,1113.0L661.6,1106.0L664.2,1099.9L666.8,1102.1L669.4,1106.5L672.0,1109.8L674.6,1113.8L677.2,1117.3L679.8,1112.2L682.4,1105.5L685.0,1106.4L687.6,1107.2L690.2,1105.4L692.8,1107.6L695.4,1108.8L698.0,1108.8L700.6,1107.9L703.2,1107.9L705.8,1112.9L708.4,1119.9L711.0,1122.4L713.6,1121.4L716.2,1120.3L718.8,1118.3L721.4,1117.5L724.0,1118.7L726.6,1119.4L729.2,1119.5L731.8,1120.3L734.4,1120.9L737.0,1122.8L739.6,1123.1L742.2,1122.6L744.8,1125.8L747.4,1127.8L750.0,1126.9L752.6,1126.0L755.2,1125.8L757.8,1124.8L760.4,1124.1L763.0,1125.8L765.6,1125.6L768.2,1125.8L770.8,1126.7L773.4,1126.3L776.0,1127.2L778.6,1127.5L781.2,1126.8L783.8,1126.0L786.4,1125.2L789.0,1124.3L791.6,1124.0L794.2,1122.7L796.8,1122.3L799.4,1121.1L802.0,1121.8L804.6,1119.2L807.2,1116.5L809.8,1113.9L812.4,1113.5L815.0,1113.0L817.6,1114.8L820.2,1114.5L822.8,1114.4L825.4,1113.8L828.0,1111.9L830.6,1112.3L833.2,1111.0L835.8,1111.5L838.4,1114.8L841.0,1114.8L843.6,1115.9L846.2,1116.7L848.8,1116.6L851.4,1116.3L854.0,1118.0L856.6,1119.3L859.2,1119.2L861.8,1117.4L864.4,1117.8L867.0,1116.6L869.6,1116.0L872.2,1116.4L874.8,1115.2L877.4,1114.9L880.0,1115.6L882.6,1116.2L885.2,1115.4L887.8,1116.0L890.4,1116.1L893.0,1116.3L895.6,1117.0L898.2,1116.1L900.8,1115.4L903.4,1114.3L906.0,1114.5L908.6,1113.0L911.2,1113.7L913.8,1114.8L916.4,1114.1L919.0,1115.7L921.6,1117.5L924.2,1117.6L926.8,1116.4L929.4,1116.6L932.0,1117.6L934.6,1117.1L937.2,1117.7L939.8,1118.7L942.4,1121.3L945.0,1122.8L947.6,1122.8L950.2,1121.4L952.8,1122.3L955.4,1121.8L958.0,1119.7L960.6,1119.8L963.2,1119.4L965.8,1118.8L968.4,1121.1L971.0,1121.0L973.6,1121.9L976.2,1123.0L978.8,1123.0L981.4,1122.1L984.0,1122.8L986.6,1123.2L989.2,1123.6L991.8,1124.3L994.4,1125.4L997.0,1126.8L999.6,1126.2L1002.2,1126.9L1004.8,1126.7L1007.4,1126.2L1010.0,1126.6L1012.6,1127.0L1015.2,1124.1L1017.8,1120.2L1020.4,1122.0L1023.0,1122.1L1025.6,1122.8L1028.2,1121.8L1030.8,1122.5L1033.4,1122.6L1036.0,1124.2L1038.6,1123.7L1041.2,1123.9L1043.8,1124.6L1046.4,1125.1L1049.0,1124.7L1051.6,1123.6L1054.2,1123.2L1056.8,1124.1L1059.4,1123.3L1062.0,1123.2L1064.6,1121.8L1067.2,1121.4L1069.8,1122.2L1072.4,1121.4L1075.0,1120.4L1077.6,1121.6L1080.2,1121.3L1082.8,1122.2L1085.4,1121.6L1088.0,1123.5L1090.6,1122.9L1093.2,1124.7L1095.8,1124.0L1098.4,1123.6L1101.0,1123.7L1103.6,1124.0L1106.2,1123.4L1108.8,1123.7L1111.4,1124.8L1114.0,1124.9L1116.6,1125.3L1119.2,1125.9L1121.8,1126.3L1124.4,1127.1L1127.0,1128.5L1129.6,1129.7L1132.2,1131.1L1134.8,1130.7L1137.4,1131.0L1140.0,1130.8L1142.6,1131.0L1145.2,1130.8L1147.8,1131.1L1150.4,1131.0L1153.0,1131.8L1155.6,1131.7L1158.2,1131.5L1160.8,1131.9L1163.4,1132.6L1166.0,1132.2L1168.6,1133.1L1171.2,1133.0L1173.8,1133.3L1176.4,1133.6L1179.0,1133.2L1181.6,1133.3L1184.2,1133.4L1186.8,1133.6L1189.4,1133.0L1192.0,1133.3L1194.6,1133.2L1197.2,1133.1L1199.8,1132.8L1202.4,1132.7L1205.0,1132.4L1207.6,1132.3L1210.2,1132.2L1212.8,1132.7L1215.4,1132.2L1218.0,1132.0L1220.6,1131.9L1223.2,1132.5L1225.8,1132.4L1228.4,1132.2L1231.0,1131.7L1233.6,1131.6L1236.2,1131.6L1238.8,1131.8L1241.4,1131.6L1244.0,1131.9L1246.6,1131.7L1249.2,1132.4L1251.8,1132.5L1254.4,1132.1L1257.0,1131.9L1259.6,1132.5L1262.2,1132.0L1264.8,1132.1L1267.4,1131.8L1270.0,1132.2L1272.6,1132.3L1275.2,1132.3L1277.8,1132.1L1280.4,1132.4L1283.0,1131.3L1285.6,1130.9L1288.2,1130.0L1290.8,1129.7L1293.4,1129.2L1296.0,1129.1L1298.6,1129.4L1301.2,1129.2L1303.8,1129.6L1306.4,1129.4L1309.0,1129.6L1311.6,1129.5L1314.2,1129.6L1316.8,1129.8L1319.4,1129.3L1322.0,1129.3L1324.6,1130.1L1327.2,1129.2L1329.8,1129.9L1332.4,1129.8L1335.0,1129.2L1337.6,1130.1L1340.2,1130.2L1342.8,1130.4L1345.4,1131.2L1348.0,1131.9L1350.6,1131.4L1353.2,1131.7L1355.8,1131.7L1358.4,1131.9L1361.0,1131.9L1363.6,1131.8L1366.2,1131.6L1368.8,1131.8L1371.4,1131.6L1374.0,1131.5L1376.6,1131.0L1379.2,1130.9L1381.8,1131.1L1384.4,1131.4L1387.0,1131.3L1389.6,1132.0L1392.2,1131.8L1394.8,1132.0L1397.4,1132.1L1400.0,1132.2L1402.6,1132.1L1405.2,1131.7L1407.8,1132.5L1410.4,1132.6L1413.0,1132.3L1415.6,1132.2L1418.2,1132.2L1420.8,1131.5L1423.4,1132.0L1426.0,1131.4L1428.6,1131.1L1431.2,1131.1L1433.8,1131.5L1436.4,1130.8L1439.0,1131.2L1441.6,1131.3L1444.2,1130.8L1446.8,1130.8L1449.4,1130.9L1452.0,1131.2L1454.6,1131.3L1457.2,1131.2L1459.8,1131.2L1462.4,1130.7L1465.0,1130.8L1467.6,1131.0L1470.2,1131.5L1472.8,1131.1L1475.4,1131.4L1478.0,1130.9L1480.6,1131.0L1483.2,1131.3L1485.8,1131.7L1488.4,1131.8L1491.0,1131.8L1493.6,1131.5L1496.2,1131.7L1498.8,1131.7L1501.4,1131.6L1504.0,1130.6L1506.6,1130.8L1509.2,1129.5L1511.8,1129.8L1514.4,1129.1L1517.0,1127.8L1519.6,1128.4L1522.2,1128.9L1524.8,1129.2L1527.4,1128.7L1530.0,1128.6L1532.6,1128.6L1535.2,1129.6L1537.8,1128.8L1540.4,1129.4L1543.0,1129.0L1545.6,1129.5L1548.2,1130.1L1550.8,1129.3L1553.4,1130.1L1556.0,1129.9L1558.6,1130.4L1561.2,1130.3L1563.8,1129.9L1566.4,1130.7L1569.0,1130.2L1571.6,1129.7L1574.2,1129.7L1576.8,1130.1L1579.4,1130.1L1582.0,1129.9L1584.6,1129.7L1587.2,1129.8L1589.8,1129.8L1592.4,1130.3L1595.0,1129.4L1597.6,1130.1L1600.2,1130.2L1602.8,1129.4L1605.4,1130.2L1608.0,1130.0L1610.6,1130.1L1613.2,1129.4L1615.8,1129.5L1618.4,1129.5L1621.0,1130.1L1623.6,1129.6L1626.2,1129.3L1628.8,1129.4L1631.4,1129.2L1634.0,1128.9L1636.6,1128.9L1639.2,1129.7L1641.8,1125.5L1644.4,1124.6L1647.0,1122.9L1649.6,1122.4L1652.2,1123.3L1654.8,1123.2L1657.4,1123.9L1660.0,1125.2L1662.6,1125.5L1665.2,1125.8L1667.8,1126.0L1670.4,1126.8L1673.0,1127.3L1675.6,1127.2L1678.2,1127.9L1680.8,1127.5L1683.4,1128.6L1686.0,1128.3L1688.6,1128.7L1691.2,1128.6L1693.8,1128.2L1696.4,1127.9L1699.0,1129.0L1701.6,1128.1L1704.2,1128.5L1706.8,1128.4L1709.4,1128.4L1712.0,1129.0L1714.6,1129.3L1717.2,1128.4L1719.8,1128.9L1722.4,1128.6L1725.0,1128.9L1727.6,1128.7L1730.2,1128.5L1732.8,1128.5L1735.4,1128.6L1738.0,1129.5L1740.6,1129.0L1743.2,1128.7L1745.8,1129.6L1748.4,1129.7L1751.0,1129.1L1753.6,1128.8L1756.2,1128.9L1758.8,1128.8L1761.4,1129.1L1764.0,1128.6L1766.6,1128.3L1769.2,1127.8L1771.8,1127.6L1774.4,1127.6L1777.0,1126.9L1779.6,1125.9L1782.2,1125.4L1784.8,1125.5L1787.4,1125.4L1790.0,1125.6L1792.6,1125.4L1795.2,1125.9L1797.8,1127.0L1800.4,1126.1L1803.0,1126.8L1805.6,1127.0L1808.2,1127.3L1810.8,1126.4L1813.4,1126.5L1816.0,1126.5L1818.6,1126.7L1821.2,1126.7L1823.8,1127.4L1826.4,1127.3L1829.0,1127.3L1831.6,1126.2L1834.2,1126.2L1836.8,1127.1L1839.4,1127.3L1842.0,1126.8L1844.6,1126.9L1847.2,1126.2L1849.8,1126.8L1852.4,1127.6L1855.0,1127.6L1857.6,1127.7L1860.2,1127.9L1862.8,1127.0L1865.4,1126.9L1868.0,1127.1L1870.6,1127.6L1873.2,1127.9L1875.8,1128.3L1878.4,1128.1L1881.0,1128.1L1883.6,1128.3L1886.2,1128.0L1888.8,1128.2L1891.4,1127.7L1894.0,1128.6L1896.6,1127.8L1899.2,1128.5L1901.8,1128.0L1904.4,1127.4L1907.0,1127.0L1909.6,1127.0L1912.2,1127.4L1914.8,1127.3L1917.4,1126.3L1920.0,1126.1L1922.6,1126.6L1925.2,1126.5L1927.8,1126.1L1930.4,1125.7L1933.0,1126.0L1935.6,1125.2L1938.2,1125.7L1940.8,1126.0L1943.4,1126.8L1946.0,1126.5L1948.6,1126.9L1951.2,1126.5L1953.8,1126.3L1956.4,1126.4L1959.0,1127.5L1961.6,1127.2L1964.2,1126.8L1966.8,1126.5L1969.4,1127.3L1972.0,1128.4L1974.6,1129.1L1977.2,1129.0L1979.8,1129.5L1982.4,1129.8L1985.0,1129.0L1987.6,1128.8L1990.2,1129.2L1992.8,1129.3L1995.4,1129.6L1998.0,1129.1L2000.6,1129.8L2003.2,1129.7L2005.8,1129.5L2008.4,1129.1L2011.0,1130.0L2013.6,1129.3L2016.2,1129.9L2018.8,1129.2L2021.4,1129.2L2024.0,1129.8L2026.6,1129.3L2029.2,1130.1L2031.8,1129.6L2034.4,1129.3L2037.0,1129.3L2039.6,1129.5L2042.2,1129.8L2044.8,1130.2L2047.4,1129.3L2050.0,1129.6L2052.6,1129.4L2055.2,1130.2L2057.8,1129.3L2060.4,1129.3L2063.0,1129.3L2065.6,1129.7L2068.2,1130.2L2070.8,1130.2L2073.4,1130.4L2076.0,1131.0L2078.6,1131.2L2081.2,1129.8L2083.8,1128.9L2086.4,1129.1L2089.0,1128.2L2091.6,1126.7L2094.2,1127.5L2096.8,1127.1L2099.4,1127.1L2102.0,1127.1L2104.6,1126.9L2107.2,1127.0L2109.8,1128.1L2112.4,1128.6L2115.0,1129.2L2117.6,1128.2L2120.2,1129.1L2122.8,1128.1L2125.4,1128.2L2128.0,1128.7L2130.6,1128.6L2133.2,1128.1L2135.8,1127.5L2138.4,1128.0L2141.0,1127.8L2143.6,1128.4L2146.2,1127.4L2148.8,1127.6L2151.4,1128.3L2154.0,1127.3L2156.6,1127.8L2159.2,1128.3L2161.8,1128.2L2164.4,1127.3L2167.0,1127.4L2169.6,1127.4L2172.2,1128.5L2174.8,1127.7L2177.4,1128.3L2180.0,1128.5L2182.6,1127.8L2185.2,1127.8L2187.8,1128.6L2190.4,1128.2L2193.0,1127.8L2195.6,1128.4L2198.2,1127.9L2200.8,1127.9L2203.4,1127.6L2206.0,1128.5L2208.6,1128.7L2211.2,1128.4L2213.8,1128.8L2216.4,1127.7L2219.0,1128.0L2221.6,1128.3L2224.2,1128.2L2226.8,1127.4L2229.4,1125.8L2232.0,1122.5L2234.6,1119.3L2237.2,1116.0L2239.8,1114.3L2242.4,1109.8L2245.0,1108.7L2247.6,1100.9L2250.2,1093.9L2252.8,1088.2L2255.4,1088.4L2258.0,1086.1L2260.6,1083.1L2263.2,1089.0L2265.8,1090.4L2268.4,1085.6L2271.0,1085.7L2273.6,1090.3L2276.2,1089.8L2278.8,1089.9L2281.4,1090.6L2284.0,1092.3L2286.6,1089.2L2289.2,1090.9L2291.8,1090.2L2294.4,1090.4L2297.0,1087.0L2299.6,1083.2L2302.2,1078.8L2304.8,1075.6L2307.4,1070.7L2310.0,1070.0L2312.6,1069.6L2315.2,1071.7L2317.8,1073.9L2320.4,1075.2L2323.0,1073.7L2325.6,1076.5L2328.2,1081.4L2330.8,1084.7L2333.4,1088.6L2336.0,1086.7L2338.6,1086.6L2341.2,1082.5L2343.8,1081.7L2346.4,1079.5L2349.0,1080.8L2351.6,1083.6L2354.2,1086.0L2356.8,1091.5L2359.4,1091.5L2362.0,1090.0L2364.6,1086.9L2367.2,1088.0L2369.8,1086.7L2372.4,1086.3L2375.0,1088.6L2377.6,1086.8L2380.2,1087.2L2382.8,1083.1L2385.4,1085.7L2388.0,1088.1L2390.6,1089.9L2393.2,1092.2L2395.8,1090.7L2398.4,1091.5L2401.0,1090.0L2403.6,1093.9L2406.2,1100.9L2408.8,1097.8L2411.4,1096.9L2414.0,1092.5L2416.6,1093.9L2419.2,1091.5L2421.8,1090.1L2424.4,1091.7L2427.0,1092.7L2429.6,1089.4L2432.2,1091.7L2434.8,1092.1L2437.4,1090.7L2440.0,1090.8L2442.6,1087.8L2445.2,1086.1L2447.8,1084.3L2450.4,1086.4L2453.0,1087.3L2455.6,1086.0L2458.2,1086.1L2460.8,1088.4L2463.4,1090.9L2466.0,1089.5L2468.6,1090.7L2471.2,1090.9L2473.8,1094.0L2476.4,1091.9L2479.0,1088.0L2481.6,1088.7L2484.2,1091.1L2486.8,1092.9L2489.4,1094.4L2492.0,1092.1L2494.6,1092.0L2497.2,1093.8L2499.8,1092.3L2502.4,1091.4L2505.0,1091.2L2507.6,1093.2L2510.2,1089.9L2512.8,1090.3L2515.4,1088.0L2518.0,1083.6L2520.6,1080.4L2523.2,1073.0L2525.8,1063.1L2528.4,1061.3L2531.0,1065.7L2533.6,1066.9L2536.2,1068.8L2538.8,1074.7L2541.4,1073.8L2544.0,1079.1L2546.6,1076.6L2549.2,1076.0L2551.8,1070.3L2554.4,1068.9L2557.0,1070.8L2559.6,1074.1L2562.2,1073.8L2564.8,1076.4L2567.4,1073.6L2570.0,1078.2L2572.6,1077.0L2575.2,1077.4L2577.8,1075.2L2580.4,1075.7L2583.0,1076.0L2585.6,1077.1L2588.2,1071.6L2590.8,1072.8L2593.4,1074.9L2596.0,1076.2L2598.6,1072.3L2601.2,1072.4L2603.8,1077.5L2606.4,1078.4L2609.0,1076.0L2611.6,1072.8L2614.2,1076.7L2616.8,1073.4L2619.4,1077.1L2622.0,1079.8L2624.6,1089.3L2627.2,1085.7L2629.8,1088.0L2632.4,1085.9L2635.0,1088.0L2637.6,1089.3L2640.2,1087.2L2642.8,1082.0L2645.4,1082.7L2648.0,1085.3L2650.6,1087.6L2653.2,1088.0L2655.8,1087.7L2658.4,1088.3L2661.0,1090.2L2663.6,1090.7L2666.2,1086.6L2668.8,1088.6L2671.4,1089.0L2671.4,1087.9L2671.4,1159.8L170.2,1159.8Z" fill="url(#gw)" clip-path="url(#cw)"/>
<path d="M170.2,1134.3L172.8,1134.3L175.4,1134.7L178.0,1134.4L180.6,1134.8L183.2,1135.0L185.8,1135.8L188.4,1136.9L191.0,1136.5L193.6,1136.7L196.2,1136.3L198.8,1136.3L201.4,1136.4L204.0,1136.5L206.6,1136.0L209.2,1136.0L211.8,1136.1L214.4,1136.2L217.0,1135.9L219.6,1135.8L222.2,1136.2L224.8,1135.6L227.4,1136.1L230.0,1135.7L232.6,1135.6L235.2,1135.5L237.8,1135.7L240.4,1136.0L243.0,1135.5L245.6,1135.8L248.2,1135.8L250.8,1135.6L253.4,1135.7L256.0,1135.4L258.6,1135.4L261.2,1135.4L263.8,1135.7L266.4,1135.6L269.0,1135.5L271.6,1135.6L274.2,1135.5L276.8,1135.4L279.4,1135.7L282.0,1135.6L284.6,1135.3L287.2,1135.5L289.8,1135.5L292.4,1135.7L295.0,1135.6L297.6,1135.3L300.2,1135.7L302.8,1135.1L305.4,1135.3L308.0,1135.5L310.6,1135.1L313.2,1135.3L315.8,1135.0L318.4,1135.3L321.0,1135.4L323.6,1135.2L326.2,1135.4L328.8,1135.0L331.4,1135.2L334.0,1135.1L336.6,1135.1L339.2,1135.0L341.8,1135.2L344.4,1135.3L347.0,1134.9L349.6,1135.0L352.2,1134.5L354.8,1134.3L357.4,1133.6L360.0,1133.3L362.6,1133.2L365.2,1132.9L367.8,1133.0L370.4,1133.3L373.0,1132.8L375.6,1133.2L378.2,1133.1L380.8,1133.1L383.4,1133.1L386.0,1133.7L388.6,1133.3L391.2,1133.4L393.8,1133.6L396.4,1134.1L399.0,1133.5L401.6,1133.8L404.2,1134.0L406.8,1134.2L409.4,1134.2L412.0,1134.2L414.6,1133.8L417.2,1133.9L419.8,1133.9L422.4,1134.3L425.0,1134.4L427.6,1133.8L430.2,1133.9L432.8,1133.9L435.4,1133.9L438.0,1134.1L440.6,1134.2L443.2,1134.0L445.8,1133.8L448.4,1134.2L451.0,1134.1L453.6,1134.3L456.2,1134.6L458.8,1134.4L461.4,1134.3L464.0,1134.4L466.6,1134.5L469.2,1134.0L471.8,1134.7L474.4,1134.5L477.0,1134.4L479.6,1134.2L482.2,1133.7L484.8,1133.5L487.4,1133.1L490.0,1131.3L492.6,1127.5L495.2,1126.5L497.8,1126.5L500.4,1126.1L503.0,1126.1L505.6,1126.0L508.2,1126.3L510.8,1126.8L513.4,1127.1L516.0,1127.8L518.6,1127.7L521.2,1128.2L523.8,1127.4L526.4,1126.7L529.0,1128.9L531.6,1131.1L534.2,1133.3L536.8,1134.6L539.4,1134.8L542.0,1134.6L544.6,1133.9L547.2,1133.6L549.8,1133.1L552.4,1133.2L555.0,1133.4L557.6,1133.4L560.2,1133.9L562.8,1133.4L565.4,1133.4L568.0,1134.1L570.6,1133.9L573.2,1133.6L575.8,1133.2L578.4,1131.8L581.0,1131.3L583.6,1130.8L586.2,1129.8L588.8,1128.6L591.4,1127.7L594.0,1127.5L596.6,1126.9L599.2,1128.5L601.8,1129.1L604.4,1130.3L607.0,1130.6L609.6,1130.4L612.2,1130.9L614.8,1131.0L617.4,1130.8L620.0,1130.6L622.6,1130.6L625.2,1130.4L627.8,1129.7L630.4,1130.0L633.0,1129.7L635.6,1129.1L638.2,1128.7L640.8,1128.6L643.4,1128.2L646.0,1128.4L648.6,1128.4L651.2,1127.4L653.8,1124.1L656.4,1118.5L659.0,1113.0L661.6,1106.0L664.2,1099.9L666.8,1102.1L669.4,1106.5L672.0,1109.8L674.6,1113.8L677.2,1117.3L679.8,1112.2L682.4,1105.5L685.0,1106.4L687.6,1107.2L690.2,1105.4L692.8,1107.6L695.4,1108.8L698.0,1108.8L700.6,1107.9L703.2,1107.9L705.8,1112.9L708.4,1119.9L711.0,1122.4L713.6,1121.4L716.2,1120.3L718.8,1118.3L721.4,1117.5L724.0,1118.7L726.6,1119.4L729.2,1119.5L731.8,1120.3L734.4,1120.9L737.0,1122.8L739.6,1123.1L742.2,1122.6L744.8,1125.8L747.4,1127.8L750.0,1126.9L752.6,1126.0L755.2,1125.8L757.8,1124.8L760.4,1124.1L763.0,1125.8L765.6,1125.6L768.2,1125.8L770.8,1126.7L773.4,1126.3L776.0,1127.2L778.6,1127.5L781.2,1126.8L783.8,1126.0L786.4,1125.2L789.0,1124.3L791.6,1124.0L794.2,1122.7L796.8,1122.3L799.4,1121.1L802.0,1121.8L804.6,1119.2L807.2,1116.5L809.8,1113.9L812.4,1113.5L815.0,1113.0L817.6,1114.8L820.2,1114.5L822.8,1114.4L825.4,1113.8L828.0,1111.9L830.6,1112.3L833.2,1111.0L835.8,1111.5L838.4,1114.8L841.0,1114.8L843.6,1115.9L846.2,1116.7L848.8,1116.6L851.4,1116.3L854.0,1118.0L856.6,1119.3L859.2,1119.2L861.8,1117.4L864.4,1117.8L867.0,1116.6L869.6,1116.0L872.2,1116.4L874.8,1115.2L877.4,1114.9L880.0,1115.6L882.6,1116.2L885.2,1115.4L887.8,1116.0L890.4,1116.1L893.0,1116.3L895.6,1117.0L898.2,1116.1L900.8,1115.4L903.4,1114.3L906.0,1114.5L908.6,1113.0L911.2,1113.7L913.8,1114.8L916.4,1114.1L919.0,1115.7L921.6,1117.5L924.2,1117.6L926.8,1116.4L929.4,1116.6L932.0,1117.6L934.6,1117.1L937.2,1117.7L939.8,1118.7L942.4,1121.3L945.0,1122.8L947.6,1122.8L950.2,1121.4L952.8,1122.3L955.4,1121.8L958.0,1119.7L960.6,1119.8L963.2,1119.4L965.8,1118.8L968.4,1121.1L971.0,1121.0L973.6,1121.9L976.2,1123.0L978.8,1123.0L981.4,1122.1L984.0,1122.8L986.6,1123.2L989.2,1123.6L991.8,1124.3L994.4,1125.4L997.0,1126.8L999.6,1126.2L1002.2,1126.9L1004.8,1126.7L1007.4,1126.2L1010.0,1126.6L1012.6,1127.0L1015.2,1124.1L1017.8,1120.2L1020.4,1122.0L1023.0,1122.1L1025.6,1122.8L1028.2,1121.8L1030.8,1122.5L1033.4,1122.6L1036.0,1124.2L1038.6,1123.7L1041.2,1123.9L1043.8,1124.6L1046.4,1125.1L1049.0,1124.7L1051.6,1123.6L1054.2,1123.2L1056.8,1124.1L1059.4,1123.3L1062.0,1123.2L1064.6,1121.8L1067.2,1121.4L1069.8,1122.2L1072.4,1121.4L1075.0,1120.4L1077.6,1121.6L1080.2,1121.3L1082.8,1122.2L1085.4,1121.6L1088.0,1123.5L1090.6,1122.9L1093.2,1124.7L1095.8,1124.0L1098.4,1123.6L1101.0,1123.7L1103.6,1124.0L1106.2,1123.4L1108.8,1123.7L1111.4,1124.8L1114.0,1124.9L1116.6,1125.3L1119.2,1125.9L1121.8,1126.3L1124.4,1127.1L1127.0,1128.5L1129.6,1129.7L1132.2,1131.1L1134.8,1130.7L1137.4,1131.0L1140.0,1130.8L1142.6,1131.0L1145.2,1130.8L1147.8,1131.1L1150.4,1131.0L1153.0,1131.8L1155.6,1131.7L1158.2,1131.5L1160.8,1131.9L1163.4,1132.6L1166.0,1132.2L1168.6,1133.1L1171.2,1133.0L1173.8,1133.3L1176.4,1133.6L1179.0,1133.2L1181.6,1133.3L1184.2,1133.4L1186.8,1133.6L1189.4,1133.0L1192.0,1133.3L1194.6,1133.2L1197.2,1133.1L1199.8,1132.8L1202.4,1132.7L1205.0,1132.4L1207.6,1132.3L1210.2,1132.2L1212.8,1132.7L1215.4,1132.2L1218.0,1132.0L1220.6,1131.9L1223.2,1132.5L1225.8,1132.4L1228.4,1132.2L1231.0,1131.7L1233.6,1131.6L1236.2,1131.6L1238.8,1131.8L1241.4,1131.6L1244.0,1131.9L1246.6,1131.7L1249.2,1132.4L1251.8,1132.5L1254.4,1132.1L1257.0,1131.9L1259.6,1132.5L1262.2,1132.0L1264.8,1132.1L1267.4,1131.8L1270.0,1132.2L1272.6,1132.3L1275.2,1132.3L1277.8,1132.1L1280.4,1132.4L1283.0,1131.3L1285.6,1130.9L1288.2,1130.0L1290.8,1129.7L1293.4,1129.2L1296.0,1129.1L1298.6,1129.4L1301.2,1129.2L1303.8,1129.6L1306.4,1129.4L1309.0,1129.6L1311.6,1129.5L1314.2,1129.6L1316.8,1129.8L1319.4,1129.3L1322.0,1129.3L1324.6,1130.1L1327.2,1129.2L1329.8,1129.9L1332.4,1129.8L1335.0,1129.2L1337.6,1130.1L1340.2,1130.2L1342.8,1130.4L1345.4,1131.2L1348.0,1131.9L1350.6,1131.4L1353.2,1131.7L1355.8,1131.7L1358.4,1131.9L1361.0,1131.9L1363.6,1131.8L1366.2,1131.6L1368.8,1131.8L1371.4,1131.6L1374.0,1131.5L1376.6,1131.0L1379.2,1130.9L1381.8,1131.1L1384.4,1131.4L1387.0,1131.3L1389.6,1132.0L1392.2,1131.8L1394.8,1132.0L1397.4,1132.1L1400.0,1132.2L1402.6,1132.1L1405.2,1131.7L1407.8,1132.5L1410.4,1132.6L1413.0,1132.3L1415.6,1132.2L1418.2,1132.2L1420.8,1131.5L1423.4,1132.0L1426.0,1131.4L1428.6,1131.1L1431.2,1131.1L1433.8,1131.5L1436.4,1130.8L1439.0,1131.2L1441.6,1131.3L1444.2,1130.8L1446.8,1130.8L1449.4,1130.9L1452.0,1131.2L1454.6,1131.3L1457.2,1131.2L1459.8,1131.2L1462.4,1130.7L1465.0,1130.8L1467.6,1131.0L1470.2,1131.5L1472.8,1131.1L1475.4,1131.4L1478.0,1130.9L1480.6,1131.0L1483.2,1131.3L1485.8,1131.7L1488.4,1131.8L1491.0,1131.8L1493.6,1131.5L1496.2,1131.7L1498.8,1131.7L1501.4,1131.6L1504.0,1130.6L1506.6,1130.8L1509.2,1129.5L1511.8,1129.8L1514.4,1129.1L1517.0,1127.8L1519.6,1128.4L1522.2,1128.9L1524.8,1129.2L1527.4,1128.7L1530.0,1128.6L1532.6,1128.6L1535.2,1129.6L1537.8,1128.8L1540.4,1129.4L1543.0,1129.0L1545.6,1129.5L1548.2,1130.1L1550.8,1129.3L1553.4,1130.1L1556.0,1129.9L1558.6,1130.4L1561.2,1130.3L1563.8,1129.9L1566.4,1130.7L1569.0,1130.2L1571.6,1129.7L1574.2,1129.7L1576.8,1130.1L1579.4,1130.1L1582.0,1129.9L1584.6,1129.7L1587.2,1129.8L1589.8,1129.8L1592.4,1130.3L1595.0,1129.4L1597.6,1130.1L1600.2,1130.2L1602.8,1129.4L1605.4,1130.2L1608.0,1130.0L1610.6,1130.1L1613.2,1129.4L1615.8,1129.5L1618.4,1129.5L1621.0,1130.1L1623.6,1129.6L1626.2,1129.3L1628.8,1129.4L1631.4,1129.2L1634.0,1128.9L1636.6,1128.9L1639.2,1129.7L1641.8,1125.5L1644.4,1124.6L1647.0,1122.9L1649.6,1122.4L1652.2,1123.3L1654.8,1123.2L1657.4,1123.9L1660.0,1125.2L1662.6,1125.5L1665.2,1125.8L1667.8,1126.0L1670.4,1126.8L1673.0,1127.3L1675.6,1127.2L1678.2,1127.9L1680.8,1127.5L1683.4,1128.6L1686.0,1128.3L1688.6,1128.7L1691.2,1128.6L1693.8,1128.2L1696.4,1127.9L1699.0,1129.0L1701.6,1128.1L1704.2,1128.5L1706.8,1128.4L1709.4,1128.4L1712.0,1129.0L1714.6,1129.3L1717.2,1128.4L1719.8,1128.9L1722.4,1128.6L1725.0,1128.9L1727.6,1128.7L1730.2,1128.5L1732.8,1128.5L1735.4,1128.6L1738.0,1129.5L1740.6,1129.0L1743.2,1128.7L1745.8,1129.6L1748.4,1129.7L1751.0,1129.1L1753.6,1128.8L1756.2,1128.9L1758.8,1128.8L1761.4,1129.1L1764.0,1128.6L1766.6,1128.3L1769.2,1127.8L1771.8,1127.6L1774.4,1127.6L1777.0,1126.9L1779.6,1125.9L1782.2,1125.4L1784.8,1125.5L1787.4,1125.4L1790.0,1125.6L1792.6,1125.4L1795.2,1125.9L1797.8,1127.0L1800.4,1126.1L1803.0,1126.8L1805.6,1127.0L1808.2,1127.3L1810.8,1126.4L1813.4,1126.5L1816.0,1126.5L1818.6,1126.7L1821.2,1126.7L1823.8,1127.4L1826.4,1127.3L1829.0,1127.3L1831.6,1126.2L1834.2,1126.2L1836.8,1127.1L1839.4,1127.3L1842.0,1126.8L1844.6,1126.9L1847.2,1126.2L1849.8,1126.8L1852.4,1127.6L1855.0,1127.6L1857.6,1127.7L1860.2,1127.9L1862.8,1127.0L1865.4,1126.9L1868.0,1127.1L1870.6,1127.6L1873.2,1127.9L1875.8,1128.3L1878.4,1128.1L1881.0,1128.1L1883.6,1128.3L1886.2,1128.0L1888.8,1128.2L1891.4,1127.7L1894.0,1128.6L1896.6,1127.8L1899.2,1128.5L1901.8,1128.0L1904.4,1127.4L1907.0,1127.0L1909.6,1127.0L1912.2,1127.4L1914.8,1127.3L1917.4,1126.3L1920.0,1126.1L1922.6,1126.6L1925.2,1126.5L1927.8,1126.1L1930.4,1125.7L1933.0,1126.0L1935.6,1125.2L1938.2,1125.7L1940.8,1126.0L1943.4,1126.8L1946.0,1126.5L1948.6,1126.9L1951.2,1126.5L1953.8,1126.3L1956.4,1126.4L1959.0,1127.5L1961.6,1127.2L1964.2,1126.8L1966.8,1126.5L1969.4,1127.3L1972.0,1128.4L1974.6,1129.1L1977.2,1129.0L1979.8,1129.5L1982.4,1129.8L1985.0,1129.0L1987.6,1128.8L1990.2,1129.2L1992.8,1129.3L1995.4,1129.6L1998.0,1129.1L2000.6,1129.8L2003.2,1129.7L2005.8,1129.5L2008.4,1129.1L2011.0,1130.0L2013.6,1129.3L2016.2,1129.9L2018.8,1129.2L2021.4,1129.2L2024.0,1129.8L2026.6,1129.3L2029.2,1130.1L2031.8,1129.6L2034.4,1129.3L2037.0,1129.3L2039.6,1129.5L2042.2,1129.8L2044.8,1130.2L2047.4,1129.3L2050.0,1129.6L2052.6,1129.4L2055.2,1130.2L2057.8,1129.3L2060.4,1129.3L2063.0,1129.3L2065.6,1129.7L2068.2,1130.2L2070.8,1130.2L2073.4,1130.4L2076.0,1131.0L2078.6,1131.2L2081.2,1129.8L2083.8,1128.9L2086.4,1129.1L2089.0,1128.2L2091.6,1126.7L2094.2,1127.5L2096.8,1127.1L2099.4,1127.1L2102.0,1127.1L2104.6,1126.9L2107.2,1127.0L2109.8,1128.1L2112.4,1128.6L2115.0,1129.2L2117.6,1128.2L2120.2,1129.1L2122.8,1128.1L2125.4,1128.2L2128.0,1128.7L2130.6,1128.6L2133.2,1128.1L2135.8,1127.5L2138.4,1128.0L2141.0,1127.8L2143.6,1128.4L2146.2,1127.4L2148.8,1127.6L2151.4,1128.3L2154.0,1127.3L2156.6,1127.8L2159.2,1128.3L2161.8,1128.2L2164.4,1127.3L2167.0,1127.4L2169.6,1127.4L2172.2,1128.5L2174.8,1127.7L2177.4,1128.3L2180.0,1128.5L2182.6,1127.8L2185.2,1127.8L2187.8,1128.6L2190.4,1128.2L2193.0,1127.8L2195.6,1128.4L2198.2,1127.9L2200.8,1127.9L2203.4,1127.6L2206.0,1128.5L2208.6,1128.7L2211.2,1128.4L2213.8,1128.8L2216.4,1127.7L2219.0,1128.0L2221.6,1128.3L2224.2,1128.2L2226.8,1127.4L2229.4,1125.8L2232.0,1122.5L2234.6,1119.3L2237.2,1116.0L2239.8,1114.3L2242.4,1109.8L2245.0,1108.7L2247.6,1100.9L2250.2,1093.9L2252.8,1088.2L2255.4,1088.4L2258.0,1086.1L2260.6,1083.1L2263.2,1089.0L2265.8,1090.4L2268.4,1085.6L2271.0,1085.7L2273.6,1090.3L2276.2,1089.8L2278.8,1089.9L2281.4,1090.6L2284.0,1092.3L2286.6,1089.2L2289.2,1090.9L2291.8,1090.2L2294.4,1090.4L2297.0,1087.0L2299.6,1083.2L2302.2,1078.8L2304.8,1075.6L2307.4,1070.7L2310.0,1070.0L2312.6,1069.6L2315.2,1071.7L2317.8,1073.9L2320.4,1075.2L2323.0,1073.7L2325.6,1076.5L2328.2,1081.4L2330.8,1084.7L2333.4,1088.6L2336.0,1086.7L2338.6,1086.6L2341.2,1082.5L2343.8,1081.7L2346.4,1079.5L2349.0,1080.8L2351.6,1083.6L2354.2,1086.0L2356.8,1091.5L2359.4,1091.5L2362.0,1090.0L2364.6,1086.9L2367.2,1088.0L2369.8,1086.7L2372.4,1086.3L2375.0,1088.6L2377.6,1086.8L2380.2,1087.2L2382.8,1083.1L2385.4,1085.7L2388.0,1088.1L2390.6,1089.9L2393.2,1092.2L2395.8,1090.7L2398.4,1091.5L2401.0,1090.0L2403.6,1093.9L2406.2,1100.9L2408.8,1097.8L2411.4,1096.9L2414.0,1092.5L2416.6,1093.9L2419.2,1091.5L2421.8,1090.1L2424.4,1091.7L2427.0,1092.7L2429.6,1089.4L2432.2,1091.7L2434.8,1092.1L2437.4,1090.7L2440.0,1090.8L2442.6,1087.8L2445.2,1086.1L2447.8,1084.3L2450.4,1086.4L2453.0,1087.3L2455.6,1086.0L2458.2,1086.1L2460.8,1088.4L2463.4,1090.9L2466.0,1089.5L2468.6,1090.7L2471.2,1090.9L2473.8,1094.0L2476.4,1091.9L2479.0,1088.0L2481.6,1088.7L2484.2,1091.1L2486.8,1092.9L2489.4,1094.4L2492.0,1092.1L2494.6,1092.0L2497.2,1093.8L2499.8,1092.3L2502.4,1091.4L2505.0,1091.2L2507.6,1093.2L2510.2,1089.9L2512.8,1090.3L2515.4,1088.0L2518.0,1083.6L2520.6,1080.4L2523.2,1073.0L2525.8,1063.1L2528.4,1061.3L2531.0,1065.7L2533.6,1066.9L2536.2,1068.8L2538.8,1074.7L2541.4,1073.8L2544.0,1079.1L2546.6,1076.6L2549.2,1076.0L2551.8,1070.3L2554.4,1068.9L2557.0,1070.8L2559.6,1074.1L2562.2,1073.8L2564.8,1076.4L2567.4,1073.6L2570.0,1078.2L2572.6,1077.0L2575.2,1077.4L2577.8,1075.2L2580.4,1075.7L2583.0,1076.0L2585.6,1077.1L2588.2,1071.6L2590.8,1072.8L2593.4,1074.9L2596.0,1076.2L2598.6,1072.3L2601.2,1072.4L2603.8,1077.5L2606.4,1078.4L2609.0,1076.0L2611.6,1072.8L2614.2,1076.7L2616.8,1073.4L2619.4,1077.1L2622.0,1079.8L2624.6,1089.3L2627.2,1085.7L2629.8,1088.0L2632.4,1085.9L2635.0,1088.0L2637.6,1089.3L2640.2,1087.2L2642.8,1082.0L2645.4,1082.7L2648.0,1085.3L2650.6,1087.6L2653.2,1088.0L2655.8,1087.7L2658.4,1088.3L2661.0,1090.2L2663.6,1090.7L2666.2,1086.6L2668.8,1088.6L2671.4,1089.0L2671.4,1087.9" fill="none" stroke="#3f59b0" stroke-width="1.05" stroke-linejoin="round" clip-path="url(#cu)"/>
<path d="M170.2,1134.3L172.8,1134.3L175.4,1134.7L178.0,1134.4L180.6,1134.8L183.2,1135.0L185.8,1135.8L188.4,1136.9L191.0,1136.5L193.6,1136.7L196.2,1136.3L198.8,1136.3L201.4,1136.4L204.0,1136.5L206.6,1136.0L209.2,1136.0L211.8,1136.1L214.4,1136.2L217.0,1135.9L219.6,1135.8L222.2,1136.2L224.8,1135.6L227.4,1136.1L230.0,1135.7L232.6,1135.6L235.2,1135.5L237.8,1135.7L240.4,1136.0L243.0,1135.5L245.6,1135.8L248.2,1135.8L250.8,1135.6L253.4,1135.7L256.0,1135.4L258.6,1135.4L261.2,1135.4L263.8,1135.7L266.4,1135.6L269.0,1135.5L271.6,1135.6L274.2,1135.5L276.8,1135.4L279.4,1135.7L282.0,1135.6L284.6,1135.3L287.2,1135.5L289.8,1135.5L292.4,1135.7L295.0,1135.6L297.6,1135.3L300.2,1135.7L302.8,1135.1L305.4,1135.3L308.0,1135.5L310.6,1135.1L313.2,1135.3L315.8,1135.0L318.4,1135.3L321.0,1135.4L323.6,1135.2L326.2,1135.4L328.8,1135.0L331.4,1135.2L334.0,1135.1L336.6,1135.1L339.2,1135.0L341.8,1135.2L344.4,1135.3L347.0,1134.9L349.6,1135.0L352.2,1134.5L354.8,1134.3L357.4,1133.6L360.0,1133.3L362.6,1133.2L365.2,1132.9L367.8,1133.0L370.4,1133.3L373.0,1132.8L375.6,1133.2L378.2,1133.1L380.8,1133.1L383.4,1133.1L386.0,1133.7L388.6,1133.3L391.2,1133.4L393.8,1133.6L396.4,1134.1L399.0,1133.5L401.6,1133.8L404.2,1134.0L406.8,1134.2L409.4,1134.2L412.0,1134.2L414.6,1133.8L417.2,1133.9L419.8,1133.9L422.4,1134.3L425.0,1134.4L427.6,1133.8L430.2,1133.9L432.8,1133.9L435.4,1133.9L438.0,1134.1L440.6,1134.2L443.2,1134.0L445.8,1133.8L448.4,1134.2L451.0,1134.1L453.6,1134.3L456.2,1134.6L458.8,1134.4L461.4,1134.3L464.0,1134.4L466.6,1134.5L469.2,1134.0L471.8,1134.7L474.4,1134.5L477.0,1134.4L479.6,1134.2L482.2,1133.7L484.8,1133.5L487.4,1133.1L490.0,1131.3L492.6,1127.5L495.2,1126.5L497.8,1126.5L500.4,1126.1L503.0,1126.1L505.6,1126.0L508.2,1126.3L510.8,1126.8L513.4,1127.1L516.0,1127.8L518.6,1127.7L521.2,1128.2L523.8,1127.4L526.4,1126.7L529.0,1128.9L531.6,1131.1L534.2,1133.3L536.8,1134.6L539.4,1134.8L542.0,1134.6L544.6,1133.9L547.2,1133.6L549.8,1133.1L552.4,1133.2L555.0,1133.4L557.6,1133.4L560.2,1133.9L562.8,1133.4L565.4,1133.4L568.0,1134.1L570.6,1133.9L573.2,1133.6L575.8,1133.2L578.4,1131.8L581.0,1131.3L583.6,1130.8L586.2,1129.8L588.8,1128.6L591.4,1127.7L594.0,1127.5L596.6,1126.9L599.2,1128.5L601.8,1129.1L604.4,1130.3L607.0,1130.6L609.6,1130.4L612.2,1130.9L614.8,1131.0L617.4,1130.8L620.0,1130.6L622.6,1130.6L625.2,1130.4L627.8,1129.7L630.4,1130.0L633.0,1129.7L635.6,1129.1L638.2,1128.7L640.8,1128.6L643.4,1128.2L646.0,1128.4L648.6,1128.4L651.2,1127.4L653.8,1124.1L656.4,1118.5L659.0,1113.0L661.6,1106.0L664.2,1099.9L666.8,1102.1L669.4,1106.5L672.0,1109.8L674.6,1113.8L677.2,1117.3L679.8,1112.2L682.4,1105.5L685.0,1106.4L687.6,1107.2L690.2,1105.4L692.8,1107.6L695.4,1108.8L698.0,1108.8L700.6,1107.9L703.2,1107.9L705.8,1112.9L708.4,1119.9L711.0,1122.4L713.6,1121.4L716.2,1120.3L718.8,1118.3L721.4,1117.5L724.0,1118.7L726.6,1119.4L729.2,1119.5L731.8,1120.3L734.4,1120.9L737.0,1122.8L739.6,1123.1L742.2,1122.6L744.8,1125.8L747.4,1127.8L750.0,1126.9L752.6,1126.0L755.2,1125.8L757.8,1124.8L760.4,1124.1L763.0,1125.8L765.6,1125.6L768.2,1125.8L770.8,1126.7L773.4,1126.3L776.0,1127.2L778.6,1127.5L781.2,1126.8L783.8,1126.0L786.4,1125.2L789.0,1124.3L791.6,1124.0L794.2,1122.7L796.8,1122.3L799.4,1121.1L802.0,1121.8L804.6,1119.2L807.2,1116.5L809.8,1113.9L812.4,1113.5L815.0,1113.0L817.6,1114.8L820.2,1114.5L822.8,1114.4L825.4,1113.8L828.0,1111.9L830.6,1112.3L833.2,1111.0L835.8,1111.5L838.4,1114.8L841.0,1114.8L843.6,1115.9L846.2,1116.7L848.8,1116.6L851.4,1116.3L854.0,1118.0L856.6,1119.3L859.2,1119.2L861.8,1117.4L864.4,1117.8L867.0,1116.6L869.6,1116.0L872.2,1116.4L874.8,1115.2L877.4,1114.9L880.0,1115.6L882.6,1116.2L885.2,1115.4L887.8,1116.0L890.4,1116.1L893.0,1116.3L895.6,1117.0L898.2,1116.1L900.8,1115.4L903.4,1114.3L906.0,1114.5L908.6,1113.0L911.2,1113.7L913.8,1114.8L916.4,1114.1L919.0,1115.7L921.6,1117.5L924.2,1117.6L926.8,1116.4L929.4,1116.6L932.0,1117.6L934.6,1117.1L937.2,1117.7L939.8,1118.7L942.4,1121.3L945.0,1122.8L947.6,1122.8L950.2,1121.4L952.8,1122.3L955.4,1121.8L958.0,1119.7L960.6,1119.8L963.2,1119.4L965.8,1118.8L968.4,1121.1L971.0,1121.0L973.6,1121.9L976.2,1123.0L978.8,1123.0L981.4,1122.1L984.0,1122.8L986.6,1123.2L989.2,1123.6L991.8,1124.3L994.4,1125.4L997.0,1126.8L999.6,1126.2L1002.2,1126.9L1004.8,1126.7L1007.4,1126.2L1010.0,1126.6L1012.6,1127.0L1015.2,1124.1L1017.8,1120.2L1020.4,1122.0L1023.0,1122.1L1025.6,1122.8L1028.2,1121.8L1030.8,1122.5L1033.4,1122.6L1036.0,1124.2L1038.6,1123.7L1041.2,1123.9L1043.8,1124.6L1046.4,1125.1L1049.0,1124.7L1051.6,1123.6L1054.2,1123.2L1056.8,1124.1L1059.4,1123.3L1062.0,1123.2L1064.6,1121.8L1067.2,1121.4L1069.8,1122.2L1072.4,1121.4L1075.0,1120.4L1077.6,1121.6L1080.2,1121.3L1082.8,1122.2L1085.4,1121.6L1088.0,1123.5L1090.6,1122.9L1093.2,1124.7L1095.8,1124.0L1098.4,1123.6L1101.0,1123.7L1103.6,1124.0L1106.2,1123.4L1108.8,1123.7L1111.4,1124.8L1114.0,1124.9L1116.6,1125.3L1119.2,1125.9L1121.8,1126.3L1124.4,1127.1L1127.0,1128.5L1129.6,1129.7L1132.2,1131.1L1134.8,1130.7L1137.4,1131.0L1140.0,1130.8L1142.6,1131.0L1145.2,1130.8L1147.8,1131.1L1150.4,1131.0L1153.0,1131.8L1155.6,1131.7L1158.2,1131.5L1160.8,1131.9L1163.4,1132.6L1166.0,1132.2L1168.6,1133.1L1171.2,1133.0L1173.8,1133.3L1176.4,1133.6L1179.0,1133.2L1181.6,1133.3L1184.2,1133.4L1186.8,1133.6L1189.4,1133.0L1192.0,1133.3L1194.6,1133.2L1197.2,1133.1L1199.8,1132.8L1202.4,1132.7L1205.0,1132.4L1207.6,1132.3L1210.2,1132.2L1212.8,1132.7L1215.4,1132.2L1218.0,1132.0L1220.6,1131.9L1223.2,1132.5L1225.8,1132.4L1228.4,1132.2L1231.0,1131.7L1233.6,1131.6L1236.2,1131.6L1238.8,1131.8L1241.4,1131.6L1244.0,1131.9L1246.6,1131.7L1249.2,1132.4L1251.8,1132.5L1254.4,1132.1L1257.0,1131.9L1259.6,1132.5L1262.2,1132.0L1264.8,1132.1L1267.4,1131.8L1270.0,1132.2L1272.6,1132.3L1275.2,1132.3L1277.8,1132.1L1280.4,1132.4L1283.0,1131.3L1285.6,1130.9L1288.2,1130.0L1290.8,1129.7L1293.4,1129.2L1296.0,1129.1L1298.6,1129.4L1301.2,1129.2L1303.8,1129.6L1306.4,1129.4L1309.0,1129.6L1311.6,1129.5L1314.2,1129.6L1316.8,1129.8L1319.4,1129.3L1322.0,1129.3L1324.6,1130.1L1327.2,1129.2L1329.8,1129.9L1332.4,1129.8L1335.0,1129.2L1337.6,1130.1L1340.2,1130.2L1342.8,1130.4L1345.4,1131.2L1348.0,1131.9L1350.6,1131.4L1353.2,1131.7L1355.8,1131.7L1358.4,1131.9L1361.0,1131.9L1363.6,1131.8L1366.2,1131.6L1368.8,1131.8L1371.4,1131.6L1374.0,1131.5L1376.6,1131.0L1379.2,1130.9L1381.8,1131.1L1384.4,1131.4L1387.0,1131.3L1389.6,1132.0L1392.2,1131.8L1394.8,1132.0L1397.4,1132.1L1400.0,1132.2L1402.6,1132.1L1405.2,1131.7L1407.8,1132.5L1410.4,1132.6L1413.0,1132.3L1415.6,1132.2L1418.2,1132.2L1420.8,1131.5L1423.4,1132.0L1426.0,1131.4L1428.6,1131.1L1431.2,1131.1L1433.8,1131.5L1436.4,1130.8L1439.0,1131.2L1441.6,1131.3L1444.2,1130.8L1446.8,1130.8L1449.4,1130.9L1452.0,1131.2L1454.6,1131.3L1457.2,1131.2L1459.8,1131.2L1462.4,1130.7L1465.0,1130.8L1467.6,1131.0L1470.2,1131.5L1472.8,1131.1L1475.4,1131.4L1478.0,1130.9L1480.6,1131.0L1483.2,1131.3L1485.8,1131.7L1488.4,1131.8L1491.0,1131.8L1493.6,1131.5L1496.2,1131.7L1498.8,1131.7L1501.4,1131.6L1504.0,1130.6L1506.6,1130.8L1509.2,1129.5L1511.8,1129.8L1514.4,1129.1L1517.0,1127.8L1519.6,1128.4L1522.2,1128.9L1524.8,1129.2L1527.4,1128.7L1530.0,1128.6L1532.6,1128.6L1535.2,1129.6L1537.8,1128.8L1540.4,1129.4L1543.0,1129.0L1545.6,1129.5L1548.2,1130.1L1550.8,1129.3L1553.4,1130.1L1556.0,1129.9L1558.6,1130.4L1561.2,1130.3L1563.8,1129.9L1566.4,1130.7L1569.0,1130.2L1571.6,1129.7L1574.2,1129.7L1576.8,1130.1L1579.4,1130.1L1582.0,1129.9L1584.6,1129.7L1587.2,1129.8L1589.8,1129.8L1592.4,1130.3L1595.0,1129.4L1597.6,1130.1L1600.2,1130.2L1602.8,1129.4L1605.4,1130.2L1608.0,1130.0L1610.6,1130.1L1613.2,1129.4L1615.8,1129.5L1618.4,1129.5L1621.0,1130.1L1623.6,1129.6L1626.2,1129.3L1628.8,1129.4L1631.4,1129.2L1634.0,1128.9L1636.6,1128.9L1639.2,1129.7L1641.8,1125.5L1644.4,1124.6L1647.0,1122.9L1649.6,1122.4L1652.2,1123.3L1654.8,1123.2L1657.4,1123.9L1660.0,1125.2L1662.6,1125.5L1665.2,1125.8L1667.8,1126.0L1670.4,1126.8L1673.0,1127.3L1675.6,1127.2L1678.2,1127.9L1680.8,1127.5L1683.4,1128.6L1686.0,1128.3L1688.6,1128.7L1691.2,1128.6L1693.8,1128.2L1696.4,1127.9L1699.0,1129.0L1701.6,1128.1L1704.2,1128.5L1706.8,1128.4L1709.4,1128.4L1712.0,1129.0L1714.6,1129.3L1717.2,1128.4L1719.8,1128.9L1722.4,1128.6L1725.0,1128.9L1727.6,1128.7L1730.2,1128.5L1732.8,1128.5L1735.4,1128.6L1738.0,1129.5L1740.6,1129.0L1743.2,1128.7L1745.8,1129.6L1748.4,1129.7L1751.0,1129.1L1753.6,1128.8L1756.2,1128.9L1758.8,1128.8L1761.4,1129.1L1764.0,1128.6L1766.6,1128.3L1769.2,1127.8L1771.8,1127.6L1774.4,1127.6L1777.0,1126.9L1779.6,1125.9L1782.2,1125.4L1784.8,1125.5L1787.4,1125.4L1790.0,1125.6L1792.6,1125.4L1795.2,1125.9L1797.8,1127.0L1800.4,1126.1L1803.0,1126.8L1805.6,1127.0L1808.2,1127.3L1810.8,1126.4L1813.4,1126.5L1816.0,1126.5L1818.6,1126.7L1821.2,1126.7L1823.8,1127.4L1826.4,1127.3L1829.0,1127.3L1831.6,1126.2L1834.2,1126.2L1836.8,1127.1L1839.4,1127.3L1842.0,1126.8L1844.6,1126.9L1847.2,1126.2L1849.8,1126.8L1852.4,1127.6L1855.0,1127.6L1857.6,1127.7L1860.2,1127.9L1862.8,1127.0L1865.4,1126.9L1868.0,1127.1L1870.6,1127.6L1873.2,1127.9L1875.8,1128.3L1878.4,1128.1L1881.0,1128.1L1883.6,1128.3L1886.2,1128.0L1888.8,1128.2L1891.4,1127.7L1894.0,1128.6L1896.6,1127.8L1899.2,1128.5L1901.8,1128.0L1904.4,1127.4L1907.0,1127.0L1909.6,1127.0L1912.2,1127.4L1914.8,1127.3L1917.4,1126.3L1920.0,1126.1L1922.6,1126.6L1925.2,1126.5L1927.8,1126.1L1930.4,1125.7L1933.0,1126.0L1935.6,1125.2L1938.2,1125.7L1940.8,1126.0L1943.4,1126.8L1946.0,1126.5L1948.6,1126.9L1951.2,1126.5L1953.8,1126.3L1956.4,1126.4L1959.0,1127.5L1961.6,1127.2L1964.2,1126.8L1966.8,1126.5L1969.4,1127.3L1972.0,1128.4L1974.6,1129.1L1977.2,1129.0L1979.8,1129.5L1982.4,1129.8L1985.0,1129.0L1987.6,1128.8L1990.2,1129.2L1992.8,1129.3L1995.4,1129.6L1998.0,1129.1L2000.6,1129.8L2003.2,1129.7L2005.8,1129.5L2008.4,1129.1L2011.0,1130.0L2013.6,1129.3L2016.2,1129.9L2018.8,1129.2L2021.4,1129.2L2024.0,1129.8L2026.6,1129.3L2029.2,1130.1L2031.8,1129.6L2034.4,1129.3L2037.0,1129.3L2039.6,1129.5L2042.2,1129.8L2044.8,1130.2L2047.4,1129.3L2050.0,1129.6L2052.6,1129.4L2055.2,1130.2L2057.8,1129.3L2060.4,1129.3L2063.0,1129.3L2065.6,1129.7L2068.2,1130.2L2070.8,1130.2L2073.4,1130.4L2076.0,1131.0L2078.6,1131.2L2081.2,1129.8L2083.8,1128.9L2086.4,1129.1L2089.0,1128.2L2091.6,1126.7L2094.2,1127.5L2096.8,1127.1L2099.4,1127.1L2102.0,1127.1L2104.6,1126.9L2107.2,1127.0L2109.8,1128.1L2112.4,1128.6L2115.0,1129.2L2117.6,1128.2L2120.2,1129.1L2122.8,1128.1L2125.4,1128.2L2128.0,1128.7L2130.6,1128.6L2133.2,1128.1L2135.8,1127.5L2138.4,1128.0L2141.0,1127.8L2143.6,1128.4L2146.2,1127.4L2148.8,1127.6L2151.4,1128.3L2154.0,1127.3L2156.6,1127.8L2159.2,1128.3L2161.8,1128.2L2164.4,1127.3L2167.0,1127.4L2169.6,1127.4L2172.2,1128.5L2174.8,1127.7L2177.4,1128.3L2180.0,1128.5L2182.6,1127.8L2185.2,1127.8L2187.8,1128.6L2190.4,1128.2L2193.0,1127.8L2195.6,1128.4L2198.2,1127.9L2200.8,1127.9L2203.4,1127.6L2206.0,1128.5L2208.6,1128.7L2211.2,1128.4L2213.8,1128.8L2216.4,1127.7L2219.0,1128.0L2221.6,1128.3L2224.2,1128.2L2226.8,1127.4L2229.4,1125.8L2232.0,1122.5L2234.6,1119.3L2237.2,1116.0L2239.8,1114.3L2242.4,1109.8L2245.0,1108.7L2247.6,1100.9L2250.2,1093.9L2252.8,1088.2L2255.4,1088.4L2258.0,1086.1L2260.6,1083.1L2263.2,1089.0L2265.8,1090.4L2268.4,1085.6L2271.0,1085.7L2273.6,1090.3L2276.2,1089.8L2278.8,1089.9L2281.4,1090.6L2284.0,1092.3L2286.6,1089.2L2289.2,1090.9L2291.8,1090.2L2294.4,1090.4L2297.0,1087.0L2299.6,1083.2L2302.2,1078.8L2304.8,1075.6L2307.4,1070.7L2310.0,1070.0L2312.6,1069.6L2315.2,1071.7L2317.8,1073.9L2320.4,1075.2L2323.0,1073.7L2325.6,1076.5L2328.2,1081.4L2330.8,1084.7L2333.4,1088.6L2336.0,1086.7L2338.6,1086.6L2341.2,1082.5L2343.8,1081.7L2346.4,1079.5L2349.0,1080.8L2351.6,1083.6L2354.2,1086.0L2356.8,1091.5L2359.4,1091.5L2362.0,1090.0L2364.6,1086.9L2367.2,1088.0L2369.8,1086.7L2372.4,1086.3L2375.0,1088.6L2377.6,1086.8L2380.2,1087.2L2382.8,1083.1L2385.4,1085.7L2388.0,1088.1L2390.6,1089.9L2393.2,1092.2L2395.8,1090.7L2398.4,1091.5L2401.0,1090.0L2403.6,1093.9L2406.2,1100.9L2408.8,1097.8L2411.4,1096.9L2414.0,1092.5L2416.6,1093.9L2419.2,1091.5L2421.8,1090.1L2424.4,1091.7L2427.0,1092.7L2429.6,1089.4L2432.2,1091.7L2434.8,1092.1L2437.4,1090.7L2440.0,1090.8L2442.6,1087.8L2445.2,1086.1L2447.8,1084.3L2450.4,1086.4L2453.0,1087.3L2455.6,1086.0L2458.2,1086.1L2460.8,1088.4L2463.4,1090.9L2466.0,1089.5L2468.6,1090.7L2471.2,1090.9L2473.8,1094.0L2476.4,1091.9L2479.0,1088.0L2481.6,1088.7L2484.2,1091.1L2486.8,1092.9L2489.4,1094.4L2492.0,1092.1L2494.6,1092.0L2497.2,1093.8L2499.8,1092.3L2502.4,1091.4L2505.0,1091.2L2507.6,1093.2L2510.2,1089.9L2512.8,1090.3L2515.4,1088.0L2518.0,1083.6L2520.6,1080.4L2523.2,1073.0L2525.8,1063.1L2528.4,1061.3L2531.0,1065.7L2533.6,1066.9L2536.2,1068.8L2538.8,1074.7L2541.4,1073.8L2544.0,1079.1L2546.6,1076.6L2549.2,1076.0L2551.8,1070.3L2554.4,1068.9L2557.0,1070.8L2559.6,1074.1L2562.2,1073.8L2564.8,1076.4L2567.4,1073.6L2570.0,1078.2L2572.6,1077.0L2575.2,1077.4L2577.8,1075.2L2580.4,1075.7L2583.0,1076.0L2585.6,1077.1L2588.2,1071.6L2590.8,1072.8L2593.4,1074.9L2596.0,1076.2L2598.6,1072.3L2601.2,1072.4L2603.8,1077.5L2606.4,1078.4L2609.0,1076.0L2611.6,1072.8L2614.2,1076.7L2616.8,1073.4L2619.4,1077.1L2622.0,1079.8L2624.6,1089.3L2627.2,1085.7L2629.8,1088.0L2632.4,1085.9L2635.0,1088.0L2637.6,1089.3L2640.2,1087.2L2642.8,1082.0L2645.4,1082.7L2648.0,1085.3L2650.6,1087.6L2653.2,1088.0L2655.8,1087.7L2658.4,1088.3L2661.0,1090.2L2663.6,1090.7L2666.2,1086.6L2668.8,1088.6L2671.4,1089.0L2671.4,1087.9" fill="none" stroke="#7a90dc" stroke-width="1.05" stroke-linejoin="round" clip-path="url(#cw)"/>
<rect x="2360.9" y="1085" width="29" height="35" rx="12.5" fill="#2d3040"/>
<rect x="2370.9" y="1096.9" width="2.4" height="11.9" fill="#a7abbf"/>
<rect x="2377.3" y="1096.9" width="2.4" height="11.9" fill="#a7abbf"/>
<rect x="2654.7" y="1085" width="29" height="35" rx="12.5" fill="#2d3040"/>
<rect x="2664.7" y="1096.9" width="2.4" height="11.9" fill="#a7abbf"/>
<rect x="2671.1" y="1096.9" width="2.4" height="11.9" fill="#a7abbf"/>
<rect x="2573" y="1005.8" width="240" height="43.6" rx="6" fill="#000"/>
<text transform="translate(2586.80 1034.20) scale(0.9493 1)" font-family="Liberation Sans, sans-serif" font-size="24.5" fill="#fff" text-anchor="start" stroke="#fff" stroke-width="0.25">19 Nov 2025, 03:00</text>
<rect x="2785" y="1046.2" width="30" height="47.6" rx="5" fill="#5b5e64"/>
<path d="M2801,1058 L2795.6,1065.5 L2801,1073" fill="none" stroke="#1a1c20" stroke-width="2.4"/>
</svg>
</body></html>
